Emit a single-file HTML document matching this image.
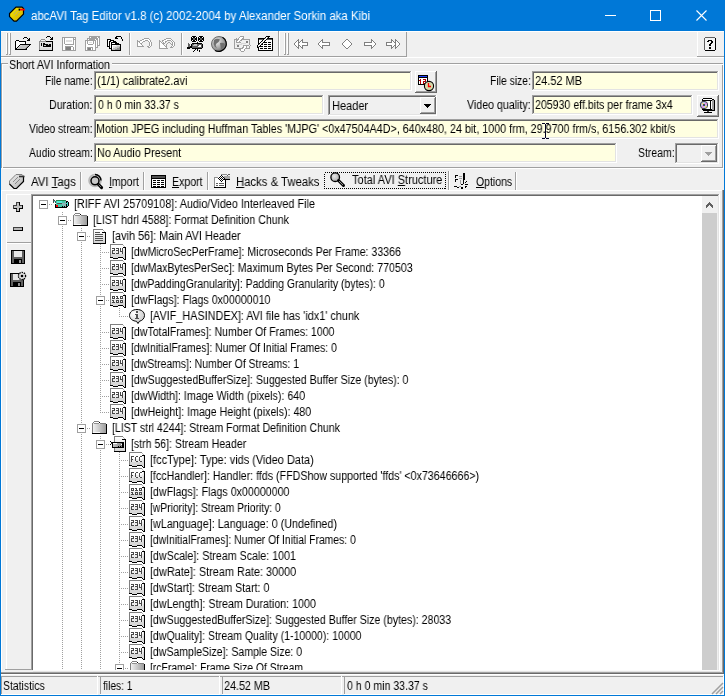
<!DOCTYPE html><html><head><meta charset="utf-8"><style>html,body{margin:0;padding:0;width:725px;height:696px;overflow:hidden;background:#f0f0f0;position:relative}svg{display:block}</style></head><body><div style="position:absolute;left:0px;top:0px;width:725px;height:31px;background:#0078d7;"></div>
<div style="position:absolute;left:0px;top:0px;width:1px;height:696px;background:#0078d7;"></div>
<div style="position:absolute;left:724px;top:0px;width:1px;height:696px;background:#0078d7;"></div>
<div style="position:absolute;left:0px;top:695px;width:725px;height:1px;background:#0078d7;"></div>
<svg style="position:absolute;left:6px;top:4px;" width="22" height="22" viewBox="0 0 22 22"><defs><linearGradient id="yg" x1="0" y1="0" x2="1" y2="1"><stop offset="0" stop-color="#fff000"/><stop offset="1" stop-color="#c8a800"/></linearGradient></defs>
<g transform="translate(0,0.6)">
<path d="M10 2.5 L16 2.5 L17.5 4 L17.5 9.5 L10.5 16.5 L8 16.5 L3.5 12 L3.5 9 Z" fill="url(#yg)" stroke="#000" stroke-width="1.2"/>
<path d="M7.5 9.5 L11.5 5.5 M9.5 11.5 L13.5 7.5" stroke="#9890c0" stroke-width="1" stroke-dasharray="1 0.5"/>
<path d="M14 5 L18.8 5" stroke="#ff0000" stroke-width="1.8"/><rect x="12.6" y="4" width="1.4" height="2" fill="#000"/></g></svg>
<div style="position:absolute;left:31.00px;top:6px;font:12px/20px 'Liberation Sans';white-space:pre;will-change:transform;transform:scaleX(0.9548);transform-origin:0 0;color:#fff;">abcAVI Tag Editor v1.8 (c) 2002-2004 by Alexander Sorkin aka Kibi</div>
<div style="position:absolute;left:605px;top:15px;width:11px;height:1px;background:#ffffff;"></div>
<svg style="position:absolute;left:650px;top:10px;" width="11" height="11" viewBox="0 0 11 11"><rect x="0.5" y="0.5" width="10" height="10" fill="none" stroke="#fff" stroke-width="1"/></svg>
<svg style="position:absolute;left:696px;top:10px;" width="11" height="11" viewBox="0 0 11 11"><path d="M0.5 0.5 L10.5 10.5 M10.5 0.5 L0.5 10.5" stroke="#fff" stroke-width="1.1"/></svg>
<div style="position:absolute;left:1px;top:31px;width:723px;height:1px;background:#ffffff;"></div>
<div style="position:absolute;left:278px;top:31px;width:1px;height:26px;background:#a0a0a0;"></div>
<div style="position:absolute;left:1px;top:56px;width:278px;height:1px;background:#a0a0a0;"></div>
<div style="position:absolute;left:6px;top:33px;width:1px;height:21px;background:#ffffff;"></div>
<div style="position:absolute;left:7px;top:33px;width:1px;height:22px;background:#a0a0a0;"></div>
<div style="position:absolute;left:6px;top:54px;width:2px;height:1px;background:#a0a0a0;"></div>
<div style="position:absolute;left:9px;top:33px;width:1px;height:21px;background:#ffffff;"></div>
<div style="position:absolute;left:10px;top:33px;width:1px;height:22px;background:#a0a0a0;"></div>
<div style="position:absolute;left:9px;top:54px;width:2px;height:1px;background:#a0a0a0;"></div>
<div style="position:absolute;left:279px;top:32px;width:1px;height:25px;background:#ffffff;"></div>
<div style="position:absolute;left:406px;top:32px;width:1px;height:25px;background:#a0a0a0;"></div>
<div style="position:absolute;left:279px;top:56px;width:128px;height:1px;background:#a0a0a0;"></div>
<div style="position:absolute;left:284px;top:33px;width:1px;height:21px;background:#ffffff;"></div>
<div style="position:absolute;left:285px;top:33px;width:1px;height:22px;background:#a0a0a0;"></div>
<div style="position:absolute;left:284px;top:54px;width:2px;height:1px;background:#a0a0a0;"></div>
<div style="position:absolute;left:287px;top:33px;width:1px;height:21px;background:#ffffff;"></div>
<div style="position:absolute;left:288px;top:33px;width:1px;height:22px;background:#a0a0a0;"></div>
<div style="position:absolute;left:287px;top:54px;width:2px;height:1px;background:#a0a0a0;"></div>
<div style="position:absolute;left:697px;top:32px;width:1px;height:25px;background:#ffffff;"></div>
<div style="position:absolute;left:697px;top:56px;width:27px;height:1px;background:#a0a0a0;"></div>
<div style="position:absolute;left:1px;top:57px;width:723px;height:1px;background:#ffffff;"></div>
<div style="position:absolute;left:129px;top:33px;width:1px;height:22px;background:#a0a0a0;"></div>
<div style="position:absolute;left:130px;top:33px;width:1px;height:22px;background:#ffffff;"></div>
<div style="position:absolute;left:181px;top:33px;width:1px;height:22px;background:#a0a0a0;"></div>
<div style="position:absolute;left:182px;top:33px;width:1px;height:22px;background:#ffffff;"></div>
<svg style="position:absolute;left:13px;top:34px;" width="20" height="20" viewBox="0 0 20 20"><g shape-rendering="crispEdges"><rect x="11" y="3" width="3" height="1" fill="#000"/><rect x="10" y="4" width="1" height="1" fill="#000"/><rect x="14" y="4" width="1" height="1" fill="#000"/><rect x="16" y="4" width="1" height="1" fill="#000"/><rect x="15" y="5" width="2" height="1" fill="#000"/><rect x="3" y="6" width="3" height="1" fill="#000"/><rect x="14" y="6" width="3" height="1" fill="#000"/><rect x="2" y="7" width="1" height="1" fill="#000"/><rect x="3" y="7" width="3" height="1" fill="#fff"/><rect x="6" y="7" width="7" height="1" fill="#000"/><rect x="2" y="8" width="1" height="1" fill="#000"/><rect x="3" y="8" width="9" height="1" fill="#fff"/><rect x="12" y="8" width="1" height="1" fill="#000"/><rect x="2" y="9" width="1" height="1" fill="#000"/><rect x="3" y="9" width="9" height="1" fill="#fff"/><rect x="12" y="9" width="1" height="1" fill="#000"/><rect x="2" y="10" width="1" height="1" fill="#000"/><rect x="3" y="10" width="4" height="1" fill="#fff"/><rect x="7" y="10" width="11" height="1" fill="#000"/><rect x="2" y="11" width="1" height="1" fill="#000"/><rect x="3" y="11" width="3" height="1" fill="#fff"/><rect x="6" y="11" width="1" height="1" fill="#000"/><rect x="7" y="11" width="2" height="1" fill="#d8d8d8"/><rect x="9" y="11" width="7" height="1" fill="#c0c0c0"/><rect x="16" y="11" width="1" height="1" fill="#000"/><rect x="2" y="12" width="1" height="1" fill="#000"/><rect x="3" y="12" width="2" height="1" fill="#fff"/><rect x="5" y="12" width="1" height="1" fill="#000"/><rect x="6" y="12" width="1" height="1" fill="#d8d8d8"/><rect x="7" y="12" width="7" height="1" fill="#c0c0c0"/><rect x="14" y="12" width="1" height="1" fill="#909090"/><rect x="15" y="12" width="1" height="1" fill="#000"/><rect x="2" y="13" width="1" height="1" fill="#000"/><rect x="3" y="13" width="1" height="1" fill="#fff"/><rect x="4" y="13" width="1" height="1" fill="#000"/><rect x="5" y="13" width="1" height="1" fill="#d8d8d8"/><rect x="6" y="13" width="7" height="1" fill="#c0c0c0"/><rect x="13" y="13" width="1" height="1" fill="#909090"/><rect x="14" y="13" width="1" height="1" fill="#000"/><rect x="2" y="14" width="2" height="1" fill="#000"/><rect x="4" y="14" width="1" height="1" fill="#d8d8d8"/><rect x="5" y="14" width="7" height="1" fill="#c0c0c0"/><rect x="12" y="14" width="1" height="1" fill="#909090"/><rect x="13" y="14" width="1" height="1" fill="#000"/><rect x="2" y="15" width="12" height="1" fill="#000"/></g></svg>
<svg style="position:absolute;left:37px;top:34px;" width="20" height="20" viewBox="0 0 20 20"><g shape-rendering="crispEdges"><rect x="10" y="2" width="3" height="1" fill="#000"/><rect x="9" y="3" width="1" height="1" fill="#000"/><rect x="13" y="3" width="1" height="1" fill="#000"/><rect x="15" y="3" width="1" height="1" fill="#000"/><rect x="14" y="4" width="2" height="1" fill="#000"/><rect x="4" y="5" width="4" height="1" fill="#909090"/><rect x="13" y="5" width="3" height="1" fill="#000"/><rect x="3" y="6" width="1" height="1" fill="#909090"/><rect x="8" y="6" width="1" height="1" fill="#909090"/><rect x="2" y="7" width="7" height="1" fill="#909090"/><rect x="9" y="7" width="7" height="1" fill="#000"/><rect x="2" y="8" width="1" height="1" fill="#909090"/><rect x="3" y="8" width="12" height="1" fill="#e0e0e0"/><rect x="15" y="8" width="1" height="1" fill="#000"/><rect x="2" y="9" width="1" height="1" fill="#909090"/><rect x="3" y="9" width="1" height="1" fill="#e0e0e0"/><rect x="4" y="9" width="1" height="1" fill="#000"/><rect x="5" y="9" width="1" height="1" fill="#e0e0e0"/><rect x="6" y="9" width="2" height="1" fill="#000"/><rect x="8" y="9" width="7" height="1" fill="#e0e0e0"/><rect x="15" y="9" width="1" height="1" fill="#000"/><rect x="2" y="10" width="1" height="1" fill="#909090"/><rect x="3" y="10" width="1" height="1" fill="#e0e0e0"/><rect x="4" y="10" width="1" height="1" fill="#000"/><rect x="5" y="10" width="1" height="1" fill="#e0e0e0"/><rect x="6" y="10" width="5" height="1" fill="#000"/><rect x="11" y="10" width="1" height="1" fill="#c0c0c0"/><rect x="12" y="10" width="2" height="1" fill="#000"/><rect x="14" y="10" width="1" height="1" fill="#e0e0e0"/><rect x="15" y="10" width="1" height="1" fill="#000"/><rect x="2" y="11" width="1" height="1" fill="#909090"/><rect x="3" y="11" width="1" height="1" fill="#e0e0e0"/><rect x="4" y="11" width="1" height="1" fill="#000"/><rect x="5" y="11" width="1" height="1" fill="#e0e0e0"/><rect x="6" y="11" width="1" height="1" fill="#000"/><rect x="7" y="11" width="2" height="1" fill="#c0c0c0"/><rect x="9" y="11" width="5" height="1" fill="#000"/><rect x="14" y="11" width="1" height="1" fill="#e0e0e0"/><rect x="15" y="11" width="1" height="1" fill="#000"/><rect x="2" y="12" width="1" height="1" fill="#909090"/><rect x="3" y="12" width="3" height="1" fill="#e0e0e0"/><rect x="6" y="12" width="8" height="1" fill="#000"/><rect x="14" y="12" width="1" height="1" fill="#e0e0e0"/><rect x="15" y="12" width="1" height="1" fill="#000"/><rect x="2" y="13" width="1" height="1" fill="#909090"/><rect x="3" y="13" width="12" height="1" fill="#e0e0e0"/><rect x="15" y="13" width="1" height="1" fill="#000"/><rect x="2" y="14" width="1" height="1" fill="#909090"/><rect x="3" y="14" width="12" height="1" fill="#d8d8d8"/><rect x="15" y="14" width="1" height="1" fill="#000"/><rect x="2" y="15" width="1" height="1" fill="#909090"/><rect x="3" y="15" width="12" height="1" fill="#d8d8d8"/><rect x="15" y="15" width="1" height="1" fill="#000"/><rect x="2" y="16" width="14" height="1" fill="#000"/></g></svg>
<svg style="position:absolute;left:60px;top:34px;" width="20" height="20" viewBox="0 0 20 20"><g shape-rendering="crispEdges"><rect x="2" y="3" width="14" height="1" fill="#a0a0a0"/><rect x="2" y="4" width="1" height="1" fill="#a0a0a0"/><rect x="3" y="4" width="1" height="1" fill="#fff"/><rect x="4" y="4" width="1" height="1" fill="#a0a0a0"/><rect x="5" y="4" width="8" height="1" fill="#fff"/><rect x="13" y="4" width="1" height="1" fill="#a0a0a0"/><rect x="14" y="4" width="1" height="1" fill="#fff"/><rect x="15" y="4" width="1" height="1" fill="#a0a0a0"/><rect x="2" y="5" width="1" height="1" fill="#a0a0a0"/><rect x="3" y="5" width="1" height="1" fill="#fff"/><rect x="4" y="5" width="1" height="1" fill="#a0a0a0"/><rect x="5" y="5" width="8" height="1" fill="#fff"/><rect x="13" y="5" width="3" height="1" fill="#a0a0a0"/><rect x="2" y="6" width="1" height="1" fill="#a0a0a0"/><rect x="3" y="6" width="1" height="1" fill="#fff"/><rect x="4" y="6" width="1" height="1" fill="#a0a0a0"/><rect x="5" y="6" width="1" height="1" fill="#fff"/><rect x="6" y="6" width="6" height="1" fill="#e0e0e0"/><rect x="12" y="6" width="1" height="1" fill="#fff"/><rect x="13" y="6" width="1" height="1" fill="#a0a0a0"/><rect x="14" y="6" width="1" height="1" fill="#fff"/><rect x="15" y="6" width="1" height="1" fill="#a0a0a0"/><rect x="2" y="7" width="1" height="1" fill="#a0a0a0"/><rect x="3" y="7" width="1" height="1" fill="#fff"/><rect x="4" y="7" width="1" height="1" fill="#a0a0a0"/><rect x="5" y="7" width="1" height="1" fill="#fff"/><rect x="6" y="7" width="6" height="1" fill="#e0e0e0"/><rect x="12" y="7" width="1" height="1" fill="#fff"/><rect x="13" y="7" width="1" height="1" fill="#a0a0a0"/><rect x="14" y="7" width="1" height="1" fill="#fff"/><rect x="15" y="7" width="1" height="1" fill="#a0a0a0"/><rect x="2" y="8" width="1" height="1" fill="#a0a0a0"/><rect x="3" y="8" width="1" height="1" fill="#fff"/><rect x="4" y="8" width="1" height="1" fill="#a0a0a0"/><rect x="5" y="8" width="8" height="1" fill="#fff"/><rect x="13" y="8" width="1" height="1" fill="#a0a0a0"/><rect x="14" y="8" width="1" height="1" fill="#fff"/><rect x="15" y="8" width="1" height="1" fill="#a0a0a0"/><rect x="2" y="9" width="1" height="1" fill="#a0a0a0"/><rect x="3" y="9" width="1" height="1" fill="#fff"/><rect x="4" y="9" width="1" height="1" fill="#a0a0a0"/><rect x="5" y="9" width="8" height="1" fill="#fff"/><rect x="13" y="9" width="1" height="1" fill="#a0a0a0"/><rect x="14" y="9" width="1" height="1" fill="#fff"/><rect x="15" y="9" width="1" height="1" fill="#a0a0a0"/><rect x="2" y="10" width="1" height="1" fill="#a0a0a0"/><rect x="3" y="10" width="2" height="1" fill="#fff"/><rect x="5" y="10" width="9" height="1" fill="#a0a0a0"/><rect x="14" y="10" width="1" height="1" fill="#fff"/><rect x="15" y="10" width="1" height="1" fill="#a0a0a0"/><rect x="2" y="11" width="1" height="1" fill="#a0a0a0"/><rect x="3" y="11" width="12" height="1" fill="#fff"/><rect x="15" y="11" width="1" height="1" fill="#a0a0a0"/><rect x="2" y="12" width="1" height="1" fill="#a0a0a0"/><rect x="3" y="12" width="2" height="1" fill="#fff"/><rect x="5" y="12" width="8" height="1" fill="#a0a0a0"/><rect x="13" y="12" width="2" height="1" fill="#fff"/><rect x="15" y="12" width="1" height="1" fill="#a0a0a0"/><rect x="2" y="13" width="1" height="1" fill="#a0a0a0"/><rect x="3" y="13" width="2" height="1" fill="#fff"/><rect x="5" y="13" width="1" height="1" fill="#a0a0a0"/><rect x="6" y="13" width="5" height="1" fill="#808080"/><rect x="11" y="13" width="2" height="1" fill="#fff"/><rect x="13" y="13" width="1" height="1" fill="#a0a0a0"/><rect x="14" y="13" width="1" height="1" fill="#fff"/><rect x="15" y="13" width="1" height="1" fill="#a0a0a0"/><rect x="2" y="14" width="1" height="1" fill="#a0a0a0"/><rect x="3" y="14" width="2" height="1" fill="#fff"/><rect x="5" y="14" width="1" height="1" fill="#a0a0a0"/><rect x="6" y="14" width="5" height="1" fill="#808080"/><rect x="11" y="14" width="2" height="1" fill="#fff"/><rect x="13" y="14" width="1" height="1" fill="#a0a0a0"/><rect x="14" y="14" width="1" height="1" fill="#fff"/><rect x="15" y="14" width="1" height="1" fill="#a0a0a0"/><rect x="2" y="15" width="1" height="1" fill="#a0a0a0"/><rect x="3" y="15" width="2" height="1" fill="#fff"/><rect x="5" y="15" width="1" height="1" fill="#a0a0a0"/><rect x="6" y="15" width="5" height="1" fill="#808080"/><rect x="11" y="15" width="2" height="1" fill="#fff"/><rect x="13" y="15" width="1" height="1" fill="#a0a0a0"/><rect x="14" y="15" width="1" height="1" fill="#fff"/><rect x="15" y="15" width="1" height="1" fill="#a0a0a0"/><rect x="2" y="16" width="14" height="1" fill="#a0a0a0"/></g></svg>
<svg style="position:absolute;left:83px;top:34px;" width="20" height="20" viewBox="0 0 20 20"><g shape-rendering="crispEdges"><rect x="6" y="2" width="11" height="1" fill="#a0a0a0"/><rect x="6" y="3" width="1" height="1" fill="#a0a0a0"/><rect x="7" y="3" width="1" height="1" fill="#fff"/><rect x="8" y="3" width="6" height="1" fill="#a0a0a0"/><rect x="14" y="3" width="1" height="1" fill="#fff"/><rect x="15" y="3" width="2" height="1" fill="#a0a0a0"/><rect x="4" y="4" width="11" height="1" fill="#a0a0a0"/><rect x="15" y="4" width="1" height="1" fill="#fff"/><rect x="16" y="4" width="1" height="1" fill="#a0a0a0"/><rect x="4" y="5" width="1" height="1" fill="#a0a0a0"/><rect x="5" y="5" width="1" height="1" fill="#fff"/><rect x="6" y="5" width="6" height="1" fill="#a0a0a0"/><rect x="12" y="5" width="1" height="1" fill="#fff"/><rect x="13" y="5" width="2" height="1" fill="#a0a0a0"/><rect x="15" y="5" width="1" height="1" fill="#fff"/><rect x="16" y="5" width="1" height="1" fill="#a0a0a0"/><rect x="2" y="6" width="11" height="1" fill="#a0a0a0"/><rect x="13" y="6" width="1" height="1" fill="#fff"/><rect x="14" y="6" width="1" height="1" fill="#a0a0a0"/><rect x="15" y="6" width="1" height="1" fill="#fff"/><rect x="16" y="6" width="1" height="1" fill="#a0a0a0"/><rect x="2" y="7" width="1" height="1" fill="#a0a0a0"/><rect x="3" y="7" width="1" height="1" fill="#fff"/><rect x="4" y="7" width="1" height="1" fill="#a0a0a0"/><rect x="5" y="7" width="5" height="1" fill="#fff"/><rect x="10" y="7" width="1" height="1" fill="#a0a0a0"/><rect x="11" y="7" width="1" height="1" fill="#fff"/><rect x="12" y="7" width="1" height="1" fill="#a0a0a0"/><rect x="13" y="7" width="1" height="1" fill="#fff"/><rect x="14" y="7" width="1" height="1" fill="#a0a0a0"/><rect x="15" y="7" width="1" height="1" fill="#fff"/><rect x="16" y="7" width="1" height="1" fill="#a0a0a0"/><rect x="2" y="8" width="1" height="1" fill="#a0a0a0"/><rect x="3" y="8" width="1" height="1" fill="#fff"/><rect x="4" y="8" width="1" height="1" fill="#a0a0a0"/><rect x="5" y="8" width="1" height="1" fill="#fff"/><rect x="6" y="8" width="3" height="1" fill="#e0e0e0"/><rect x="9" y="8" width="1" height="1" fill="#fff"/><rect x="10" y="8" width="1" height="1" fill="#a0a0a0"/><rect x="11" y="8" width="1" height="1" fill="#fff"/><rect x="12" y="8" width="1" height="1" fill="#a0a0a0"/><rect x="13" y="8" width="1" height="1" fill="#fff"/><rect x="14" y="8" width="1" height="1" fill="#a0a0a0"/><rect x="15" y="8" width="1" height="1" fill="#fff"/><rect x="16" y="8" width="1" height="1" fill="#a0a0a0"/><rect x="2" y="9" width="1" height="1" fill="#a0a0a0"/><rect x="3" y="9" width="1" height="1" fill="#fff"/><rect x="4" y="9" width="1" height="1" fill="#a0a0a0"/><rect x="5" y="9" width="5" height="1" fill="#fff"/><rect x="10" y="9" width="1" height="1" fill="#a0a0a0"/><rect x="11" y="9" width="1" height="1" fill="#fff"/><rect x="12" y="9" width="1" height="1" fill="#a0a0a0"/><rect x="13" y="9" width="1" height="1" fill="#fff"/><rect x="14" y="9" width="1" height="1" fill="#a0a0a0"/><rect x="15" y="9" width="1" height="1" fill="#fff"/><rect x="16" y="9" width="1" height="1" fill="#a0a0a0"/><rect x="2" y="10" width="1" height="1" fill="#a0a0a0"/><rect x="3" y="10" width="2" height="1" fill="#fff"/><rect x="5" y="10" width="5" height="1" fill="#a0a0a0"/><rect x="10" y="10" width="2" height="1" fill="#fff"/><rect x="12" y="10" width="1" height="1" fill="#a0a0a0"/><rect x="13" y="10" width="1" height="1" fill="#fff"/><rect x="14" y="10" width="1" height="1" fill="#a0a0a0"/><rect x="15" y="10" width="1" height="1" fill="#fff"/><rect x="16" y="10" width="1" height="1" fill="#a0a0a0"/><rect x="2" y="11" width="1" height="1" fill="#a0a0a0"/><rect x="3" y="11" width="9" height="1" fill="#fff"/><rect x="12" y="11" width="1" height="1" fill="#a0a0a0"/><rect x="13" y="11" width="1" height="1" fill="#fff"/><rect x="14" y="11" width="3" height="1" fill="#a0a0a0"/><rect x="2" y="12" width="1" height="1" fill="#a0a0a0"/><rect x="3" y="12" width="9" height="1" fill="#fff"/><rect x="12" y="12" width="1" height="1" fill="#a0a0a0"/><rect x="13" y="12" width="1" height="1" fill="#fff"/><rect x="14" y="12" width="1" height="1" fill="#a0a0a0"/><rect x="2" y="13" width="1" height="1" fill="#a0a0a0"/><rect x="3" y="13" width="1" height="1" fill="#fff"/><rect x="4" y="13" width="6" height="1" fill="#a0a0a0"/><rect x="10" y="13" width="2" height="1" fill="#fff"/><rect x="12" y="13" width="3" height="1" fill="#a0a0a0"/><rect x="2" y="14" width="1" height="1" fill="#a0a0a0"/><rect x="3" y="14" width="1" height="1" fill="#fff"/><rect x="4" y="14" width="1" height="1" fill="#a0a0a0"/><rect x="5" y="14" width="3" height="1" fill="#808080"/><rect x="8" y="14" width="1" height="1" fill="#fff"/><rect x="9" y="14" width="1" height="1" fill="#a0a0a0"/><rect x="10" y="14" width="2" height="1" fill="#fff"/><rect x="12" y="14" width="1" height="1" fill="#a0a0a0"/><rect x="2" y="15" width="1" height="1" fill="#a0a0a0"/><rect x="3" y="15" width="1" height="1" fill="#fff"/><rect x="4" y="15" width="1" height="1" fill="#a0a0a0"/><rect x="5" y="15" width="3" height="1" fill="#808080"/><rect x="8" y="15" width="1" height="1" fill="#fff"/><rect x="9" y="15" width="1" height="1" fill="#a0a0a0"/><rect x="10" y="15" width="2" height="1" fill="#fff"/><rect x="12" y="15" width="1" height="1" fill="#a0a0a0"/><rect x="2" y="16" width="11" height="1" fill="#a0a0a0"/></g></svg>
<svg style="position:absolute;left:105px;top:34px;" width="20" height="20" viewBox="0 0 20 20"><g shape-rendering="crispEdges"><rect x="11" y="2" width="5" height="1" fill="#000"/><rect x="10" y="3" width="2" height="1" fill="#000"/><rect x="16" y="3" width="1" height="1" fill="#000"/><rect x="10" y="4" width="3" height="1" fill="#000"/><rect x="16" y="4" width="1" height="1" fill="#000"/><rect x="2" y="5" width="4" height="1" fill="#000"/><rect x="17" y="5" width="1" height="1" fill="#000"/><rect x="2" y="6" width="1" height="1" fill="#000"/><rect x="3" y="6" width="2" height="1" fill="#fff"/><rect x="5" y="6" width="4" height="1" fill="#000"/><rect x="17" y="6" width="1" height="1" fill="#000"/><rect x="2" y="7" width="1" height="1" fill="#000"/><rect x="3" y="7" width="1" height="1" fill="#fff"/><rect x="4" y="7" width="2" height="1" fill="#000"/><rect x="6" y="7" width="2" height="1" fill="#fff"/><rect x="8" y="7" width="3" height="1" fill="#000"/><rect x="2" y="8" width="1" height="1" fill="#000"/><rect x="3" y="8" width="1" height="1" fill="#fff"/><rect x="4" y="8" width="1" height="1" fill="#000"/><rect x="5" y="8" width="1" height="1" fill="#fff"/><rect x="6" y="8" width="6" height="1" fill="#000"/><rect x="2" y="9" width="1" height="1" fill="#000"/><rect x="3" y="9" width="1" height="1" fill="#fff"/><rect x="4" y="9" width="1" height="1" fill="#000"/><rect x="5" y="9" width="1" height="1" fill="#fff"/><rect x="6" y="9" width="1" height="1" fill="#000"/><rect x="7" y="9" width="3" height="1" fill="#fff"/><rect x="10" y="9" width="4" height="1" fill="#000"/><rect x="2" y="10" width="1" height="1" fill="#000"/><rect x="3" y="10" width="1" height="1" fill="#fff"/><rect x="4" y="10" width="1" height="1" fill="#000"/><rect x="5" y="10" width="1" height="1" fill="#fff"/><rect x="6" y="10" width="10" height="1" fill="#000"/><rect x="2" y="11" width="1" height="1" fill="#000"/><rect x="3" y="11" width="1" height="1" fill="#fff"/><rect x="4" y="11" width="1" height="1" fill="#000"/><rect x="5" y="11" width="1" height="1" fill="#fff"/><rect x="6" y="11" width="1" height="1" fill="#000"/><rect x="7" y="11" width="4" height="1" fill="#fff"/><rect x="11" y="11" width="4" height="1" fill="#e0e0e0"/><rect x="15" y="11" width="1" height="1" fill="#000"/><rect x="2" y="12" width="3" height="1" fill="#000"/><rect x="5" y="12" width="1" height="1" fill="#fff"/><rect x="6" y="12" width="1" height="1" fill="#000"/><rect x="7" y="12" width="1" height="1" fill="#fff"/><rect x="8" y="12" width="4" height="1" fill="#e0e0e0"/><rect x="12" y="12" width="3" height="1" fill="#c0c0c0"/><rect x="15" y="12" width="1" height="1" fill="#000"/><rect x="4" y="13" width="1" height="1" fill="#000"/><rect x="5" y="13" width="1" height="1" fill="#fff"/><rect x="6" y="13" width="1" height="1" fill="#000"/><rect x="7" y="13" width="1" height="1" fill="#fff"/><rect x="8" y="13" width="2" height="1" fill="#e0e0e0"/><rect x="10" y="13" width="4" height="1" fill="#c0c0c0"/><rect x="14" y="13" width="1" height="1" fill="#909090"/><rect x="15" y="13" width="1" height="1" fill="#000"/><rect x="4" y="14" width="3" height="1" fill="#000"/><rect x="7" y="14" width="1" height="1" fill="#fff"/><rect x="8" y="14" width="4" height="1" fill="#c0c0c0"/><rect x="12" y="14" width="3" height="1" fill="#909090"/><rect x="15" y="14" width="1" height="1" fill="#000"/><rect x="6" y="15" width="1" height="1" fill="#000"/><rect x="7" y="15" width="3" height="1" fill="#c0c0c0"/><rect x="10" y="15" width="5" height="1" fill="#909090"/><rect x="15" y="15" width="1" height="1" fill="#000"/><rect x="6" y="16" width="10" height="1" fill="#000"/></g></svg>
<svg style="position:absolute;left:134px;top:34px;" width="20" height="20" viewBox="0 0 20 20"><g shape-rendering="crispEdges"><rect x="10" y="4" width="5" height="1" fill="#a0a0a0"/><rect x="8" y="5" width="2" height="1" fill="#a0a0a0"/><rect x="10" y="5" width="5" height="1" fill="#fff"/><rect x="15" y="5" width="1" height="1" fill="#a0a0a0"/><rect x="3" y="6" width="1" height="1" fill="#a0a0a0"/><rect x="6" y="6" width="2" height="1" fill="#a0a0a0"/><rect x="8" y="6" width="3" height="1" fill="#fff"/><rect x="11" y="6" width="3" height="1" fill="#a0a0a0"/><rect x="14" y="6" width="2" height="1" fill="#fff"/><rect x="16" y="6" width="1" height="1" fill="#a0a0a0"/><rect x="3" y="7" width="3" height="1" fill="#a0a0a0"/><rect x="6" y="7" width="3" height="1" fill="#fff"/><rect x="9" y="7" width="2" height="1" fill="#a0a0a0"/><rect x="14" y="7" width="1" height="1" fill="#a0a0a0"/><rect x="15" y="7" width="1" height="1" fill="#fff"/><rect x="16" y="7" width="1" height="1" fill="#a0a0a0"/><rect x="3" y="8" width="1" height="1" fill="#a0a0a0"/><rect x="4" y="8" width="1" height="1" fill="#fff"/><rect x="5" y="8" width="1" height="1" fill="#a0a0a0"/><rect x="6" y="8" width="2" height="1" fill="#fff"/><rect x="8" y="8" width="1" height="1" fill="#a0a0a0"/><rect x="15" y="8" width="1" height="1" fill="#a0a0a0"/><rect x="16" y="8" width="1" height="1" fill="#fff"/><rect x="17" y="8" width="1" height="1" fill="#a0a0a0"/><rect x="3" y="9" width="1" height="1" fill="#a0a0a0"/><rect x="4" y="9" width="2" height="1" fill="#fff"/><rect x="6" y="9" width="2" height="1" fill="#a0a0a0"/><rect x="15" y="9" width="1" height="1" fill="#a0a0a0"/><rect x="16" y="9" width="1" height="1" fill="#fff"/><rect x="17" y="9" width="1" height="1" fill="#a0a0a0"/><rect x="3" y="10" width="1" height="1" fill="#a0a0a0"/><rect x="4" y="10" width="3" height="1" fill="#fff"/><rect x="7" y="10" width="1" height="1" fill="#a0a0a0"/><rect x="15" y="10" width="1" height="1" fill="#a0a0a0"/><rect x="16" y="10" width="1" height="1" fill="#fff"/><rect x="17" y="10" width="1" height="1" fill="#a0a0a0"/><rect x="3" y="11" width="1" height="1" fill="#a0a0a0"/><rect x="4" y="11" width="4" height="1" fill="#fff"/><rect x="8" y="11" width="1" height="1" fill="#a0a0a0"/><rect x="15" y="11" width="1" height="1" fill="#a0a0a0"/><rect x="16" y="11" width="1" height="1" fill="#fff"/><rect x="17" y="11" width="1" height="1" fill="#a0a0a0"/><rect x="3" y="12" width="7" height="1" fill="#a0a0a0"/><rect x="13" y="12" width="2" height="1" fill="#a0a0a0"/><rect x="15" y="12" width="1" height="1" fill="#fff"/><rect x="16" y="12" width="1" height="1" fill="#a0a0a0"/><rect x="14" y="13" width="2" height="1" fill="#a0a0a0"/></g></svg>
<svg style="position:absolute;left:156px;top:34px;" width="20" height="20" viewBox="0 0 20 20"><g shape-rendering="crispEdges"><rect x="10" y="4" width="5" height="1" fill="#a0a0a0"/><rect x="8" y="5" width="2" height="1" fill="#a0a0a0"/><rect x="10" y="5" width="5" height="1" fill="#fff"/><rect x="15" y="5" width="1" height="1" fill="#a0a0a0"/><rect x="3" y="6" width="1" height="1" fill="#a0a0a0"/><rect x="6" y="6" width="2" height="1" fill="#a0a0a0"/><rect x="8" y="6" width="3" height="1" fill="#fff"/><rect x="11" y="6" width="4" height="1" fill="#a0a0a0"/><rect x="15" y="6" width="1" height="1" fill="#fff"/><rect x="16" y="6" width="1" height="1" fill="#a0a0a0"/><rect x="3" y="7" width="2" height="1" fill="#a0a0a0"/><rect x="6" y="7" width="1" height="1" fill="#a0a0a0"/><rect x="7" y="7" width="2" height="1" fill="#fff"/><rect x="9" y="7" width="2" height="1" fill="#a0a0a0"/><rect x="15" y="7" width="1" height="1" fill="#a0a0a0"/><rect x="16" y="7" width="1" height="1" fill="#fff"/><rect x="17" y="7" width="1" height="1" fill="#a0a0a0"/><rect x="3" y="8" width="1" height="1" fill="#a0a0a0"/><rect x="4" y="8" width="1" height="1" fill="#fff"/><rect x="5" y="8" width="1" height="1" fill="#a0a0a0"/><rect x="7" y="8" width="1" height="1" fill="#a0a0a0"/><rect x="8" y="8" width="1" height="1" fill="#fff"/><rect x="9" y="8" width="1" height="1" fill="#a0a0a0"/><rect x="12" y="8" width="2" height="1" fill="#a0a0a0"/><rect x="16" y="8" width="1" height="1" fill="#a0a0a0"/><rect x="17" y="8" width="1" height="1" fill="#fff"/><rect x="18" y="8" width="1" height="1" fill="#a0a0a0"/><rect x="3" y="9" width="1" height="1" fill="#a0a0a0"/><rect x="4" y="9" width="2" height="1" fill="#fff"/><rect x="6" y="9" width="3" height="1" fill="#a0a0a0"/><rect x="11" y="9" width="1" height="1" fill="#a0a0a0"/><rect x="14" y="9" width="1" height="1" fill="#a0a0a0"/><rect x="16" y="9" width="1" height="1" fill="#a0a0a0"/><rect x="17" y="9" width="1" height="1" fill="#fff"/><rect x="18" y="9" width="1" height="1" fill="#a0a0a0"/><rect x="3" y="10" width="1" height="1" fill="#a0a0a0"/><rect x="4" y="10" width="3" height="1" fill="#fff"/><rect x="7" y="10" width="1" height="1" fill="#a0a0a0"/><rect x="10" y="10" width="1" height="1" fill="#a0a0a0"/><rect x="15" y="10" width="2" height="1" fill="#a0a0a0"/><rect x="17" y="10" width="1" height="1" fill="#fff"/><rect x="18" y="10" width="1" height="1" fill="#a0a0a0"/><rect x="3" y="11" width="1" height="1" fill="#a0a0a0"/><rect x="4" y="11" width="4" height="1" fill="#fff"/><rect x="8" y="11" width="1" height="1" fill="#a0a0a0"/><rect x="10" y="11" width="1" height="1" fill="#a0a0a0"/><rect x="16" y="11" width="1" height="1" fill="#a0a0a0"/><rect x="17" y="11" width="1" height="1" fill="#fff"/><rect x="18" y="11" width="1" height="1" fill="#a0a0a0"/><rect x="3" y="12" width="1" height="1" fill="#a0a0a0"/><rect x="4" y="12" width="5" height="1" fill="#fff"/><rect x="9" y="12" width="2" height="1" fill="#a0a0a0"/><rect x="15" y="12" width="1" height="1" fill="#a0a0a0"/><rect x="16" y="12" width="1" height="1" fill="#fff"/><rect x="17" y="12" width="1" height="1" fill="#a0a0a0"/><rect x="3" y="13" width="1" height="1" fill="#a0a0a0"/><rect x="4" y="13" width="6" height="1" fill="#fff"/><rect x="10" y="13" width="1" height="1" fill="#a0a0a0"/><rect x="14" y="13" width="3" height="1" fill="#a0a0a0"/><rect x="3" y="14" width="9" height="1" fill="#a0a0a0"/></g></svg>
<svg style="position:absolute;left:187px;top:34px;" width="20" height="20" viewBox="0 0 20 20"><g shape-rendering="crispEdges"><rect x="5" y="2" width="4" height="1" fill="#000"/><rect x="12" y="2" width="4" height="1" fill="#000"/><rect x="4" y="3" width="1" height="1" fill="#000"/><rect x="5" y="3" width="1" height="1" fill="#fff"/><rect x="6" y="3" width="2" height="1" fill="#000"/><rect x="8" y="3" width="1" height="1" fill="#fff"/><rect x="9" y="3" width="1" height="1" fill="#000"/><rect x="11" y="3" width="1" height="1" fill="#000"/><rect x="12" y="3" width="1" height="1" fill="#fff"/><rect x="13" y="3" width="2" height="1" fill="#000"/><rect x="15" y="3" width="1" height="1" fill="#fff"/><rect x="16" y="3" width="1" height="1" fill="#000"/><rect x="4" y="4" width="2" height="1" fill="#000"/><rect x="6" y="4" width="2" height="1" fill="#606060"/><rect x="8" y="4" width="2" height="1" fill="#000"/><rect x="11" y="4" width="2" height="1" fill="#000"/><rect x="13" y="4" width="2" height="1" fill="#606060"/><rect x="15" y="4" width="2" height="1" fill="#000"/><rect x="4" y="5" width="2" height="1" fill="#000"/><rect x="6" y="5" width="2" height="1" fill="#606060"/><rect x="8" y="5" width="2" height="1" fill="#000"/><rect x="11" y="5" width="2" height="1" fill="#000"/><rect x="13" y="5" width="2" height="1" fill="#606060"/><rect x="15" y="5" width="2" height="1" fill="#000"/><rect x="4" y="6" width="1" height="1" fill="#000"/><rect x="5" y="6" width="1" height="1" fill="#fff"/><rect x="6" y="6" width="2" height="1" fill="#000"/><rect x="8" y="6" width="1" height="1" fill="#fff"/><rect x="9" y="6" width="1" height="1" fill="#000"/><rect x="11" y="6" width="1" height="1" fill="#000"/><rect x="12" y="6" width="1" height="1" fill="#fff"/><rect x="13" y="6" width="2" height="1" fill="#000"/><rect x="15" y="6" width="1" height="1" fill="#fff"/><rect x="16" y="6" width="1" height="1" fill="#000"/><rect x="5" y="7" width="4" height="1" fill="#000"/><rect x="12" y="7" width="4" height="1" fill="#000"/><rect x="10" y="8" width="1" height="1" fill="#000"/><rect x="1" y="9" width="1" height="1" fill="#606060"/><rect x="5" y="9" width="10" height="1" fill="#000"/><rect x="1" y="10" width="2" height="1" fill="#606060"/><rect x="4" y="10" width="1" height="1" fill="#000"/><rect x="5" y="10" width="2" height="1" fill="#606060"/><rect x="7" y="10" width="3" height="1" fill="#c0c0c0"/><rect x="10" y="10" width="5" height="1" fill="#606060"/><rect x="15" y="10" width="1" height="1" fill="#000"/><rect x="1" y="11" width="2" height="1" fill="#606060"/><rect x="4" y="11" width="1" height="1" fill="#000"/><rect x="5" y="11" width="1" height="1" fill="#606060"/><rect x="6" y="11" width="4" height="1" fill="#c0c0c0"/><rect x="10" y="11" width="2" height="1" fill="#606060"/><rect x="12" y="11" width="2" height="1" fill="#fff"/><rect x="14" y="11" width="1" height="1" fill="#606060"/><rect x="15" y="11" width="1" height="1" fill="#000"/><rect x="1" y="12" width="2" height="1" fill="#606060"/><rect x="3" y="12" width="2" height="1" fill="#000"/><rect x="5" y="12" width="6" height="1" fill="#606060"/><rect x="11" y="12" width="3" height="1" fill="#fff"/><rect x="14" y="12" width="1" height="1" fill="#606060"/><rect x="15" y="12" width="1" height="1" fill="#000"/><rect x="0" y="13" width="5" height="1" fill="#000"/><rect x="5" y="13" width="10" height="1" fill="#606060"/><rect x="15" y="13" width="1" height="1" fill="#000"/><rect x="0" y="14" width="3" height="1" fill="#000"/><rect x="5" y="14" width="10" height="1" fill="#000"/><rect x="8" y="15" width="1" height="1" fill="#000"/><rect x="10" y="15" width="1" height="1" fill="#000"/><rect x="7" y="16" width="1" height="1" fill="#000"/><rect x="10" y="16" width="1" height="1" fill="#000"/><rect x="12" y="16" width="1" height="1" fill="#000"/><rect x="6" y="17" width="1" height="1" fill="#000"/><rect x="12" y="17" width="1" height="1" fill="#000"/></g></svg>
<svg style="position:absolute;left:209px;top:34px;" width="20" height="20" viewBox="0 0 20 20"><defs><radialGradient id="gl" cx="0.35" cy="0.35" r="0.75"><stop offset="0" stop-color="#f0f0f0"/><stop offset="0.55" stop-color="#a8a8a8"/><stop offset="1" stop-color="#606060"/></radialGradient></defs>
<circle cx="10" cy="10" r="7.5" fill="url(#gl)" stroke="#505050" stroke-width="0.8"/>
<path d="M13.5 3.3 A7.5 7.5 0 0 1 6 16.4" fill="none" stroke="#000" stroke-width="1.1"/>
<path d="M5 6 Q8 4 11 5.5 Q10 8.5 7 10 Q6 12 8 14 Q5 13 4.5 10 Z M11 9 Q14 8 16 10 Q15.5 13.5 12 15.5 Q11.5 12.5 11 9 Z" fill="#707070"/></svg>
<svg style="position:absolute;left:232px;top:34px;" width="20" height="20" viewBox="0 0 20 20"><g shape-rendering="crispEdges"><rect x="8" y="2" width="4" height="1" fill="#a0a0a0"/><rect x="7" y="3" width="1" height="1" fill="#a0a0a0"/><rect x="8" y="3" width="3" height="1" fill="#fff"/><rect x="11" y="3" width="1" height="1" fill="#a0a0a0"/><rect x="4" y="4" width="1" height="1" fill="#a0a0a0"/><rect x="6" y="4" width="1" height="1" fill="#a0a0a0"/><rect x="7" y="4" width="3" height="1" fill="#fff"/><rect x="10" y="4" width="2" height="1" fill="#a0a0a0"/><rect x="2" y="5" width="5" height="1" fill="#a0a0a0"/><rect x="7" y="5" width="2" height="1" fill="#fff"/><rect x="9" y="5" width="9" height="1" fill="#a0a0a0"/><rect x="2" y="6" width="1" height="1" fill="#a0a0a0"/><rect x="4" y="6" width="2" height="1" fill="#a0a0a0"/><rect x="6" y="6" width="2" height="1" fill="#fff"/><rect x="8" y="6" width="2" height="1" fill="#a0a0a0"/><rect x="17" y="6" width="1" height="1" fill="#a0a0a0"/><rect x="2" y="7" width="1" height="1" fill="#a0a0a0"/><rect x="4" y="7" width="1" height="1" fill="#a0a0a0"/><rect x="5" y="7" width="2" height="1" fill="#fff"/><rect x="7" y="7" width="1" height="1" fill="#a0a0a0"/><rect x="14" y="7" width="2" height="1" fill="#808080"/><rect x="17" y="7" width="1" height="1" fill="#a0a0a0"/><rect x="2" y="8" width="1" height="1" fill="#a0a0a0"/><rect x="4" y="8" width="5" height="1" fill="#a0a0a0"/><rect x="14" y="8" width="2" height="1" fill="#808080"/><rect x="17" y="8" width="1" height="1" fill="#a0a0a0"/><rect x="2" y="9" width="1" height="1" fill="#a0a0a0"/><rect x="9" y="9" width="5" height="1" fill="#d8d8d8"/><rect x="17" y="9" width="1" height="1" fill="#a0a0a0"/><rect x="2" y="10" width="1" height="1" fill="#a0a0a0"/><rect x="4" y="10" width="6" height="1" fill="#d8d8d8"/><rect x="17" y="10" width="1" height="1" fill="#a0a0a0"/><rect x="2" y="11" width="1" height="1" fill="#a0a0a0"/><rect x="5" y="11" width="2" height="1" fill="#808080"/><rect x="11" y="11" width="6" height="1" fill="#a0a0a0"/><rect x="18" y="11" width="1" height="1" fill="#a0a0a0"/><rect x="2" y="12" width="1" height="1" fill="#a0a0a0"/><rect x="5" y="12" width="2" height="1" fill="#808080"/><rect x="11" y="12" width="1" height="1" fill="#a0a0a0"/><rect x="12" y="12" width="2" height="1" fill="#fff"/><rect x="14" y="12" width="1" height="1" fill="#a0a0a0"/><rect x="17" y="12" width="1" height="1" fill="#a0a0a0"/><rect x="2" y="13" width="1" height="1" fill="#a0a0a0"/><rect x="10" y="13" width="2" height="1" fill="#a0a0a0"/><rect x="12" y="13" width="2" height="1" fill="#fff"/><rect x="14" y="13" width="1" height="1" fill="#a0a0a0"/><rect x="17" y="13" width="1" height="1" fill="#a0a0a0"/><rect x="2" y="14" width="9" height="1" fill="#a0a0a0"/><rect x="11" y="14" width="2" height="1" fill="#fff"/><rect x="13" y="14" width="5" height="1" fill="#a0a0a0"/><rect x="7" y="15" width="2" height="1" fill="#a0a0a0"/><rect x="9" y="15" width="3" height="1" fill="#fff"/><rect x="12" y="15" width="1" height="1" fill="#a0a0a0"/><rect x="8" y="16" width="1" height="1" fill="#a0a0a0"/><rect x="9" y="16" width="3" height="1" fill="#fff"/><rect x="12" y="16" width="1" height="1" fill="#a0a0a0"/><rect x="9" y="17" width="3" height="1" fill="#a0a0a0"/></g></svg>
<svg style="position:absolute;left:255px;top:34px;" width="20" height="20" viewBox="0 0 20 20"><g shape-rendering="crispEdges"><rect x="11" y="2" width="4" height="1" fill="#000"/><rect x="10" y="3" width="1" height="1" fill="#000"/><rect x="11" y="3" width="1" height="1" fill="#fff"/><rect x="12" y="3" width="1" height="1" fill="#c0c0c0"/><rect x="13" y="3" width="1" height="1" fill="#000"/><rect x="3" y="4" width="7" height="1" fill="#000"/><rect x="10" y="4" width="1" height="1" fill="#c0c0c0"/><rect x="11" y="4" width="1" height="1" fill="#fff"/><rect x="12" y="4" width="6" height="1" fill="#000"/><rect x="3" y="5" width="1" height="1" fill="#000"/><rect x="4" y="5" width="4" height="1" fill="#606060"/><rect x="8" y="5" width="1" height="1" fill="#000"/><rect x="9" y="5" width="2" height="1" fill="#fff"/><rect x="11" y="5" width="1" height="1" fill="#000"/><rect x="12" y="5" width="5" height="1" fill="#606060"/><rect x="17" y="5" width="1" height="1" fill="#000"/><rect x="3" y="6" width="1" height="1" fill="#000"/><rect x="4" y="6" width="3" height="1" fill="#fff"/><rect x="7" y="6" width="1" height="1" fill="#000"/><rect x="8" y="6" width="1" height="1" fill="#fff"/><rect x="9" y="6" width="1" height="1" fill="#c0c0c0"/><rect x="10" y="6" width="1" height="1" fill="#000"/><rect x="11" y="6" width="6" height="1" fill="#fff"/><rect x="17" y="6" width="1" height="1" fill="#000"/><rect x="3" y="7" width="1" height="1" fill="#000"/><rect x="4" y="7" width="2" height="1" fill="#fff"/><rect x="6" y="7" width="1" height="1" fill="#000"/><rect x="7" y="7" width="1" height="1" fill="#c0c0c0"/><rect x="8" y="7" width="1" height="1" fill="#fff"/><rect x="9" y="7" width="1" height="1" fill="#000"/><rect x="10" y="7" width="7" height="1" fill="#fff"/><rect x="17" y="7" width="1" height="1" fill="#000"/><rect x="3" y="8" width="1" height="1" fill="#000"/><rect x="4" y="8" width="1" height="1" fill="#fff"/><rect x="5" y="8" width="1" height="1" fill="#000"/><rect x="6" y="8" width="2" height="1" fill="#fff"/><rect x="8" y="8" width="4" height="1" fill="#000"/><rect x="12" y="8" width="1" height="1" fill="#fff"/><rect x="13" y="8" width="3" height="1" fill="#000"/><rect x="16" y="8" width="1" height="1" fill="#fff"/><rect x="17" y="8" width="1" height="1" fill="#000"/><rect x="3" y="9" width="2" height="1" fill="#000"/><rect x="5" y="9" width="1" height="1" fill="#fff"/><rect x="6" y="9" width="1" height="1" fill="#c0c0c0"/><rect x="7" y="9" width="1" height="1" fill="#000"/><rect x="8" y="9" width="9" height="1" fill="#fff"/><rect x="17" y="9" width="1" height="1" fill="#000"/><rect x="3" y="10" width="1" height="1" fill="#000"/><rect x="4" y="10" width="1" height="1" fill="#c0c0c0"/><rect x="5" y="10" width="1" height="1" fill="#fff"/><rect x="6" y="10" width="2" height="1" fill="#000"/><rect x="8" y="10" width="1" height="1" fill="#fff"/><rect x="9" y="10" width="3" height="1" fill="#000"/><rect x="12" y="10" width="1" height="1" fill="#fff"/><rect x="13" y="10" width="3" height="1" fill="#000"/><rect x="16" y="10" width="1" height="1" fill="#fff"/><rect x="17" y="10" width="1" height="1" fill="#000"/><rect x="2" y="11" width="1" height="1" fill="#000"/><rect x="3" y="11" width="2" height="1" fill="#fff"/><rect x="5" y="11" width="1" height="1" fill="#000"/><rect x="6" y="11" width="11" height="1" fill="#fff"/><rect x="17" y="11" width="1" height="1" fill="#000"/><rect x="2" y="12" width="1" height="1" fill="#000"/><rect x="3" y="12" width="1" height="1" fill="#c0c0c0"/><rect x="4" y="12" width="4" height="1" fill="#000"/><rect x="8" y="12" width="1" height="1" fill="#fff"/><rect x="9" y="12" width="3" height="1" fill="#000"/><rect x="12" y="12" width="1" height="1" fill="#fff"/><rect x="13" y="12" width="3" height="1" fill="#000"/><rect x="16" y="12" width="1" height="1" fill="#fff"/><rect x="17" y="12" width="1" height="1" fill="#000"/><rect x="2" y="13" width="2" height="1" fill="#000"/><rect x="4" y="13" width="13" height="1" fill="#fff"/><rect x="17" y="13" width="1" height="1" fill="#000"/><rect x="3" y="14" width="1" height="1" fill="#000"/><rect x="4" y="14" width="1" height="1" fill="#fff"/><rect x="5" y="14" width="3" height="1" fill="#000"/><rect x="8" y="14" width="1" height="1" fill="#fff"/><rect x="9" y="14" width="3" height="1" fill="#000"/><rect x="12" y="14" width="1" height="1" fill="#fff"/><rect x="13" y="14" width="3" height="1" fill="#000"/><rect x="16" y="14" width="1" height="1" fill="#fff"/><rect x="17" y="14" width="1" height="1" fill="#000"/><rect x="3" y="15" width="1" height="1" fill="#000"/><rect x="4" y="15" width="13" height="1" fill="#fff"/><rect x="17" y="15" width="1" height="1" fill="#000"/><rect x="3" y="16" width="15" height="1" fill="#000"/></g></svg>
<svg style="position:absolute;left:291px;top:34px;" width="20" height="20" viewBox="0 0 20 20"><g shape-rendering="crispEdges"><rect x="7" y="5" width="1" height="1" fill="#808080"/><rect x="11" y="5" width="1" height="1" fill="#808080"/><rect x="6" y="6" width="2" height="1" fill="#808080"/><rect x="10" y="6" width="2" height="1" fill="#808080"/><rect x="5" y="7" width="1" height="1" fill="#808080"/><rect x="6" y="7" width="1" height="1" fill="#fff"/><rect x="7" y="7" width="1" height="1" fill="#808080"/><rect x="9" y="7" width="1" height="1" fill="#808080"/><rect x="10" y="7" width="1" height="1" fill="#fff"/><rect x="11" y="7" width="1" height="1" fill="#808080"/><rect x="4" y="8" width="1" height="1" fill="#808080"/><rect x="5" y="8" width="2" height="1" fill="#fff"/><rect x="7" y="8" width="2" height="1" fill="#808080"/><rect x="9" y="8" width="2" height="1" fill="#fff"/><rect x="11" y="8" width="6" height="1" fill="#808080"/><rect x="3" y="9" width="1" height="1" fill="#808080"/><rect x="4" y="9" width="3" height="1" fill="#fff"/><rect x="7" y="9" width="1" height="1" fill="#808080"/><rect x="8" y="9" width="8" height="1" fill="#fff"/><rect x="16" y="9" width="1" height="1" fill="#808080"/><rect x="3" y="10" width="1" height="1" fill="#808080"/><rect x="4" y="10" width="3" height="1" fill="#fff"/><rect x="7" y="10" width="1" height="1" fill="#808080"/><rect x="8" y="10" width="8" height="1" fill="#fff"/><rect x="16" y="10" width="1" height="1" fill="#808080"/><rect x="4" y="11" width="1" height="1" fill="#808080"/><rect x="5" y="11" width="2" height="1" fill="#fff"/><rect x="7" y="11" width="2" height="1" fill="#808080"/><rect x="9" y="11" width="2" height="1" fill="#fff"/><rect x="11" y="11" width="6" height="1" fill="#808080"/><rect x="5" y="12" width="1" height="1" fill="#808080"/><rect x="6" y="12" width="1" height="1" fill="#fff"/><rect x="7" y="12" width="1" height="1" fill="#808080"/><rect x="9" y="12" width="1" height="1" fill="#808080"/><rect x="10" y="12" width="1" height="1" fill="#fff"/><rect x="11" y="12" width="1" height="1" fill="#808080"/><rect x="6" y="13" width="2" height="1" fill="#808080"/><rect x="10" y="13" width="2" height="1" fill="#808080"/><rect x="7" y="14" width="1" height="1" fill="#808080"/><rect x="11" y="14" width="1" height="1" fill="#808080"/></g></svg>
<svg style="position:absolute;left:314px;top:34px;" width="20" height="20" viewBox="0 0 20 20"><g shape-rendering="crispEdges"><rect x="8" y="5" width="1" height="1" fill="#808080"/><rect x="7" y="6" width="2" height="1" fill="#808080"/><rect x="6" y="7" width="1" height="1" fill="#808080"/><rect x="7" y="7" width="1" height="1" fill="#fff"/><rect x="8" y="7" width="1" height="1" fill="#808080"/><rect x="5" y="8" width="1" height="1" fill="#808080"/><rect x="6" y="8" width="2" height="1" fill="#fff"/><rect x="8" y="8" width="8" height="1" fill="#808080"/><rect x="4" y="9" width="1" height="1" fill="#808080"/><rect x="5" y="9" width="10" height="1" fill="#fff"/><rect x="15" y="9" width="1" height="1" fill="#808080"/><rect x="4" y="10" width="1" height="1" fill="#808080"/><rect x="5" y="10" width="10" height="1" fill="#fff"/><rect x="15" y="10" width="1" height="1" fill="#808080"/><rect x="5" y="11" width="1" height="1" fill="#808080"/><rect x="6" y="11" width="2" height="1" fill="#fff"/><rect x="8" y="11" width="8" height="1" fill="#808080"/><rect x="6" y="12" width="1" height="1" fill="#808080"/><rect x="7" y="12" width="1" height="1" fill="#fff"/><rect x="8" y="12" width="1" height="1" fill="#808080"/><rect x="7" y="13" width="2" height="1" fill="#808080"/><rect x="8" y="14" width="1" height="1" fill="#808080"/></g></svg>
<svg style="position:absolute;left:337px;top:34px;" width="20" height="20" viewBox="0 0 20 20"><g shape-rendering="crispEdges"><rect x="9" y="5" width="2" height="1" fill="#808080"/><rect x="8" y="6" width="1" height="1" fill="#808080"/><rect x="9" y="6" width="2" height="1" fill="#fff"/><rect x="11" y="6" width="1" height="1" fill="#808080"/><rect x="7" y="7" width="1" height="1" fill="#808080"/><rect x="8" y="7" width="4" height="1" fill="#fff"/><rect x="12" y="7" width="1" height="1" fill="#808080"/><rect x="6" y="8" width="1" height="1" fill="#808080"/><rect x="7" y="8" width="6" height="1" fill="#fff"/><rect x="13" y="8" width="1" height="1" fill="#808080"/><rect x="5" y="9" width="1" height="1" fill="#808080"/><rect x="6" y="9" width="8" height="1" fill="#fff"/><rect x="14" y="9" width="1" height="1" fill="#808080"/><rect x="5" y="10" width="1" height="1" fill="#808080"/><rect x="6" y="10" width="8" height="1" fill="#fff"/><rect x="14" y="10" width="1" height="1" fill="#808080"/><rect x="6" y="11" width="1" height="1" fill="#808080"/><rect x="7" y="11" width="6" height="1" fill="#fff"/><rect x="13" y="11" width="1" height="1" fill="#808080"/><rect x="7" y="12" width="1" height="1" fill="#808080"/><rect x="8" y="12" width="4" height="1" fill="#fff"/><rect x="12" y="12" width="1" height="1" fill="#808080"/><rect x="8" y="13" width="1" height="1" fill="#808080"/><rect x="9" y="13" width="2" height="1" fill="#fff"/><rect x="11" y="13" width="1" height="1" fill="#808080"/><rect x="9" y="14" width="2" height="1" fill="#808080"/></g></svg>
<svg style="position:absolute;left:360px;top:34px;" width="20" height="20" viewBox="0 0 20 20"><g shape-rendering="crispEdges"><rect x="11" y="5" width="1" height="1" fill="#808080"/><rect x="11" y="6" width="2" height="1" fill="#808080"/><rect x="11" y="7" width="1" height="1" fill="#808080"/><rect x="12" y="7" width="1" height="1" fill="#fff"/><rect x="13" y="7" width="1" height="1" fill="#808080"/><rect x="4" y="8" width="8" height="1" fill="#808080"/><rect x="12" y="8" width="2" height="1" fill="#fff"/><rect x="14" y="8" width="1" height="1" fill="#808080"/><rect x="4" y="9" width="1" height="1" fill="#808080"/><rect x="5" y="9" width="10" height="1" fill="#fff"/><rect x="15" y="9" width="1" height="1" fill="#808080"/><rect x="4" y="10" width="1" height="1" fill="#808080"/><rect x="5" y="10" width="10" height="1" fill="#fff"/><rect x="15" y="10" width="1" height="1" fill="#808080"/><rect x="4" y="11" width="8" height="1" fill="#808080"/><rect x="12" y="11" width="2" height="1" fill="#fff"/><rect x="14" y="11" width="1" height="1" fill="#808080"/><rect x="11" y="12" width="1" height="1" fill="#808080"/><rect x="12" y="12" width="1" height="1" fill="#fff"/><rect x="13" y="12" width="1" height="1" fill="#808080"/><rect x="11" y="13" width="2" height="1" fill="#808080"/><rect x="11" y="14" width="1" height="1" fill="#808080"/></g></svg>
<svg style="position:absolute;left:383px;top:34px;" width="20" height="20" viewBox="0 0 20 20"><g shape-rendering="crispEdges"><rect x="8" y="5" width="1" height="1" fill="#808080"/><rect x="12" y="5" width="1" height="1" fill="#808080"/><rect x="8" y="6" width="2" height="1" fill="#808080"/><rect x="12" y="6" width="2" height="1" fill="#808080"/><rect x="8" y="7" width="1" height="1" fill="#808080"/><rect x="9" y="7" width="1" height="1" fill="#fff"/><rect x="10" y="7" width="1" height="1" fill="#808080"/><rect x="12" y="7" width="1" height="1" fill="#808080"/><rect x="13" y="7" width="1" height="1" fill="#fff"/><rect x="14" y="7" width="1" height="1" fill="#808080"/><rect x="3" y="8" width="6" height="1" fill="#808080"/><rect x="9" y="8" width="2" height="1" fill="#fff"/><rect x="11" y="8" width="2" height="1" fill="#808080"/><rect x="13" y="8" width="2" height="1" fill="#fff"/><rect x="15" y="8" width="1" height="1" fill="#808080"/><rect x="3" y="9" width="1" height="1" fill="#808080"/><rect x="4" y="9" width="8" height="1" fill="#fff"/><rect x="12" y="9" width="1" height="1" fill="#808080"/><rect x="13" y="9" width="3" height="1" fill="#fff"/><rect x="16" y="9" width="1" height="1" fill="#808080"/><rect x="3" y="10" width="1" height="1" fill="#808080"/><rect x="4" y="10" width="8" height="1" fill="#fff"/><rect x="12" y="10" width="1" height="1" fill="#808080"/><rect x="13" y="10" width="3" height="1" fill="#fff"/><rect x="16" y="10" width="1" height="1" fill="#808080"/><rect x="3" y="11" width="6" height="1" fill="#808080"/><rect x="9" y="11" width="2" height="1" fill="#fff"/><rect x="11" y="11" width="2" height="1" fill="#808080"/><rect x="13" y="11" width="2" height="1" fill="#fff"/><rect x="15" y="11" width="1" height="1" fill="#808080"/><rect x="8" y="12" width="1" height="1" fill="#808080"/><rect x="9" y="12" width="1" height="1" fill="#fff"/><rect x="10" y="12" width="1" height="1" fill="#808080"/><rect x="12" y="12" width="1" height="1" fill="#808080"/><rect x="13" y="12" width="1" height="1" fill="#fff"/><rect x="14" y="12" width="1" height="1" fill="#808080"/><rect x="8" y="13" width="2" height="1" fill="#808080"/><rect x="12" y="13" width="2" height="1" fill="#808080"/><rect x="8" y="14" width="1" height="1" fill="#808080"/><rect x="12" y="14" width="1" height="1" fill="#808080"/></g></svg>
<svg style="position:absolute;left:704px;top:37px;" width="13" height="14" viewBox="0 0 13 14"><g shape-rendering="crispEdges"><rect x="1" y="0" width="10" height="1" fill="#606060"/><rect x="0" y="1" width="1" height="1" fill="#606060"/><rect x="1" y="1" width="10" height="1" fill="#f4f4f4"/><rect x="11" y="1" width="1" height="1" fill="#000"/><rect x="0" y="2" width="1" height="1" fill="#606060"/><rect x="1" y="2" width="10" height="1" fill="#f4f4f4"/><rect x="11" y="2" width="1" height="1" fill="#000"/><rect x="0" y="3" width="1" height="1" fill="#606060"/><rect x="1" y="3" width="3" height="1" fill="#f4f4f4"/><rect x="4" y="3" width="4" height="1" fill="#000"/><rect x="8" y="3" width="3" height="1" fill="#f4f4f4"/><rect x="11" y="3" width="1" height="1" fill="#000"/><rect x="0" y="4" width="1" height="1" fill="#606060"/><rect x="1" y="4" width="2" height="1" fill="#f4f4f4"/><rect x="3" y="4" width="2" height="1" fill="#000"/><rect x="5" y="4" width="2" height="1" fill="#f4f4f4"/><rect x="7" y="4" width="2" height="1" fill="#000"/><rect x="9" y="4" width="2" height="1" fill="#f4f4f4"/><rect x="11" y="4" width="1" height="1" fill="#000"/><rect x="0" y="5" width="1" height="1" fill="#606060"/><rect x="1" y="5" width="6" height="1" fill="#f4f4f4"/><rect x="7" y="5" width="2" height="1" fill="#000"/><rect x="9" y="5" width="2" height="1" fill="#f4f4f4"/><rect x="11" y="5" width="1" height="1" fill="#000"/><rect x="0" y="6" width="1" height="1" fill="#606060"/><rect x="1" y="6" width="5" height="1" fill="#f4f4f4"/><rect x="6" y="6" width="2" height="1" fill="#000"/><rect x="8" y="6" width="3" height="1" fill="#f4f4f4"/><rect x="11" y="6" width="1" height="1" fill="#000"/><rect x="0" y="7" width="1" height="1" fill="#606060"/><rect x="1" y="7" width="4" height="1" fill="#f4f4f4"/><rect x="5" y="7" width="2" height="1" fill="#000"/><rect x="7" y="7" width="4" height="1" fill="#f4f4f4"/><rect x="11" y="7" width="1" height="1" fill="#000"/><rect x="0" y="8" width="1" height="1" fill="#606060"/><rect x="1" y="8" width="4" height="1" fill="#f4f4f4"/><rect x="5" y="8" width="2" height="1" fill="#000"/><rect x="7" y="8" width="4" height="1" fill="#f4f4f4"/><rect x="11" y="8" width="1" height="1" fill="#000"/><rect x="0" y="9" width="1" height="1" fill="#606060"/><rect x="1" y="9" width="10" height="1" fill="#f4f4f4"/><rect x="11" y="9" width="1" height="1" fill="#000"/><rect x="0" y="10" width="1" height="1" fill="#606060"/><rect x="1" y="10" width="4" height="1" fill="#f4f4f4"/><rect x="5" y="10" width="2" height="1" fill="#000"/><rect x="7" y="10" width="4" height="1" fill="#f4f4f4"/><rect x="11" y="10" width="1" height="1" fill="#000"/><rect x="0" y="11" width="1" height="1" fill="#606060"/><rect x="1" y="11" width="4" height="1" fill="#f4f4f4"/><rect x="5" y="11" width="2" height="1" fill="#000"/><rect x="7" y="11" width="4" height="1" fill="#f4f4f4"/><rect x="11" y="11" width="1" height="1" fill="#000"/><rect x="0" y="12" width="1" height="1" fill="#606060"/><rect x="1" y="12" width="10" height="1" fill="#f4f4f4"/><rect x="11" y="12" width="1" height="1" fill="#000"/><rect x="1" y="13" width="10" height="1" fill="#000"/></g></svg>
<div style="position:absolute;left:1px;top:63px;width:722px;height:1px;background:#a0a0a0;"></div>
<div style="position:absolute;left:1px;top:63px;width:1px;height:105px;background:#a0a0a0;"></div>
<div style="position:absolute;left:1px;top:167px;width:722px;height:1px;background:#a0a0a0;"></div>
<div style="position:absolute;left:722px;top:63px;width:1px;height:105px;background:#a0a0a0;"></div>
<div style="position:absolute;left:2px;top:64px;width:722px;height:1px;background:#ffffff;"></div>
<div style="position:absolute;left:2px;top:64px;width:1px;height:105px;background:#ffffff;"></div>
<div style="position:absolute;left:2px;top:168px;width:722px;height:1px;background:#ffffff;"></div>
<div style="position:absolute;left:723px;top:64px;width:1px;height:105px;background:#ffffff;"></div>
<div style="position:absolute;left:8px;top:58px;width:104px;height:9px;background:#f0f0f0;"></div>
<div style="position:absolute;left:9.11px;top:55px;font:12px/20px 'Liberation Sans';white-space:pre;will-change:transform;transform:scaleX(0.8919);transform-origin:0 0;color:#000;">Short AVI Information</div>
<div style="position:absolute;left:45.15px;top:71px;font:12px/20px 'Liberation Sans';white-space:pre;will-change:transform;transform:scaleX(0.8491);transform-origin:0 0;color:#000;">File name:</div>
<div style="position:absolute;left:49.11px;top:95px;font:12px/20px 'Liberation Sans';white-space:pre;will-change:transform;transform:scaleX(0.8913);transform-origin:0 0;color:#000;">Duration:</div>
<div style="position:absolute;left:29.00px;top:119px;font:12px/20px 'Liberation Sans';white-space:pre;will-change:transform;transform:scaleX(0.8611);transform-origin:0 0;color:#000;">Video stream:</div>
<div style="position:absolute;left:29.00px;top:143px;font:12px/20px 'Liberation Sans';white-space:pre;will-change:transform;transform:scaleX(0.8611);transform-origin:0 0;color:#000;">Audio stream:</div>
<div style="position:absolute;left:490.14px;top:71px;font:12px/20px 'Liberation Sans';white-space:pre;will-change:transform;transform:scaleX(0.8636);transform-origin:0 0;color:#000;">File size:</div>
<div style="position:absolute;left:467.00px;top:95px;font:12px/20px 'Liberation Sans';white-space:pre;will-change:transform;transform:scaleX(0.8857);transform-origin:0 0;color:#000;">Video quality:</div>
<div style="position:absolute;left:638.13px;top:143px;font:12px/20px 'Liberation Sans';white-space:pre;will-change:transform;transform:scaleX(0.8718);transform-origin:0 0;color:#000;">Stream:</div>
<div style="position:absolute;left:94px;top:71px;width:318px;height:20px;background:#ffffe1;"></div>
<div style="position:absolute;left:94px;top:71px;width:318px;height:1px;background:#a0a0a0;"></div>
<div style="position:absolute;left:94px;top:71px;width:1px;height:20px;background:#a0a0a0;"></div>
<div style="position:absolute;left:94px;top:90px;width:318px;height:1px;background:#ffffff;"></div>
<div style="position:absolute;left:411px;top:71px;width:1px;height:20px;background:#ffffff;"></div>
<div style="position:absolute;left:95px;top:72px;width:316px;height:1px;background:#696969;"></div>
<div style="position:absolute;left:95px;top:72px;width:1px;height:18px;background:#696969;"></div>
<div style="position:absolute;left:95px;top:89px;width:316px;height:1px;background:#e3e3e3;"></div>
<div style="position:absolute;left:410px;top:72px;width:1px;height:18px;background:#e3e3e3;"></div>
<div style="position:absolute;left:95px;top:72px;width:1px;height:1px;background:#696969;"></div>
<div style="position:absolute;left:94px;top:95px;width:230px;height:20px;background:#ffffe1;"></div>
<div style="position:absolute;left:94px;top:95px;width:230px;height:1px;background:#a0a0a0;"></div>
<div style="position:absolute;left:94px;top:95px;width:1px;height:20px;background:#a0a0a0;"></div>
<div style="position:absolute;left:94px;top:114px;width:230px;height:1px;background:#ffffff;"></div>
<div style="position:absolute;left:323px;top:95px;width:1px;height:20px;background:#ffffff;"></div>
<div style="position:absolute;left:95px;top:96px;width:228px;height:1px;background:#696969;"></div>
<div style="position:absolute;left:95px;top:96px;width:1px;height:18px;background:#696969;"></div>
<div style="position:absolute;left:95px;top:113px;width:228px;height:1px;background:#e3e3e3;"></div>
<div style="position:absolute;left:322px;top:96px;width:1px;height:18px;background:#e3e3e3;"></div>
<div style="position:absolute;left:95px;top:96px;width:1px;height:1px;background:#696969;"></div>
<div style="position:absolute;left:94px;top:119px;width:625px;height:20px;background:#ffffe1;"></div>
<div style="position:absolute;left:94px;top:119px;width:625px;height:1px;background:#a0a0a0;"></div>
<div style="position:absolute;left:94px;top:119px;width:1px;height:20px;background:#a0a0a0;"></div>
<div style="position:absolute;left:94px;top:138px;width:625px;height:1px;background:#ffffff;"></div>
<div style="position:absolute;left:718px;top:119px;width:1px;height:20px;background:#ffffff;"></div>
<div style="position:absolute;left:95px;top:120px;width:623px;height:1px;background:#696969;"></div>
<div style="position:absolute;left:95px;top:120px;width:1px;height:18px;background:#696969;"></div>
<div style="position:absolute;left:95px;top:137px;width:623px;height:1px;background:#e3e3e3;"></div>
<div style="position:absolute;left:717px;top:120px;width:1px;height:18px;background:#e3e3e3;"></div>
<div style="position:absolute;left:95px;top:120px;width:1px;height:1px;background:#696969;"></div>
<div style="position:absolute;left:94px;top:143px;width:523px;height:20px;background:#ffffe1;"></div>
<div style="position:absolute;left:94px;top:143px;width:523px;height:1px;background:#a0a0a0;"></div>
<div style="position:absolute;left:94px;top:143px;width:1px;height:20px;background:#a0a0a0;"></div>
<div style="position:absolute;left:94px;top:162px;width:523px;height:1px;background:#ffffff;"></div>
<div style="position:absolute;left:616px;top:143px;width:1px;height:20px;background:#ffffff;"></div>
<div style="position:absolute;left:95px;top:144px;width:521px;height:1px;background:#696969;"></div>
<div style="position:absolute;left:95px;top:144px;width:1px;height:18px;background:#696969;"></div>
<div style="position:absolute;left:95px;top:161px;width:521px;height:1px;background:#e3e3e3;"></div>
<div style="position:absolute;left:615px;top:144px;width:1px;height:18px;background:#e3e3e3;"></div>
<div style="position:absolute;left:95px;top:144px;width:1px;height:1px;background:#696969;"></div>
<div style="position:absolute;left:532px;top:71px;width:187px;height:20px;background:#ffffe1;"></div>
<div style="position:absolute;left:532px;top:71px;width:187px;height:1px;background:#a0a0a0;"></div>
<div style="position:absolute;left:532px;top:71px;width:1px;height:20px;background:#a0a0a0;"></div>
<div style="position:absolute;left:532px;top:90px;width:187px;height:1px;background:#ffffff;"></div>
<div style="position:absolute;left:718px;top:71px;width:1px;height:20px;background:#ffffff;"></div>
<div style="position:absolute;left:533px;top:72px;width:185px;height:1px;background:#696969;"></div>
<div style="position:absolute;left:533px;top:72px;width:1px;height:18px;background:#696969;"></div>
<div style="position:absolute;left:533px;top:89px;width:185px;height:1px;background:#e3e3e3;"></div>
<div style="position:absolute;left:717px;top:72px;width:1px;height:18px;background:#e3e3e3;"></div>
<div style="position:absolute;left:533px;top:72px;width:1px;height:1px;background:#696969;"></div>
<div style="position:absolute;left:532px;top:95px;width:161px;height:20px;background:#ffffe1;"></div>
<div style="position:absolute;left:532px;top:95px;width:161px;height:1px;background:#a0a0a0;"></div>
<div style="position:absolute;left:532px;top:95px;width:1px;height:20px;background:#a0a0a0;"></div>
<div style="position:absolute;left:532px;top:114px;width:161px;height:1px;background:#ffffff;"></div>
<div style="position:absolute;left:692px;top:95px;width:1px;height:20px;background:#ffffff;"></div>
<div style="position:absolute;left:533px;top:96px;width:159px;height:1px;background:#696969;"></div>
<div style="position:absolute;left:533px;top:96px;width:1px;height:18px;background:#696969;"></div>
<div style="position:absolute;left:533px;top:113px;width:159px;height:1px;background:#e3e3e3;"></div>
<div style="position:absolute;left:691px;top:96px;width:1px;height:18px;background:#e3e3e3;"></div>
<div style="position:absolute;left:533px;top:96px;width:1px;height:1px;background:#696969;"></div>
<div style="position:absolute;left:97.08px;top:71px;font:12px/20px 'Liberation Sans';white-space:pre;will-change:transform;transform:scaleX(0.9167);transform-origin:0 0;color:#000;">(1/1) calibrate2.avi</div>
<div style="position:absolute;left:98.00px;top:95px;font:12px/20px 'Liberation Sans';white-space:pre;will-change:transform;transform:scaleX(0.8791);transform-origin:0 0;color:#000;">0 h 0 min 33.37 s</div>
<div style="position:absolute;left:96.10px;top:119px;font:12px/20px 'Liberation Sans';white-space:pre;will-change:transform;transform:scaleX(0.8960);transform-origin:0 0;color:#000;">Motion JPEG including Huffman Tables 'MJPG' &lt;0x47504A4D&gt;, 640x480, 24 bit, 1000 frm, 29.9700 frm/s, 6156.302 kbit/s</div>
<div style="position:absolute;left:97.10px;top:143px;font:12px/20px 'Liberation Sans';white-space:pre;will-change:transform;transform:scaleX(0.9011);transform-origin:0 0;color:#000;">No Audio Present</div>
<div style="position:absolute;left:535.08px;top:71px;font:12px/20px 'Liberation Sans';white-space:pre;will-change:transform;transform:scaleX(0.9184);transform-origin:0 0;color:#000;">24.52 MB</div>
<div style="position:absolute;left:535.12px;top:95px;font:12px/20px 'Liberation Sans';white-space:pre;will-change:transform;transform:scaleX(0.8831);transform-origin:0 0;color:#000;">205930 eff.bits per frame 3x4</div>
<div style="position:absolute;left:328px;top:95px;width:109px;height:21px;background:#f0f0f0;"></div>
<div style="position:absolute;left:328px;top:95px;width:109px;height:1px;background:#a0a0a0;"></div>
<div style="position:absolute;left:328px;top:95px;width:1px;height:21px;background:#a0a0a0;"></div>
<div style="position:absolute;left:328px;top:115px;width:109px;height:1px;background:#ffffff;"></div>
<div style="position:absolute;left:436px;top:95px;width:1px;height:21px;background:#ffffff;"></div>
<div style="position:absolute;left:329px;top:96px;width:107px;height:1px;background:#696969;"></div>
<div style="position:absolute;left:329px;top:96px;width:1px;height:19px;background:#696969;"></div>
<div style="position:absolute;left:329px;top:114px;width:107px;height:1px;background:#e3e3e3;"></div>
<div style="position:absolute;left:435px;top:96px;width:1px;height:19px;background:#e3e3e3;"></div>
<div style="position:absolute;left:329px;top:96px;width:1px;height:1px;background:#696969;"></div>
<div style="position:absolute;left:420px;top:97px;width:16px;height:17px;background:#f0f0f0;"></div>
<div style="position:absolute;left:420px;top:97px;width:16px;height:1px;background:#ffffff;"></div>
<div style="position:absolute;left:420px;top:97px;width:1px;height:17px;background:#ffffff;"></div>
<div style="position:absolute;left:420px;top:113px;width:16px;height:1px;background:#696969;"></div>
<div style="position:absolute;left:435px;top:97px;width:1px;height:17px;background:#696969;"></div>
<div style="position:absolute;left:421px;top:112px;width:14px;height:1px;background:#a0a0a0;"></div>
<div style="position:absolute;left:434px;top:98px;width:1px;height:15px;background:#a0a0a0;"></div>
<svg style="position:absolute;left:424px;top:104px;" width="7" height="4" viewBox="0 0 7 4"><g shape-rendering="crispEdges"><rect x="0" y="0" width="7" height="1" fill="#000"/><rect x="1" y="1" width="5" height="1" fill="#000"/><rect x="2" y="2" width="3" height="1" fill="#000"/><rect x="3" y="3" width="1" height="1" fill="#000"/></g></svg>
<div style="position:absolute;left:332.08px;top:96px;font:12px/20px 'Liberation Sans';white-space:pre;will-change:transform;transform:scaleX(0.9189);transform-origin:0 0;color:#000;">Header</div>
<div style="position:absolute;left:675px;top:143px;width:44px;height:21px;background:#f0f0f0;"></div>
<div style="position:absolute;left:675px;top:143px;width:44px;height:1px;background:#a0a0a0;"></div>
<div style="position:absolute;left:675px;top:143px;width:1px;height:21px;background:#a0a0a0;"></div>
<div style="position:absolute;left:675px;top:163px;width:44px;height:1px;background:#ffffff;"></div>
<div style="position:absolute;left:718px;top:143px;width:1px;height:21px;background:#ffffff;"></div>
<div style="position:absolute;left:676px;top:144px;width:42px;height:1px;background:#696969;"></div>
<div style="position:absolute;left:676px;top:144px;width:1px;height:19px;background:#696969;"></div>
<div style="position:absolute;left:676px;top:162px;width:42px;height:1px;background:#e3e3e3;"></div>
<div style="position:absolute;left:717px;top:144px;width:1px;height:19px;background:#e3e3e3;"></div>
<div style="position:absolute;left:676px;top:144px;width:1px;height:1px;background:#696969;"></div>
<div style="position:absolute;left:701px;top:145px;width:16px;height:17px;background:#f0f0f0;"></div>
<div style="position:absolute;left:701px;top:145px;width:16px;height:1px;background:#ffffff;"></div>
<div style="position:absolute;left:701px;top:145px;width:1px;height:17px;background:#ffffff;"></div>
<div style="position:absolute;left:701px;top:161px;width:16px;height:1px;background:#696969;"></div>
<div style="position:absolute;left:716px;top:145px;width:1px;height:17px;background:#696969;"></div>
<div style="position:absolute;left:702px;top:160px;width:14px;height:1px;background:#a0a0a0;"></div>
<div style="position:absolute;left:715px;top:146px;width:1px;height:15px;background:#a0a0a0;"></div>
<svg style="position:absolute;left:705px;top:152px;" width="7" height="4" viewBox="0 0 7 4"><g shape-rendering="crispEdges"><rect x="0" y="0" width="7" height="1" fill="#a0a0a0"/><rect x="1" y="1" width="5" height="1" fill="#a0a0a0"/><rect x="2" y="2" width="3" height="1" fill="#a0a0a0"/><rect x="3" y="3" width="1" height="1" fill="#a0a0a0"/></g></svg>
<div style="position:absolute;left:415px;top:71px;width:22px;height:22px;background:#f0f0f0;"></div>
<div style="position:absolute;left:415px;top:71px;width:22px;height:1px;background:#ffffff;"></div>
<div style="position:absolute;left:415px;top:71px;width:1px;height:22px;background:#ffffff;"></div>
<div style="position:absolute;left:415px;top:92px;width:22px;height:1px;background:#696969;"></div>
<div style="position:absolute;left:436px;top:71px;width:1px;height:22px;background:#696969;"></div>
<div style="position:absolute;left:416px;top:91px;width:20px;height:1px;background:#a0a0a0;"></div>
<div style="position:absolute;left:435px;top:72px;width:1px;height:20px;background:#a0a0a0;"></div>
<svg style="position:absolute;left:418px;top:75px;" width="17" height="17" viewBox="0 0 17 17"><g shape-rendering="crispEdges"><rect x="0" y="0" width="10" height="1" fill="#000"/><rect x="0" y="1" width="1" height="1" fill="#000"/><rect x="1" y="1" width="8" height="1" fill="#2040ff"/><rect x="9" y="1" width="1" height="1" fill="#000"/><rect x="0" y="2" width="10" height="1" fill="#000"/><rect x="0" y="3" width="1" height="1" fill="#000"/><rect x="1" y="3" width="8" height="1" fill="#fff"/><rect x="9" y="3" width="1" height="1" fill="#000"/><rect x="0" y="4" width="1" height="1" fill="#000"/><rect x="1" y="4" width="1" height="1" fill="#fff"/><rect x="2" y="4" width="1" height="1" fill="#b00000"/><rect x="3" y="4" width="2" height="1" fill="#fff"/><rect x="5" y="4" width="3" height="1" fill="#b00000"/><rect x="8" y="4" width="1" height="1" fill="#fff"/><rect x="9" y="4" width="1" height="1" fill="#000"/><rect x="0" y="5" width="1" height="1" fill="#000"/><rect x="1" y="5" width="2" height="1" fill="#b00000"/><rect x="3" y="5" width="4" height="1" fill="#fff"/><rect x="7" y="5" width="1" height="1" fill="#b00000"/><rect x="8" y="5" width="1" height="1" fill="#fff"/><rect x="9" y="5" width="1" height="1" fill="#000"/><rect x="0" y="6" width="1" height="1" fill="#000"/><rect x="1" y="6" width="1" height="1" fill="#fff"/><rect x="2" y="6" width="1" height="1" fill="#b00000"/><rect x="3" y="6" width="2" height="1" fill="#fff"/><rect x="5" y="6" width="3" height="1" fill="#b00000"/><rect x="8" y="6" width="1" height="1" fill="#fff"/><rect x="9" y="6" width="1" height="1" fill="#000"/><rect x="0" y="7" width="1" height="1" fill="#000"/><rect x="1" y="7" width="1" height="1" fill="#fff"/><rect x="2" y="7" width="1" height="1" fill="#b00000"/><rect x="3" y="7" width="2" height="1" fill="#fff"/><rect x="5" y="7" width="1" height="1" fill="#b00000"/><rect x="6" y="7" width="3" height="1" fill="#fff"/><rect x="9" y="7" width="1" height="1" fill="#000"/><rect x="0" y="8" width="1" height="1" fill="#000"/><rect x="1" y="8" width="1" height="1" fill="#fff"/><rect x="2" y="8" width="1" height="1" fill="#b00000"/><rect x="3" y="8" width="2" height="1" fill="#fff"/><rect x="5" y="8" width="3" height="1" fill="#b00000"/><rect x="8" y="8" width="1" height="1" fill="#fff"/><rect x="9" y="8" width="1" height="1" fill="#000"/><rect x="0" y="9" width="10" height="1" fill="#000"/></g><circle cx="11" cy="11" r="4.6" fill="#d8d8a8" stroke="#000" stroke-width="1.1"/>
<path d="M10.5 8 V11.5 H13" stroke="#ff0000" fill="none" stroke-width="1.3"/></svg>
<div style="position:absolute;left:697px;top:95px;width:22px;height:22px;background:#f0f0f0;"></div>
<div style="position:absolute;left:697px;top:95px;width:22px;height:1px;background:#ffffff;"></div>
<div style="position:absolute;left:697px;top:95px;width:1px;height:22px;background:#ffffff;"></div>
<div style="position:absolute;left:697px;top:116px;width:22px;height:1px;background:#696969;"></div>
<div style="position:absolute;left:718px;top:95px;width:1px;height:22px;background:#696969;"></div>
<div style="position:absolute;left:698px;top:115px;width:20px;height:1px;background:#a0a0a0;"></div>
<div style="position:absolute;left:717px;top:96px;width:1px;height:20px;background:#a0a0a0;"></div>
<svg style="position:absolute;left:697px;top:95px;" width="22" height="22" viewBox="0 0 22 22"><g shape-rendering="crispEdges"><rect x="6" y="3" width="9" height="1" fill="#000"/><rect x="5" y="4" width="1" height="1" fill="#000"/><rect x="6" y="4" width="9" height="1" fill="#fff"/><rect x="15" y="4" width="2" height="1" fill="#000"/><rect x="5" y="5" width="10" height="1" fill="#000"/><rect x="15" y="5" width="2" height="1" fill="#a0a0a0"/><rect x="17" y="5" width="1" height="1" fill="#000"/><rect x="5" y="6" width="1" height="1" fill="#000"/><rect x="13" y="6" width="1" height="1" fill="#000"/><rect x="14" y="6" width="1" height="1" fill="#fff"/><rect x="15" y="6" width="2" height="1" fill="#a0a0a0"/><rect x="17" y="6" width="1" height="1" fill="#000"/><rect x="5" y="7" width="1" height="1" fill="#000"/><rect x="13" y="7" width="1" height="1" fill="#000"/><rect x="14" y="7" width="1" height="1" fill="#fff"/><rect x="15" y="7" width="2" height="1" fill="#a0a0a0"/><rect x="17" y="7" width="1" height="1" fill="#000"/><rect x="5" y="8" width="1" height="1" fill="#000"/><rect x="13" y="8" width="1" height="1" fill="#000"/><rect x="14" y="8" width="1" height="1" fill="#fff"/><rect x="15" y="8" width="2" height="1" fill="#a0a0a0"/><rect x="17" y="8" width="1" height="1" fill="#000"/><rect x="5" y="9" width="1" height="1" fill="#000"/><rect x="13" y="9" width="1" height="1" fill="#000"/><rect x="14" y="9" width="1" height="1" fill="#fff"/><rect x="15" y="9" width="2" height="1" fill="#a0a0a0"/><rect x="17" y="9" width="1" height="1" fill="#000"/><rect x="5" y="10" width="1" height="1" fill="#000"/><rect x="13" y="10" width="1" height="1" fill="#000"/><rect x="14" y="10" width="1" height="1" fill="#fff"/><rect x="15" y="10" width="2" height="1" fill="#a0a0a0"/><rect x="17" y="10" width="1" height="1" fill="#000"/><rect x="5" y="11" width="1" height="1" fill="#000"/><rect x="13" y="11" width="1" height="1" fill="#000"/><rect x="14" y="11" width="1" height="1" fill="#fff"/><rect x="15" y="11" width="2" height="1" fill="#a0a0a0"/><rect x="17" y="11" width="1" height="1" fill="#000"/><rect x="5" y="12" width="1" height="1" fill="#000"/><rect x="13" y="12" width="1" height="1" fill="#000"/><rect x="14" y="12" width="1" height="1" fill="#fff"/><rect x="15" y="12" width="2" height="1" fill="#a0a0a0"/><rect x="17" y="12" width="1" height="1" fill="#000"/><rect x="5" y="13" width="1" height="1" fill="#000"/><rect x="13" y="13" width="1" height="1" fill="#000"/><rect x="14" y="13" width="1" height="1" fill="#fff"/><rect x="15" y="13" width="2" height="1" fill="#a0a0a0"/><rect x="17" y="13" width="1" height="1" fill="#000"/><rect x="5" y="14" width="10" height="1" fill="#000"/><rect x="15" y="14" width="2" height="1" fill="#a0a0a0"/><rect x="17" y="14" width="1" height="1" fill="#000"/><rect x="6" y="15" width="12" height="1" fill="#000"/><rect x="10" y="16" width="2" height="1" fill="#404040"/><rect x="7" y="17" width="8" height="1" fill="#000"/></g><rect x="6" y="6" width="7" height="8" fill="#fff" shape-rendering="crispEdges"/>
<circle cx="7" cy="10" r="3.7" fill="#b8c0f0" stroke="#404040" stroke-width="1"/>
<rect x="5" y="8" width="1.5" height="1.5" fill="#ffe860"/><rect x="8" y="8" width="1.5" height="1.5" fill="#ff80e0"/>
<rect x="5" y="11" width="1.5" height="1.5" fill="#ff80e0"/><rect x="8" y="11" width="1.5" height="1.5" fill="#ffe860"/>
<circle cx="7" cy="10" r="1" fill="#202020"/></svg>
<div style="position:absolute;left:80px;top:172px;width:1px;height:18px;background:#a0a0a0;"></div>
<div style="position:absolute;left:81px;top:172px;width:1px;height:18px;background:#ffffff;"></div>
<div style="position:absolute;left:143px;top:172px;width:1px;height:18px;background:#a0a0a0;"></div>
<div style="position:absolute;left:144px;top:172px;width:1px;height:18px;background:#ffffff;"></div>
<div style="position:absolute;left:207px;top:172px;width:1px;height:18px;background:#a0a0a0;"></div>
<div style="position:absolute;left:208px;top:172px;width:1px;height:18px;background:#ffffff;"></div>
<div style="position:absolute;left:515px;top:172px;width:1px;height:18px;background:#a0a0a0;"></div>
<div style="position:absolute;left:516px;top:172px;width:1px;height:18px;background:#ffffff;"></div>
<div style="position:absolute;left:448px;top:171px;width:1px;height:20px;background:#a0a0a0;"></div>
<div style="position:absolute;left:449px;top:171px;width:1px;height:20px;background:#ffffff;"></div>
<div style="position:absolute;left:1px;top:190px;width:723px;height:1px;background:#ffffff;"></div>
<div style="position:absolute;left:1px;top:672px;width:723px;height:1px;background:#a0a0a0;"></div>
<div style="position:absolute;left:1px;top:673px;width:723px;height:1px;background:#696969;"></div>
<div style="position:absolute;left:722px;top:190px;width:1px;height:484px;background:#a0a0a0;"></div>
<div style="position:absolute;left:723px;top:190px;width:1px;height:484px;background:#696969;"></div>
<div style="position:absolute;left:1px;top:674px;width:723px;height:1px;background:#ffffff;"></div>
<div style="position:absolute;left:6px;top:194px;width:25px;height:1px;background:#ffffff;"></div>
<div style="position:absolute;left:6px;top:194px;width:1px;height:476px;background:#ffffff;"></div>
<div style="position:absolute;left:5px;top:669px;width:27px;height:1px;background:#a0a0a0;"></div>
<div style="position:absolute;left:1px;top:190px;width:1px;height:484px;background:#ffffff;"></div>
<div style="position:absolute;left:7px;top:242px;width:24px;height:1px;background:#a0a0a0;"></div>
<div style="position:absolute;left:7px;top:243px;width:24px;height:1px;background:#ffffff;"></div>
<svg style="position:absolute;left:13px;top:202px;" width="10" height="10" viewBox="0 0 10 10"><g shape-rendering="crispEdges"><rect x="3" y="0" width="3" height="1" fill="#404040"/><rect x="6" y="0" width="1" height="1" fill="#000"/><rect x="3" y="1" width="1" height="1" fill="#404040"/><rect x="4" y="1" width="2" height="1" fill="#c0c0c0"/><rect x="6" y="1" width="1" height="1" fill="#000"/><rect x="3" y="2" width="1" height="1" fill="#404040"/><rect x="4" y="2" width="2" height="1" fill="#c0c0c0"/><rect x="6" y="2" width="1" height="1" fill="#000"/><rect x="0" y="3" width="4" height="1" fill="#404040"/><rect x="4" y="3" width="2" height="1" fill="#c0c0c0"/><rect x="6" y="3" width="3" height="1" fill="#404040"/><rect x="9" y="3" width="1" height="1" fill="#000"/><rect x="0" y="4" width="1" height="1" fill="#404040"/><rect x="1" y="4" width="8" height="1" fill="#c0c0c0"/><rect x="9" y="4" width="1" height="1" fill="#000"/><rect x="0" y="5" width="1" height="1" fill="#404040"/><rect x="1" y="5" width="8" height="1" fill="#c0c0c0"/><rect x="9" y="5" width="1" height="1" fill="#000"/><rect x="0" y="6" width="1" height="1" fill="#404040"/><rect x="1" y="6" width="3" height="1" fill="#000"/><rect x="4" y="6" width="2" height="1" fill="#c0c0c0"/><rect x="6" y="6" width="4" height="1" fill="#000"/><rect x="3" y="7" width="1" height="1" fill="#404040"/><rect x="4" y="7" width="2" height="1" fill="#c0c0c0"/><rect x="6" y="7" width="1" height="1" fill="#000"/><rect x="3" y="8" width="1" height="1" fill="#404040"/><rect x="4" y="8" width="2" height="1" fill="#c0c0c0"/><rect x="6" y="8" width="1" height="1" fill="#000"/><rect x="3" y="9" width="4" height="1" fill="#000"/></g></svg>
<svg style="position:absolute;left:13px;top:227px;" width="10" height="4" viewBox="0 0 10 4"><g shape-rendering="crispEdges"><rect x="0" y="0" width="9" height="1" fill="#404040"/><rect x="9" y="0" width="1" height="1" fill="#000"/><rect x="0" y="1" width="1" height="1" fill="#404040"/><rect x="1" y="1" width="8" height="1" fill="#b8b8b8"/><rect x="9" y="1" width="1" height="1" fill="#000"/><rect x="0" y="2" width="1" height="1" fill="#404040"/><rect x="1" y="2" width="8" height="1" fill="#b8b8b8"/><rect x="9" y="2" width="1" height="1" fill="#000"/><rect x="0" y="3" width="10" height="1" fill="#000"/></g></svg>
<svg style="position:absolute;left:11px;top:250px;" width="15" height="15" viewBox="0 0 15 15"><g shape-rendering="crispEdges"><rect x="0" y="0" width="14" height="14" fill="#000"/>
<rect x="1" y="1" width="12" height="12" fill="#606060"/>
<rect x="3" y="1" width="8" height="6" fill="#e8e8e8"/>
<rect x="3" y="9" width="8" height="5" fill="#000"/><rect x="8" y="10" width="2" height="3" fill="#909090"/></g></svg>
<svg style="position:absolute;left:10px;top:271px;" width="17" height="17" viewBox="0 0 17 17"><g transform="translate(0,2)"><g shape-rendering="crispEdges"><rect x="0" y="0" width="14" height="14" fill="#000"/>
<rect x="1" y="1" width="12" height="12" fill="#606060"/>
<rect x="3" y="1" width="8" height="6" fill="#e8e8e8"/>
<rect x="3" y="9" width="8" height="5" fill="#000"/><rect x="8" y="10" width="2" height="3" fill="#909090"/></g></g>
<circle cx="12" cy="5" r="3.6" fill="#e0e0e0" stroke="#000" stroke-width="1.3" stroke-dasharray="1.4 0.9"/><circle cx="12" cy="5" r="1.3" fill="#000"/></svg>
<div style="position:absolute;left:33px;top:196px;width:685px;height:476px;background:#fff;"></div>
<div style="position:absolute;left:31px;top:194px;width:689px;height:1px;background:#a0a0a0;"></div>
<div style="position:absolute;left:31px;top:194px;width:1px;height:476px;background:#a0a0a0;"></div>
<div style="position:absolute;left:32px;top:195px;width:687px;height:1px;background:#696969;"></div>
<div style="position:absolute;left:32px;top:195px;width:1px;height:475px;background:#696969;"></div>
<div style="position:absolute;left:719px;top:194px;width:1px;height:478px;background:#ffffff;"></div>
<div style="position:absolute;left:718px;top:195px;width:1px;height:477px;background:#e3e3e3;"></div>
<div style="position:absolute;left:702px;top:196px;width:16px;height:476px;background:#f0f0f0;"></div>
<div style="position:absolute;left:702px;top:213px;width:15px;height:457px;background:#cdcdcd;"></div>
<svg style="position:absolute;left:706px;top:202px;" width="7" height="6" viewBox="0 0 7 6"><g shape-rendering="crispEdges"><rect x="3" y="0" width="1" height="1" fill="#606060"/><rect x="2" y="1" width="3" height="1" fill="#606060"/><rect x="1" y="2" width="5" height="1" fill="#606060"/><rect x="0" y="3" width="3" height="1" fill="#606060"/><rect x="4" y="3" width="3" height="1" fill="#606060"/><rect x="0" y="4" width="2" height="1" fill="#606060"/><rect x="5" y="4" width="2" height="1" fill="#606060"/><rect x="0" y="5" width="1" height="1" fill="#606060"/><rect x="6" y="5" width="1" height="1" fill="#606060"/></g></svg>
<svg style="position:absolute;left:0;top:0;width:0;height:0;overflow:hidden" width="0" height="0"><defs><symbol id="ic_bin" viewBox="0 0 17 17" overflow="visible"><g shape-rendering="crispEdges"><rect x="0" y="0" width="13" height="1" fill="#808080"/><rect x="0" y="1" width="1" height="1" fill="#808080"/><rect x="1" y="1" width="12" height="1" fill="#fff"/><rect x="13" y="1" width="1" height="1" fill="#b8b8b8"/><rect x="0" y="2" width="1" height="1" fill="#808080"/><rect x="1" y="2" width="13" height="1" fill="#fff"/><rect x="14" y="2" width="1" height="1" fill="#b8b8b8"/><rect x="0" y="3" width="1" height="1" fill="#808080"/><rect x="1" y="3" width="12" height="1" fill="#fff"/><rect x="13" y="3" width="3" height="1" fill="#000"/><rect x="0" y="4" width="1" height="1" fill="#808080"/><rect x="1" y="4" width="1" height="1" fill="#fff"/><rect x="2" y="4" width="3" height="1" fill="#484848"/><rect x="5" y="4" width="1" height="1" fill="#fff"/><rect x="6" y="4" width="2" height="1" fill="#484848"/><rect x="8" y="4" width="2" height="1" fill="#fff"/><rect x="10" y="4" width="3" height="1" fill="#484848"/><rect x="13" y="4" width="1" height="1" fill="#fff"/><rect x="14" y="4" width="1" height="1" fill="#ececec"/><rect x="15" y="4" width="1" height="1" fill="#000"/><rect x="0" y="5" width="1" height="1" fill="#808080"/><rect x="1" y="5" width="1" height="1" fill="#fff"/><rect x="2" y="5" width="1" height="1" fill="#484848"/><rect x="3" y="5" width="1" height="1" fill="#fff"/><rect x="4" y="5" width="1" height="1" fill="#484848"/><rect x="5" y="5" width="2" height="1" fill="#fff"/><rect x="7" y="5" width="1" height="1" fill="#484848"/><rect x="8" y="5" width="2" height="1" fill="#fff"/><rect x="10" y="5" width="1" height="1" fill="#484848"/><rect x="11" y="5" width="1" height="1" fill="#fff"/><rect x="12" y="5" width="1" height="1" fill="#484848"/><rect x="13" y="5" width="1" height="1" fill="#fff"/><rect x="14" y="5" width="1" height="1" fill="#ececec"/><rect x="15" y="5" width="1" height="1" fill="#000"/><rect x="0" y="6" width="1" height="1" fill="#808080"/><rect x="1" y="6" width="1" height="1" fill="#fff"/><rect x="2" y="6" width="3" height="1" fill="#484848"/><rect x="5" y="6" width="1" height="1" fill="#fff"/><rect x="6" y="6" width="3" height="1" fill="#484848"/><rect x="9" y="6" width="1" height="1" fill="#fff"/><rect x="10" y="6" width="3" height="1" fill="#484848"/><rect x="13" y="6" width="2" height="1" fill="#ececec"/><rect x="15" y="6" width="1" height="1" fill="#000"/><rect x="0" y="7" width="1" height="1" fill="#808080"/><rect x="1" y="7" width="14" height="1" fill="#ececec"/><rect x="15" y="7" width="1" height="1" fill="#000"/><rect x="0" y="8" width="1" height="1" fill="#808080"/><rect x="1" y="8" width="1" height="1" fill="#ececec"/><rect x="2" y="8" width="2" height="1" fill="#484848"/><rect x="4" y="8" width="2" height="1" fill="#ececec"/><rect x="6" y="8" width="3" height="1" fill="#484848"/><rect x="9" y="8" width="1" height="1" fill="#ececec"/><rect x="10" y="8" width="3" height="1" fill="#484848"/><rect x="13" y="8" width="1" height="1" fill="#ececec"/><rect x="14" y="8" width="1" height="1" fill="#d8d8d8"/><rect x="15" y="8" width="1" height="1" fill="#000"/><rect x="0" y="9" width="1" height="1" fill="#808080"/><rect x="1" y="9" width="2" height="1" fill="#ececec"/><rect x="3" y="9" width="1" height="1" fill="#484848"/><rect x="4" y="9" width="2" height="1" fill="#ececec"/><rect x="6" y="9" width="1" height="1" fill="#484848"/><rect x="7" y="9" width="1" height="1" fill="#ececec"/><rect x="8" y="9" width="1" height="1" fill="#484848"/><rect x="9" y="9" width="1" height="1" fill="#ececec"/><rect x="10" y="9" width="1" height="1" fill="#484848"/><rect x="11" y="9" width="1" height="1" fill="#ececec"/><rect x="12" y="9" width="1" height="1" fill="#484848"/><rect x="13" y="9" width="1" height="1" fill="#ececec"/><rect x="14" y="9" width="1" height="1" fill="#d8d8d8"/><rect x="15" y="9" width="1" height="1" fill="#000"/><rect x="0" y="10" width="1" height="1" fill="#808080"/><rect x="1" y="10" width="1" height="1" fill="#d8d8d8"/><rect x="2" y="10" width="3" height="1" fill="#484848"/><rect x="5" y="10" width="1" height="1" fill="#d8d8d8"/><rect x="6" y="10" width="3" height="1" fill="#484848"/><rect x="9" y="10" width="1" height="1" fill="#d8d8d8"/><rect x="10" y="10" width="3" height="1" fill="#484848"/><rect x="13" y="10" width="2" height="1" fill="#d8d8d8"/><rect x="15" y="10" width="1" height="1" fill="#000"/><rect x="0" y="11" width="1" height="1" fill="#808080"/><rect x="1" y="11" width="14" height="1" fill="#d8d8d8"/><rect x="15" y="11" width="1" height="1" fill="#000"/><rect x="0" y="12" width="1" height="1" fill="#808080"/><rect x="1" y="12" width="14" height="1" fill="#d8d8d8"/><rect x="15" y="12" width="1" height="1" fill="#000"/><rect x="0" y="13" width="3" height="1" fill="#000"/><rect x="3" y="13" width="5" height="1" fill="#d8d8d8"/><rect x="8" y="13" width="5" height="1" fill="#000"/><rect x="13" y="13" width="2" height="1" fill="#d8d8d8"/><rect x="15" y="13" width="1" height="1" fill="#000"/><rect x="3" y="14" width="5" height="1" fill="#000"/><rect x="13" y="14" width="1" height="1" fill="#000"/><rect x="14" y="14" width="1" height="1" fill="#d8d8d8"/><rect x="15" y="14" width="1" height="1" fill="#000"/><rect x="14" y="15" width="2" height="1" fill="#000"/></g></symbol><symbol id="ic_cam" viewBox="0 0 17 17" overflow="visible"><g shape-rendering="crispEdges"><rect x="0" y="3" width="1" height="1" fill="#505050"/><rect x="0" y="4" width="2" height="1" fill="#505050"/><rect x="3" y="4" width="10" height="1" fill="#208850"/><rect x="0" y="5" width="1" height="1" fill="#505050"/><rect x="1" y="5" width="1" height="1" fill="#50f0d8"/><rect x="2" y="5" width="1" height="1" fill="#505050"/><rect x="3" y="5" width="1" height="1" fill="#48c8a8"/><rect x="4" y="5" width="5" height="1" fill="#50f0d8"/><rect x="9" y="5" width="3" height="1" fill="#48c8a8"/><rect x="12" y="5" width="1" height="1" fill="#88b8b8"/><rect x="13" y="5" width="2" height="1" fill="#000"/><rect x="0" y="6" width="1" height="1" fill="#505050"/><rect x="2" y="6" width="1" height="1" fill="#505050"/><rect x="3" y="6" width="1" height="1" fill="#48c8a8"/><rect x="4" y="6" width="5" height="1" fill="#50f0d8"/><rect x="9" y="6" width="3" height="1" fill="#48c8a8"/><rect x="12" y="6" width="1" height="1" fill="#88b8b8"/><rect x="13" y="6" width="1" height="1" fill="#000"/><rect x="14" y="6" width="1" height="1" fill="#40d8c8"/><rect x="15" y="6" width="1" height="1" fill="#000"/><rect x="3" y="7" width="1" height="1" fill="#48c8a8"/><rect x="4" y="7" width="5" height="1" fill="#505050"/><rect x="9" y="7" width="4" height="1" fill="#88b8b8"/><rect x="13" y="7" width="2" height="1" fill="#40d8c8"/><rect x="15" y="7" width="1" height="1" fill="#000"/><rect x="2" y="8" width="1" height="1" fill="#000"/><rect x="3" y="8" width="6" height="1" fill="#48c8a8"/><rect x="9" y="8" width="4" height="1" fill="#88b8b8"/><rect x="13" y="8" width="1" height="1" fill="#000"/><rect x="14" y="8" width="1" height="1" fill="#40d8c8"/><rect x="15" y="8" width="1" height="1" fill="#000"/><rect x="2" y="9" width="1" height="1" fill="#000"/><rect x="3" y="9" width="2" height="1" fill="#ff0000"/><rect x="5" y="9" width="5" height="1" fill="#48c8a8"/><rect x="10" y="9" width="3" height="1" fill="#88b8b8"/><rect x="13" y="9" width="1" height="1" fill="#000"/><rect x="14" y="9" width="1" height="1" fill="#40d8c8"/><rect x="15" y="9" width="1" height="1" fill="#000"/><rect x="2" y="10" width="1" height="1" fill="#000"/><rect x="3" y="10" width="2" height="1" fill="#ff0000"/><rect x="5" y="10" width="4" height="1" fill="#48c8a8"/><rect x="9" y="10" width="1" height="1" fill="#000"/><rect x="10" y="10" width="1" height="1" fill="#48c8a8"/><rect x="11" y="10" width="1" height="1" fill="#000"/><rect x="12" y="10" width="1" height="1" fill="#88b8b8"/><rect x="13" y="10" width="2" height="1" fill="#000"/><rect x="2" y="11" width="12" height="1" fill="#000"/></g></symbol><symbol id="ic_doc" viewBox="0 0 17 17" overflow="visible"><g shape-rendering="crispEdges"><rect x="2" y="1" width="10" height="1" fill="#808080"/><rect x="2" y="2" width="1" height="1" fill="#808080"/><rect x="3" y="2" width="9" height="1" fill="#ffffff"/><rect x="12" y="2" width="1" height="1" fill="#b0b0b0"/><rect x="13" y="2" width="1" height="1" fill="#ffffff"/><rect x="2" y="3" width="1" height="1" fill="#808080"/><rect x="3" y="3" width="9" height="1" fill="#fbfbfb"/><rect x="12" y="3" width="1" height="1" fill="#ffffff"/><rect x="13" y="3" width="1" height="1" fill="#b0b0b0"/><rect x="2" y="4" width="1" height="1" fill="#808080"/><rect x="3" y="4" width="1" height="1" fill="#f8f8f8"/><rect x="4" y="4" width="5" height="1" fill="#505050"/><rect x="9" y="4" width="2" height="1" fill="#f8f8f8"/><rect x="11" y="4" width="4" height="1" fill="#000000"/><rect x="2" y="5" width="1" height="1" fill="#808080"/><rect x="3" y="5" width="11" height="1" fill="#f5f5f5"/><rect x="14" y="5" width="1" height="1" fill="#000000"/><rect x="2" y="6" width="1" height="1" fill="#808080"/><rect x="3" y="6" width="1" height="1" fill="#f1f1f1"/><rect x="4" y="6" width="8" height="1" fill="#505050"/><rect x="12" y="6" width="2" height="1" fill="#f1f1f1"/><rect x="14" y="6" width="1" height="1" fill="#000000"/><rect x="2" y="7" width="1" height="1" fill="#808080"/><rect x="3" y="7" width="11" height="1" fill="#eeeeee"/><rect x="14" y="7" width="1" height="1" fill="#000000"/><rect x="2" y="8" width="1" height="1" fill="#808080"/><rect x="3" y="8" width="1" height="1" fill="#ebebeb"/><rect x="4" y="8" width="8" height="1" fill="#505050"/><rect x="12" y="8" width="2" height="1" fill="#ebebeb"/><rect x="14" y="8" width="1" height="1" fill="#000000"/><rect x="2" y="9" width="1" height="1" fill="#808080"/><rect x="3" y="9" width="11" height="1" fill="#e7e7e7"/><rect x="14" y="9" width="1" height="1" fill="#000000"/><rect x="2" y="10" width="1" height="1" fill="#808080"/><rect x="3" y="10" width="1" height="1" fill="#e4e4e4"/><rect x="4" y="10" width="8" height="1" fill="#505050"/><rect x="12" y="10" width="2" height="1" fill="#e4e4e4"/><rect x="14" y="10" width="1" height="1" fill="#000000"/><rect x="2" y="11" width="1" height="1" fill="#808080"/><rect x="3" y="11" width="11" height="1" fill="#e1e1e1"/><rect x="14" y="11" width="1" height="1" fill="#000000"/><rect x="2" y="12" width="1" height="1" fill="#808080"/><rect x="3" y="12" width="1" height="1" fill="#dddddd"/><rect x="4" y="12" width="8" height="1" fill="#505050"/><rect x="12" y="12" width="2" height="1" fill="#dddddd"/><rect x="14" y="12" width="1" height="1" fill="#000000"/><rect x="2" y="13" width="1" height="1" fill="#808080"/><rect x="3" y="13" width="11" height="1" fill="#dadada"/><rect x="14" y="13" width="1" height="1" fill="#000000"/><rect x="2" y="14" width="1" height="1" fill="#808080"/><rect x="3" y="14" width="11" height="1" fill="#d7d7d7"/><rect x="14" y="14" width="1" height="1" fill="#000000"/><rect x="2" y="15" width="13" height="1" fill="#000000"/></g></symbol><symbol id="ic_fcc" viewBox="0 0 17 17" overflow="visible"><g shape-rendering="crispEdges"><rect x="0" y="0" width="13" height="1" fill="#808080"/><rect x="0" y="1" width="1" height="1" fill="#808080"/><rect x="1" y="1" width="12" height="1" fill="#fff"/><rect x="13" y="1" width="1" height="1" fill="#b8b8b8"/><rect x="0" y="2" width="1" height="1" fill="#808080"/><rect x="1" y="2" width="13" height="1" fill="#fff"/><rect x="14" y="2" width="1" height="1" fill="#b8b8b8"/><rect x="0" y="3" width="1" height="1" fill="#808080"/><rect x="1" y="3" width="12" height="1" fill="#fff"/><rect x="13" y="3" width="3" height="1" fill="#000"/><rect x="0" y="4" width="1" height="1" fill="#808080"/><rect x="1" y="4" width="1" height="1" fill="#fff"/><rect x="2" y="4" width="3" height="1" fill="#484848"/><rect x="5" y="4" width="2" height="1" fill="#fff"/><rect x="7" y="4" width="2" height="1" fill="#484848"/><rect x="9" y="4" width="2" height="1" fill="#fff"/><rect x="11" y="4" width="2" height="1" fill="#484848"/><rect x="13" y="4" width="1" height="1" fill="#fff"/><rect x="14" y="4" width="1" height="1" fill="#ececec"/><rect x="15" y="4" width="1" height="1" fill="#000"/><rect x="0" y="5" width="1" height="1" fill="#808080"/><rect x="1" y="5" width="1" height="1" fill="#fff"/><rect x="2" y="5" width="1" height="1" fill="#484848"/><rect x="3" y="5" width="3" height="1" fill="#fff"/><rect x="6" y="5" width="1" height="1" fill="#484848"/><rect x="7" y="5" width="3" height="1" fill="#fff"/><rect x="10" y="5" width="1" height="1" fill="#484848"/><rect x="11" y="5" width="3" height="1" fill="#fff"/><rect x="14" y="5" width="1" height="1" fill="#ececec"/><rect x="15" y="5" width="1" height="1" fill="#000"/><rect x="0" y="6" width="1" height="1" fill="#808080"/><rect x="1" y="6" width="1" height="1" fill="#fff"/><rect x="2" y="6" width="1" height="1" fill="#484848"/><rect x="3" y="6" width="3" height="1" fill="#fff"/><rect x="6" y="6" width="1" height="1" fill="#484848"/><rect x="7" y="6" width="3" height="1" fill="#fff"/><rect x="10" y="6" width="1" height="1" fill="#484848"/><rect x="11" y="6" width="2" height="1" fill="#fff"/><rect x="13" y="6" width="2" height="1" fill="#ececec"/><rect x="15" y="6" width="1" height="1" fill="#000"/><rect x="0" y="7" width="1" height="1" fill="#808080"/><rect x="1" y="7" width="1" height="1" fill="#ececec"/><rect x="2" y="7" width="2" height="1" fill="#484848"/><rect x="4" y="7" width="2" height="1" fill="#ececec"/><rect x="6" y="7" width="1" height="1" fill="#484848"/><rect x="7" y="7" width="3" height="1" fill="#ececec"/><rect x="10" y="7" width="1" height="1" fill="#484848"/><rect x="11" y="7" width="4" height="1" fill="#ececec"/><rect x="15" y="7" width="1" height="1" fill="#000"/><rect x="0" y="8" width="1" height="1" fill="#808080"/><rect x="1" y="8" width="1" height="1" fill="#ececec"/><rect x="2" y="8" width="1" height="1" fill="#484848"/><rect x="3" y="8" width="3" height="1" fill="#ececec"/><rect x="6" y="8" width="1" height="1" fill="#484848"/><rect x="7" y="8" width="3" height="1" fill="#ececec"/><rect x="10" y="8" width="1" height="1" fill="#484848"/><rect x="11" y="8" width="3" height="1" fill="#ececec"/><rect x="14" y="8" width="1" height="1" fill="#d8d8d8"/><rect x="15" y="8" width="1" height="1" fill="#000"/><rect x="0" y="9" width="1" height="1" fill="#808080"/><rect x="1" y="9" width="1" height="1" fill="#ececec"/><rect x="2" y="9" width="1" height="1" fill="#484848"/><rect x="3" y="9" width="4" height="1" fill="#ececec"/><rect x="7" y="9" width="2" height="1" fill="#484848"/><rect x="9" y="9" width="2" height="1" fill="#ececec"/><rect x="11" y="9" width="2" height="1" fill="#484848"/><rect x="13" y="9" width="1" height="1" fill="#ececec"/><rect x="14" y="9" width="1" height="1" fill="#d8d8d8"/><rect x="15" y="9" width="1" height="1" fill="#000"/><rect x="0" y="10" width="1" height="1" fill="#808080"/><rect x="1" y="10" width="14" height="1" fill="#d8d8d8"/><rect x="15" y="10" width="1" height="1" fill="#000"/><rect x="0" y="11" width="1" height="1" fill="#808080"/><rect x="1" y="11" width="14" height="1" fill="#d8d8d8"/><rect x="15" y="11" width="1" height="1" fill="#000"/><rect x="0" y="12" width="1" height="1" fill="#808080"/><rect x="1" y="12" width="14" height="1" fill="#d8d8d8"/><rect x="15" y="12" width="1" height="1" fill="#000"/><rect x="0" y="13" width="3" height="1" fill="#000"/><rect x="3" y="13" width="5" height="1" fill="#d8d8d8"/><rect x="8" y="13" width="5" height="1" fill="#000"/><rect x="13" y="13" width="2" height="1" fill="#d8d8d8"/><rect x="15" y="13" width="1" height="1" fill="#000"/><rect x="3" y="14" width="5" height="1" fill="#000"/><rect x="13" y="14" width="1" height="1" fill="#000"/><rect x="14" y="14" width="1" height="1" fill="#d8d8d8"/><rect x="15" y="14" width="1" height="1" fill="#000"/><rect x="14" y="15" width="2" height="1" fill="#000"/></g></symbol><symbol id="ic_film" viewBox="0 0 17 17" overflow="visible"><g shape-rendering="crispEdges"><rect x="4" y="0" width="9" height="1" fill="#808080"/><rect x="4" y="1" width="1" height="1" fill="#808080"/><rect x="5" y="1" width="8" height="1" fill="#ffffff"/><rect x="13" y="1" width="1" height="1" fill="#b0b0b0"/><rect x="14" y="1" width="1" height="1" fill="#ffffff"/><rect x="4" y="2" width="1" height="1" fill="#808080"/><rect x="5" y="2" width="9" height="1" fill="#fbfbfb"/><rect x="14" y="2" width="1" height="1" fill="#b0b0b0"/><rect x="4" y="3" width="1" height="1" fill="#808080"/><rect x="5" y="3" width="7" height="1" fill="#f8f8f8"/><rect x="12" y="3" width="4" height="1" fill="#000000"/><rect x="4" y="4" width="1" height="1" fill="#808080"/><rect x="5" y="4" width="10" height="1" fill="#f5f5f5"/><rect x="15" y="4" width="1" height="1" fill="#000000"/><rect x="0" y="5" width="1" height="1" fill="#000000"/><rect x="4" y="5" width="1" height="1" fill="#808080"/><rect x="5" y="5" width="10" height="1" fill="#f2f2f2"/><rect x="15" y="5" width="1" height="1" fill="#000000"/><rect x="1" y="6" width="13" height="1" fill="#000000"/><rect x="14" y="6" width="1" height="1" fill="#efefef"/><rect x="15" y="6" width="1" height="1" fill="#000000"/><rect x="1" y="7" width="1" height="1" fill="#404040"/><rect x="2" y="7" width="1" height="1" fill="#000000"/><rect x="3" y="7" width="4" height="1" fill="#ffffff"/><rect x="7" y="7" width="1" height="1" fill="#a3a3a3"/><rect x="8" y="7" width="1" height="1" fill="#9c9c9c"/><rect x="9" y="7" width="1" height="1" fill="#959595"/><rect x="10" y="7" width="1" height="1" fill="#8d8d8d"/><rect x="11" y="7" width="1" height="1" fill="#868686"/><rect x="12" y="7" width="2" height="1" fill="#000000"/><rect x="14" y="7" width="1" height="1" fill="#ececec"/><rect x="15" y="7" width="1" height="1" fill="#000000"/><rect x="0" y="8" width="1" height="1" fill="#000000"/><rect x="2" y="8" width="1" height="1" fill="#000000"/><rect x="3" y="8" width="1" height="1" fill="#c0c0c0"/><rect x="4" y="8" width="1" height="1" fill="#b9b9b9"/><rect x="5" y="8" width="1" height="1" fill="#b2b2b2"/><rect x="6" y="8" width="1" height="1" fill="#aaaaaa"/><rect x="7" y="8" width="1" height="1" fill="#a3a3a3"/><rect x="8" y="8" width="1" height="1" fill="#9c9c9c"/><rect x="9" y="8" width="1" height="1" fill="#959595"/><rect x="10" y="8" width="1" height="1" fill="#8d8d8d"/><rect x="11" y="8" width="1" height="1" fill="#ffffff"/><rect x="12" y="8" width="2" height="1" fill="#000000"/><rect x="14" y="8" width="1" height="1" fill="#e9e9e9"/><rect x="15" y="8" width="1" height="1" fill="#000000"/><rect x="2" y="9" width="1" height="1" fill="#000000"/><rect x="3" y="9" width="1" height="1" fill="#c0c0c0"/><rect x="4" y="9" width="1" height="1" fill="#b9b9b9"/><rect x="5" y="9" width="1" height="1" fill="#b2b2b2"/><rect x="6" y="9" width="1" height="1" fill="#aaaaaa"/><rect x="7" y="9" width="1" height="1" fill="#a3a3a3"/><rect x="8" y="9" width="1" height="1" fill="#9c9c9c"/><rect x="9" y="9" width="1" height="1" fill="#959595"/><rect x="10" y="9" width="1" height="1" fill="#8d8d8d"/><rect x="11" y="9" width="1" height="1" fill="#868686"/><rect x="12" y="9" width="2" height="1" fill="#000000"/><rect x="14" y="9" width="1" height="1" fill="#e6e6e6"/><rect x="15" y="9" width="1" height="1" fill="#000000"/><rect x="2" y="10" width="1" height="1" fill="#000000"/><rect x="3" y="10" width="1" height="1" fill="#c0c0c0"/><rect x="4" y="10" width="1" height="1" fill="#b9b9b9"/><rect x="5" y="10" width="1" height="1" fill="#b2b2b2"/><rect x="6" y="10" width="1" height="1" fill="#aaaaaa"/><rect x="7" y="10" width="1" height="1" fill="#a3a3a3"/><rect x="8" y="10" width="1" height="1" fill="#000000"/><rect x="9" y="10" width="1" height="1" fill="#959595"/><rect x="10" y="10" width="1" height="1" fill="#000000"/><rect x="11" y="10" width="1" height="1" fill="#868686"/><rect x="12" y="10" width="2" height="1" fill="#000000"/><rect x="14" y="10" width="1" height="1" fill="#e3e3e3"/><rect x="15" y="10" width="1" height="1" fill="#000000"/><rect x="2" y="11" width="12" height="1" fill="#000000"/><rect x="14" y="11" width="1" height="1" fill="#e0e0e0"/><rect x="15" y="11" width="1" height="1" fill="#000000"/><rect x="4" y="12" width="1" height="1" fill="#808080"/><rect x="5" y="12" width="10" height="1" fill="#dddddd"/><rect x="15" y="12" width="1" height="1" fill="#000000"/><rect x="4" y="13" width="1" height="1" fill="#808080"/><rect x="5" y="13" width="10" height="1" fill="#dadada"/><rect x="15" y="13" width="1" height="1" fill="#000000"/><rect x="4" y="14" width="1" height="1" fill="#808080"/><rect x="5" y="14" width="10" height="1" fill="#d7d7d7"/><rect x="15" y="14" width="1" height="1" fill="#000000"/><rect x="4" y="15" width="12" height="1" fill="#000000"/></g></symbol><symbol id="ic_folder" viewBox="0 0 17 17" overflow="visible"><g shape-rendering="crispEdges"><rect x="3" y="1" width="5" height="1" fill="#808080"/><rect x="2" y="2" width="1" height="1" fill="#808080"/><rect x="3" y="2" width="5" height="1" fill="#ffffff"/><rect x="8" y="2" width="1" height="1" fill="#000000"/><rect x="1" y="3" width="1" height="1" fill="#808080"/><rect x="2" y="3" width="1" height="1" fill="#e0e0e0"/><rect x="3" y="3" width="5" height="1" fill="#909090"/><rect x="8" y="3" width="1" height="1" fill="#f0f0f0"/><rect x="9" y="3" width="6" height="1" fill="#808080"/><rect x="1" y="4" width="1" height="1" fill="#808080"/><rect x="2" y="4" width="1" height="1" fill="#eeeeee"/><rect x="3" y="4" width="1" height="1" fill="#e7e7e7"/><rect x="4" y="4" width="1" height="1" fill="#e1e1e1"/><rect x="5" y="4" width="1" height="1" fill="#dadada"/><rect x="6" y="4" width="1" height="1" fill="#d4d4d4"/><rect x="7" y="4" width="1" height="1" fill="#cdcdcd"/><rect x="8" y="4" width="1" height="1" fill="#c7c7c7"/><rect x="9" y="4" width="1" height="1" fill="#c0c0c0"/><rect x="10" y="4" width="1" height="1" fill="#bababa"/><rect x="11" y="4" width="1" height="1" fill="#b3b3b3"/><rect x="12" y="4" width="1" height="1" fill="#adadad"/><rect x="13" y="4" width="1" height="1" fill="#a6a6a6"/><rect x="14" y="4" width="1" height="1" fill="#a0a0a0"/><rect x="15" y="4" width="1" height="1" fill="#000000"/><rect x="1" y="5" width="1" height="1" fill="#808080"/><rect x="2" y="5" width="1" height="1" fill="#eeeeee"/><rect x="3" y="5" width="1" height="1" fill="#e7e7e7"/><rect x="4" y="5" width="1" height="1" fill="#e1e1e1"/><rect x="5" y="5" width="1" height="1" fill="#dadada"/><rect x="6" y="5" width="1" height="1" fill="#d4d4d4"/><rect x="7" y="5" width="1" height="1" fill="#cdcdcd"/><rect x="8" y="5" width="1" height="1" fill="#c7c7c7"/><rect x="9" y="5" width="1" height="1" fill="#c0c0c0"/><rect x="10" y="5" width="1" height="1" fill="#bababa"/><rect x="11" y="5" width="1" height="1" fill="#b3b3b3"/><rect x="12" y="5" width="1" height="1" fill="#adadad"/><rect x="13" y="5" width="1" height="1" fill="#a6a6a6"/><rect x="14" y="5" width="1" height="1" fill="#a0a0a0"/><rect x="15" y="5" width="1" height="1" fill="#000000"/><rect x="1" y="6" width="1" height="1" fill="#808080"/><rect x="2" y="6" width="1" height="1" fill="#eeeeee"/><rect x="3" y="6" width="1" height="1" fill="#e7e7e7"/><rect x="4" y="6" width="1" height="1" fill="#e1e1e1"/><rect x="5" y="6" width="1" height="1" fill="#dadada"/><rect x="6" y="6" width="1" height="1" fill="#d4d4d4"/><rect x="7" y="6" width="1" height="1" fill="#cdcdcd"/><rect x="8" y="6" width="1" height="1" fill="#c7c7c7"/><rect x="9" y="6" width="1" height="1" fill="#c0c0c0"/><rect x="10" y="6" width="1" height="1" fill="#bababa"/><rect x="11" y="6" width="1" height="1" fill="#b3b3b3"/><rect x="12" y="6" width="1" height="1" fill="#adadad"/><rect x="13" y="6" width="1" height="1" fill="#a6a6a6"/><rect x="14" y="6" width="1" height="1" fill="#a0a0a0"/><rect x="15" y="6" width="1" height="1" fill="#000000"/><rect x="1" y="7" width="1" height="1" fill="#808080"/><rect x="2" y="7" width="1" height="1" fill="#eeeeee"/><rect x="3" y="7" width="1" height="1" fill="#e7e7e7"/><rect x="4" y="7" width="1" height="1" fill="#e1e1e1"/><rect x="5" y="7" width="1" height="1" fill="#dadada"/><rect x="6" y="7" width="1" height="1" fill="#d4d4d4"/><rect x="7" y="7" width="1" height="1" fill="#cdcdcd"/><rect x="8" y="7" width="1" height="1" fill="#c7c7c7"/><rect x="9" y="7" width="1" height="1" fill="#c0c0c0"/><rect x="10" y="7" width="1" height="1" fill="#bababa"/><rect x="11" y="7" width="1" height="1" fill="#b3b3b3"/><rect x="12" y="7" width="1" height="1" fill="#adadad"/><rect x="13" y="7" width="1" height="1" fill="#a6a6a6"/><rect x="14" y="7" width="1" height="1" fill="#a0a0a0"/><rect x="15" y="7" width="1" height="1" fill="#000000"/><rect x="1" y="8" width="1" height="1" fill="#808080"/><rect x="2" y="8" width="1" height="1" fill="#eeeeee"/><rect x="3" y="8" width="1" height="1" fill="#e7e7e7"/><rect x="4" y="8" width="1" height="1" fill="#e1e1e1"/><rect x="5" y="8" width="1" height="1" fill="#dadada"/><rect x="6" y="8" width="1" height="1" fill="#d4d4d4"/><rect x="7" y="8" width="1" height="1" fill="#cdcdcd"/><rect x="8" y="8" width="1" height="1" fill="#c7c7c7"/><rect x="9" y="8" width="1" height="1" fill="#c0c0c0"/><rect x="10" y="8" width="1" height="1" fill="#bababa"/><rect x="11" y="8" width="1" height="1" fill="#b3b3b3"/><rect x="12" y="8" width="1" height="1" fill="#adadad"/><rect x="13" y="8" width="1" height="1" fill="#a6a6a6"/><rect x="14" y="8" width="1" height="1" fill="#a0a0a0"/><rect x="15" y="8" width="1" height="1" fill="#000000"/><rect x="1" y="9" width="1" height="1" fill="#808080"/><rect x="2" y="9" width="1" height="1" fill="#eeeeee"/><rect x="3" y="9" width="1" height="1" fill="#e7e7e7"/><rect x="4" y="9" width="1" height="1" fill="#e1e1e1"/><rect x="5" y="9" width="1" height="1" fill="#dadada"/><rect x="6" y="9" width="1" height="1" fill="#d4d4d4"/><rect x="7" y="9" width="1" height="1" fill="#cdcdcd"/><rect x="8" y="9" width="1" height="1" fill="#c7c7c7"/><rect x="9" y="9" width="1" height="1" fill="#c0c0c0"/><rect x="10" y="9" width="1" height="1" fill="#bababa"/><rect x="11" y="9" width="1" height="1" fill="#b3b3b3"/><rect x="12" y="9" width="1" height="1" fill="#adadad"/><rect x="13" y="9" width="1" height="1" fill="#a6a6a6"/><rect x="14" y="9" width="1" height="1" fill="#a0a0a0"/><rect x="15" y="9" width="1" height="1" fill="#000000"/><rect x="1" y="10" width="1" height="1" fill="#808080"/><rect x="2" y="10" width="1" height="1" fill="#eeeeee"/><rect x="3" y="10" width="1" height="1" fill="#e7e7e7"/><rect x="4" y="10" width="1" height="1" fill="#e1e1e1"/><rect x="5" y="10" width="1" height="1" fill="#dadada"/><rect x="6" y="10" width="1" height="1" fill="#d4d4d4"/><rect x="7" y="10" width="1" height="1" fill="#cdcdcd"/><rect x="8" y="10" width="1" height="1" fill="#c7c7c7"/><rect x="9" y="10" width="1" height="1" fill="#c0c0c0"/><rect x="10" y="10" width="1" height="1" fill="#bababa"/><rect x="11" y="10" width="1" height="1" fill="#b3b3b3"/><rect x="12" y="10" width="1" height="1" fill="#adadad"/><rect x="13" y="10" width="1" height="1" fill="#a6a6a6"/><rect x="14" y="10" width="1" height="1" fill="#a0a0a0"/><rect x="15" y="10" width="1" height="1" fill="#000000"/><rect x="1" y="11" width="1" height="1" fill="#808080"/><rect x="2" y="11" width="1" height="1" fill="#eeeeee"/><rect x="3" y="11" width="1" height="1" fill="#e7e7e7"/><rect x="4" y="11" width="1" height="1" fill="#e1e1e1"/><rect x="5" y="11" width="1" height="1" fill="#dadada"/><rect x="6" y="11" width="1" height="1" fill="#d4d4d4"/><rect x="7" y="11" width="1" height="1" fill="#cdcdcd"/><rect x="8" y="11" width="1" height="1" fill="#c7c7c7"/><rect x="9" y="11" width="1" height="1" fill="#c0c0c0"/><rect x="10" y="11" width="1" height="1" fill="#bababa"/><rect x="11" y="11" width="1" height="1" fill="#b3b3b3"/><rect x="12" y="11" width="1" height="1" fill="#adadad"/><rect x="13" y="11" width="1" height="1" fill="#a6a6a6"/><rect x="14" y="11" width="1" height="1" fill="#a0a0a0"/><rect x="15" y="11" width="1" height="1" fill="#000000"/><rect x="1" y="12" width="1" height="1" fill="#808080"/><rect x="2" y="12" width="7" height="1" fill="#f8f8f8"/><rect x="9" y="12" width="1" height="1" fill="#c0c0c0"/><rect x="10" y="12" width="1" height="1" fill="#bababa"/><rect x="11" y="12" width="1" height="1" fill="#b3b3b3"/><rect x="12" y="12" width="1" height="1" fill="#adadad"/><rect x="13" y="12" width="1" height="1" fill="#a6a6a6"/><rect x="14" y="12" width="1" height="1" fill="#a0a0a0"/><rect x="15" y="12" width="1" height="1" fill="#000000"/><rect x="1" y="13" width="15" height="1" fill="#000000"/></g></symbol><symbol id="ic_info" viewBox="0 0 17 17" overflow="visible"><defs><radialGradient id="ig" cx="0.3" cy="0.3" r="0.8"><stop offset="0" stop-color="#ffffff"/><stop offset="1" stop-color="#c8c8c8"/></radialGradient></defs>
<path d="M8 1.5 C12.5 1.5 15.5 4 15.5 7.5 C15.5 10.5 13 12.8 10.5 13.2 L9 15.5 L7.5 13.3 C4 13 0.5 11 0.5 7.5 C0.5 4 3.5 1.5 8 1.5 Z" fill="url(#ig)" stroke="#000" stroke-width="1"/>
<g fill="#505050" shape-rendering="crispEdges"><rect x="7" y="3" width="2" height="2"/><rect x="7" y="6" width="2" height="4"/><rect x="6" y="6" width="1" height="1"/><rect x="6" y="10" width="4" height="1"/></g></symbol><symbol id="ic_n234" viewBox="0 0 17 17" overflow="visible"><g shape-rendering="crispEdges"><rect x="0" y="0" width="13" height="1" fill="#808080"/><rect x="0" y="1" width="1" height="1" fill="#808080"/><rect x="1" y="1" width="12" height="1" fill="#fff"/><rect x="13" y="1" width="1" height="1" fill="#b8b8b8"/><rect x="0" y="2" width="1" height="1" fill="#808080"/><rect x="1" y="2" width="13" height="1" fill="#fff"/><rect x="14" y="2" width="1" height="1" fill="#b8b8b8"/><rect x="0" y="3" width="1" height="1" fill="#808080"/><rect x="1" y="3" width="12" height="1" fill="#fff"/><rect x="13" y="3" width="3" height="1" fill="#000"/><rect x="0" y="4" width="1" height="1" fill="#808080"/><rect x="1" y="4" width="1" height="1" fill="#fff"/><rect x="2" y="4" width="3" height="1" fill="#484848"/><rect x="5" y="4" width="1" height="1" fill="#fff"/><rect x="6" y="4" width="3" height="1" fill="#484848"/><rect x="9" y="4" width="1" height="1" fill="#fff"/><rect x="10" y="4" width="1" height="1" fill="#484848"/><rect x="11" y="4" width="1" height="1" fill="#fff"/><rect x="12" y="4" width="1" height="1" fill="#484848"/><rect x="13" y="4" width="1" height="1" fill="#fff"/><rect x="14" y="4" width="1" height="1" fill="#ececec"/><rect x="15" y="4" width="1" height="1" fill="#000"/><rect x="0" y="5" width="1" height="1" fill="#808080"/><rect x="1" y="5" width="3" height="1" fill="#fff"/><rect x="4" y="5" width="1" height="1" fill="#484848"/><rect x="5" y="5" width="3" height="1" fill="#fff"/><rect x="8" y="5" width="1" height="1" fill="#484848"/><rect x="9" y="5" width="1" height="1" fill="#fff"/><rect x="10" y="5" width="1" height="1" fill="#484848"/><rect x="11" y="5" width="1" height="1" fill="#fff"/><rect x="12" y="5" width="1" height="1" fill="#484848"/><rect x="13" y="5" width="1" height="1" fill="#fff"/><rect x="14" y="5" width="1" height="1" fill="#ececec"/><rect x="15" y="5" width="1" height="1" fill="#000"/><rect x="0" y="6" width="1" height="1" fill="#808080"/><rect x="1" y="6" width="1" height="1" fill="#fff"/><rect x="2" y="6" width="3" height="1" fill="#484848"/><rect x="5" y="6" width="1" height="1" fill="#fff"/><rect x="6" y="6" width="3" height="1" fill="#484848"/><rect x="9" y="6" width="1" height="1" fill="#fff"/><rect x="10" y="6" width="1" height="1" fill="#484848"/><rect x="11" y="6" width="1" height="1" fill="#fff"/><rect x="12" y="6" width="1" height="1" fill="#484848"/><rect x="13" y="6" width="2" height="1" fill="#ececec"/><rect x="15" y="6" width="1" height="1" fill="#000"/><rect x="0" y="7" width="1" height="1" fill="#808080"/><rect x="1" y="7" width="1" height="1" fill="#ececec"/><rect x="2" y="7" width="1" height="1" fill="#484848"/><rect x="3" y="7" width="5" height="1" fill="#ececec"/><rect x="8" y="7" width="1" height="1" fill="#484848"/><rect x="9" y="7" width="1" height="1" fill="#ececec"/><rect x="10" y="7" width="3" height="1" fill="#484848"/><rect x="13" y="7" width="2" height="1" fill="#ececec"/><rect x="15" y="7" width="1" height="1" fill="#000"/><rect x="0" y="8" width="1" height="1" fill="#808080"/><rect x="1" y="8" width="1" height="1" fill="#ececec"/><rect x="2" y="8" width="1" height="1" fill="#484848"/><rect x="3" y="8" width="5" height="1" fill="#ececec"/><rect x="8" y="8" width="1" height="1" fill="#484848"/><rect x="9" y="8" width="3" height="1" fill="#ececec"/><rect x="12" y="8" width="1" height="1" fill="#484848"/><rect x="13" y="8" width="1" height="1" fill="#ececec"/><rect x="14" y="8" width="1" height="1" fill="#d8d8d8"/><rect x="15" y="8" width="1" height="1" fill="#000"/><rect x="0" y="9" width="1" height="1" fill="#808080"/><rect x="1" y="9" width="1" height="1" fill="#ececec"/><rect x="2" y="9" width="3" height="1" fill="#484848"/><rect x="5" y="9" width="1" height="1" fill="#ececec"/><rect x="6" y="9" width="3" height="1" fill="#484848"/><rect x="9" y="9" width="3" height="1" fill="#ececec"/><rect x="12" y="9" width="1" height="1" fill="#484848"/><rect x="13" y="9" width="1" height="1" fill="#ececec"/><rect x="14" y="9" width="1" height="1" fill="#d8d8d8"/><rect x="15" y="9" width="1" height="1" fill="#000"/><rect x="0" y="10" width="1" height="1" fill="#808080"/><rect x="1" y="10" width="14" height="1" fill="#d8d8d8"/><rect x="15" y="10" width="1" height="1" fill="#000"/><rect x="0" y="11" width="1" height="1" fill="#808080"/><rect x="1" y="11" width="14" height="1" fill="#d8d8d8"/><rect x="15" y="11" width="1" height="1" fill="#000"/><rect x="0" y="12" width="1" height="1" fill="#808080"/><rect x="1" y="12" width="14" height="1" fill="#d8d8d8"/><rect x="15" y="12" width="1" height="1" fill="#000"/><rect x="0" y="13" width="3" height="1" fill="#000"/><rect x="3" y="13" width="5" height="1" fill="#d8d8d8"/><rect x="8" y="13" width="5" height="1" fill="#000"/><rect x="13" y="13" width="2" height="1" fill="#d8d8d8"/><rect x="15" y="13" width="1" height="1" fill="#000"/><rect x="3" y="14" width="5" height="1" fill="#000"/><rect x="13" y="14" width="1" height="1" fill="#000"/><rect x="14" y="14" width="1" height="1" fill="#d8d8d8"/><rect x="15" y="14" width="1" height="1" fill="#000"/><rect x="14" y="15" width="2" height="1" fill="#000"/></g></symbol></defs></svg>
<div style="position:absolute;left:33px;top:196px;width:669px;height:474px;overflow:hidden">
<svg style="position:absolute;left:-33px;top:-196px" width="725" height="696" shape-rendering="crispEdges"><g fill="#a0a0a0"><rect x="62" y="212" width="1" height="1"/><rect x="62" y="214" width="1" height="1"/><rect x="62" y="216" width="1" height="1"/><rect x="62" y="218" width="1" height="1"/><rect x="62" y="220" width="1" height="1"/><rect x="62" y="222" width="1" height="1"/><rect x="62" y="224" width="1" height="1"/><rect x="62" y="226" width="1" height="1"/><rect x="62" y="228" width="1" height="1"/><rect x="62" y="230" width="1" height="1"/><rect x="62" y="232" width="1" height="1"/><rect x="62" y="234" width="1" height="1"/><rect x="62" y="236" width="1" height="1"/><rect x="62" y="238" width="1" height="1"/><rect x="62" y="240" width="1" height="1"/><rect x="62" y="242" width="1" height="1"/><rect x="62" y="244" width="1" height="1"/><rect x="62" y="246" width="1" height="1"/><rect x="62" y="248" width="1" height="1"/><rect x="62" y="250" width="1" height="1"/><rect x="62" y="252" width="1" height="1"/><rect x="62" y="254" width="1" height="1"/><rect x="62" y="256" width="1" height="1"/><rect x="62" y="258" width="1" height="1"/><rect x="62" y="260" width="1" height="1"/><rect x="62" y="262" width="1" height="1"/><rect x="62" y="264" width="1" height="1"/><rect x="62" y="266" width="1" height="1"/><rect x="62" y="268" width="1" height="1"/><rect x="62" y="270" width="1" height="1"/><rect x="62" y="272" width="1" height="1"/><rect x="62" y="274" width="1" height="1"/><rect x="62" y="276" width="1" height="1"/><rect x="62" y="278" width="1" height="1"/><rect x="62" y="280" width="1" height="1"/><rect x="62" y="282" width="1" height="1"/><rect x="62" y="284" width="1" height="1"/><rect x="62" y="286" width="1" height="1"/><rect x="62" y="288" width="1" height="1"/><rect x="62" y="290" width="1" height="1"/><rect x="62" y="292" width="1" height="1"/><rect x="62" y="294" width="1" height="1"/><rect x="62" y="296" width="1" height="1"/><rect x="62" y="298" width="1" height="1"/><rect x="62" y="300" width="1" height="1"/><rect x="62" y="302" width="1" height="1"/><rect x="62" y="304" width="1" height="1"/><rect x="62" y="306" width="1" height="1"/><rect x="62" y="308" width="1" height="1"/><rect x="62" y="310" width="1" height="1"/><rect x="62" y="312" width="1" height="1"/><rect x="62" y="314" width="1" height="1"/><rect x="62" y="316" width="1" height="1"/><rect x="62" y="318" width="1" height="1"/><rect x="62" y="320" width="1" height="1"/><rect x="62" y="322" width="1" height="1"/><rect x="62" y="324" width="1" height="1"/><rect x="62" y="326" width="1" height="1"/><rect x="62" y="328" width="1" height="1"/><rect x="62" y="330" width="1" height="1"/><rect x="62" y="332" width="1" height="1"/><rect x="62" y="334" width="1" height="1"/><rect x="62" y="336" width="1" height="1"/><rect x="62" y="338" width="1" height="1"/><rect x="62" y="340" width="1" height="1"/><rect x="62" y="342" width="1" height="1"/><rect x="62" y="344" width="1" height="1"/><rect x="62" y="346" width="1" height="1"/><rect x="62" y="348" width="1" height="1"/><rect x="62" y="350" width="1" height="1"/><rect x="62" y="352" width="1" height="1"/><rect x="62" y="354" width="1" height="1"/><rect x="62" y="356" width="1" height="1"/><rect x="62" y="358" width="1" height="1"/><rect x="62" y="360" width="1" height="1"/><rect x="62" y="362" width="1" height="1"/><rect x="62" y="364" width="1" height="1"/><rect x="62" y="366" width="1" height="1"/><rect x="62" y="368" width="1" height="1"/><rect x="62" y="370" width="1" height="1"/><rect x="62" y="372" width="1" height="1"/><rect x="62" y="374" width="1" height="1"/><rect x="62" y="376" width="1" height="1"/><rect x="62" y="378" width="1" height="1"/><rect x="62" y="380" width="1" height="1"/><rect x="62" y="382" width="1" height="1"/><rect x="62" y="384" width="1" height="1"/><rect x="62" y="386" width="1" height="1"/><rect x="62" y="388" width="1" height="1"/><rect x="62" y="390" width="1" height="1"/><rect x="62" y="392" width="1" height="1"/><rect x="62" y="394" width="1" height="1"/><rect x="62" y="396" width="1" height="1"/><rect x="62" y="398" width="1" height="1"/><rect x="62" y="400" width="1" height="1"/><rect x="62" y="402" width="1" height="1"/><rect x="62" y="404" width="1" height="1"/><rect x="62" y="406" width="1" height="1"/><rect x="62" y="408" width="1" height="1"/><rect x="62" y="410" width="1" height="1"/><rect x="62" y="412" width="1" height="1"/><rect x="62" y="414" width="1" height="1"/><rect x="62" y="416" width="1" height="1"/><rect x="62" y="418" width="1" height="1"/><rect x="62" y="420" width="1" height="1"/><rect x="62" y="422" width="1" height="1"/><rect x="62" y="424" width="1" height="1"/><rect x="62" y="426" width="1" height="1"/><rect x="62" y="428" width="1" height="1"/><rect x="62" y="430" width="1" height="1"/><rect x="62" y="432" width="1" height="1"/><rect x="62" y="434" width="1" height="1"/><rect x="62" y="436" width="1" height="1"/><rect x="62" y="438" width="1" height="1"/><rect x="62" y="440" width="1" height="1"/><rect x="62" y="442" width="1" height="1"/><rect x="62" y="444" width="1" height="1"/><rect x="62" y="446" width="1" height="1"/><rect x="62" y="448" width="1" height="1"/><rect x="62" y="450" width="1" height="1"/><rect x="62" y="452" width="1" height="1"/><rect x="62" y="454" width="1" height="1"/><rect x="62" y="456" width="1" height="1"/><rect x="62" y="458" width="1" height="1"/><rect x="62" y="460" width="1" height="1"/><rect x="62" y="462" width="1" height="1"/><rect x="62" y="464" width="1" height="1"/><rect x="62" y="466" width="1" height="1"/><rect x="62" y="468" width="1" height="1"/><rect x="62" y="470" width="1" height="1"/><rect x="62" y="472" width="1" height="1"/><rect x="62" y="474" width="1" height="1"/><rect x="62" y="476" width="1" height="1"/><rect x="62" y="478" width="1" height="1"/><rect x="62" y="480" width="1" height="1"/><rect x="62" y="482" width="1" height="1"/><rect x="62" y="484" width="1" height="1"/><rect x="62" y="486" width="1" height="1"/><rect x="62" y="488" width="1" height="1"/><rect x="62" y="490" width="1" height="1"/><rect x="62" y="492" width="1" height="1"/><rect x="62" y="494" width="1" height="1"/><rect x="62" y="496" width="1" height="1"/><rect x="62" y="498" width="1" height="1"/><rect x="62" y="500" width="1" height="1"/><rect x="62" y="502" width="1" height="1"/><rect x="62" y="504" width="1" height="1"/><rect x="62" y="506" width="1" height="1"/><rect x="62" y="508" width="1" height="1"/><rect x="62" y="510" width="1" height="1"/><rect x="62" y="512" width="1" height="1"/><rect x="62" y="514" width="1" height="1"/><rect x="62" y="516" width="1" height="1"/><rect x="62" y="518" width="1" height="1"/><rect x="62" y="520" width="1" height="1"/><rect x="62" y="522" width="1" height="1"/><rect x="62" y="524" width="1" height="1"/><rect x="62" y="526" width="1" height="1"/><rect x="62" y="528" width="1" height="1"/><rect x="62" y="530" width="1" height="1"/><rect x="62" y="532" width="1" height="1"/><rect x="62" y="534" width="1" height="1"/><rect x="62" y="536" width="1" height="1"/><rect x="62" y="538" width="1" height="1"/><rect x="62" y="540" width="1" height="1"/><rect x="62" y="542" width="1" height="1"/><rect x="62" y="544" width="1" height="1"/><rect x="62" y="546" width="1" height="1"/><rect x="62" y="548" width="1" height="1"/><rect x="62" y="550" width="1" height="1"/><rect x="62" y="552" width="1" height="1"/><rect x="62" y="554" width="1" height="1"/><rect x="62" y="556" width="1" height="1"/><rect x="62" y="558" width="1" height="1"/><rect x="62" y="560" width="1" height="1"/><rect x="62" y="562" width="1" height="1"/><rect x="62" y="564" width="1" height="1"/><rect x="62" y="566" width="1" height="1"/><rect x="62" y="568" width="1" height="1"/><rect x="62" y="570" width="1" height="1"/><rect x="62" y="572" width="1" height="1"/><rect x="62" y="574" width="1" height="1"/><rect x="62" y="576" width="1" height="1"/><rect x="62" y="578" width="1" height="1"/><rect x="62" y="580" width="1" height="1"/><rect x="62" y="582" width="1" height="1"/><rect x="62" y="584" width="1" height="1"/><rect x="62" y="586" width="1" height="1"/><rect x="62" y="588" width="1" height="1"/><rect x="62" y="590" width="1" height="1"/><rect x="62" y="592" width="1" height="1"/><rect x="62" y="594" width="1" height="1"/><rect x="62" y="596" width="1" height="1"/><rect x="62" y="598" width="1" height="1"/><rect x="62" y="600" width="1" height="1"/><rect x="62" y="602" width="1" height="1"/><rect x="62" y="604" width="1" height="1"/><rect x="62" y="606" width="1" height="1"/><rect x="62" y="608" width="1" height="1"/><rect x="62" y="610" width="1" height="1"/><rect x="62" y="612" width="1" height="1"/><rect x="62" y="614" width="1" height="1"/><rect x="62" y="616" width="1" height="1"/><rect x="62" y="618" width="1" height="1"/><rect x="62" y="620" width="1" height="1"/><rect x="62" y="622" width="1" height="1"/><rect x="62" y="624" width="1" height="1"/><rect x="62" y="626" width="1" height="1"/><rect x="62" y="628" width="1" height="1"/><rect x="62" y="630" width="1" height="1"/><rect x="62" y="632" width="1" height="1"/><rect x="62" y="634" width="1" height="1"/><rect x="62" y="636" width="1" height="1"/><rect x="62" y="638" width="1" height="1"/><rect x="62" y="640" width="1" height="1"/><rect x="62" y="642" width="1" height="1"/><rect x="62" y="644" width="1" height="1"/><rect x="62" y="646" width="1" height="1"/><rect x="62" y="648" width="1" height="1"/><rect x="62" y="650" width="1" height="1"/><rect x="62" y="652" width="1" height="1"/><rect x="62" y="654" width="1" height="1"/><rect x="62" y="656" width="1" height="1"/><rect x="62" y="658" width="1" height="1"/><rect x="62" y="660" width="1" height="1"/><rect x="62" y="662" width="1" height="1"/><rect x="62" y="664" width="1" height="1"/><rect x="62" y="666" width="1" height="1"/><rect x="62" y="668" width="1" height="1"/><rect x="62" y="670" width="1" height="1"/><rect x="81" y="228" width="1" height="1"/><rect x="81" y="230" width="1" height="1"/><rect x="81" y="232" width="1" height="1"/><rect x="81" y="234" width="1" height="1"/><rect x="81" y="236" width="1" height="1"/><rect x="81" y="238" width="1" height="1"/><rect x="81" y="240" width="1" height="1"/><rect x="81" y="242" width="1" height="1"/><rect x="81" y="244" width="1" height="1"/><rect x="81" y="246" width="1" height="1"/><rect x="81" y="248" width="1" height="1"/><rect x="81" y="250" width="1" height="1"/><rect x="81" y="252" width="1" height="1"/><rect x="81" y="254" width="1" height="1"/><rect x="81" y="256" width="1" height="1"/><rect x="81" y="258" width="1" height="1"/><rect x="81" y="260" width="1" height="1"/><rect x="81" y="262" width="1" height="1"/><rect x="81" y="264" width="1" height="1"/><rect x="81" y="266" width="1" height="1"/><rect x="81" y="268" width="1" height="1"/><rect x="81" y="270" width="1" height="1"/><rect x="81" y="272" width="1" height="1"/><rect x="81" y="274" width="1" height="1"/><rect x="81" y="276" width="1" height="1"/><rect x="81" y="278" width="1" height="1"/><rect x="81" y="280" width="1" height="1"/><rect x="81" y="282" width="1" height="1"/><rect x="81" y="284" width="1" height="1"/><rect x="81" y="286" width="1" height="1"/><rect x="81" y="288" width="1" height="1"/><rect x="81" y="290" width="1" height="1"/><rect x="81" y="292" width="1" height="1"/><rect x="81" y="294" width="1" height="1"/><rect x="81" y="296" width="1" height="1"/><rect x="81" y="298" width="1" height="1"/><rect x="81" y="300" width="1" height="1"/><rect x="81" y="302" width="1" height="1"/><rect x="81" y="304" width="1" height="1"/><rect x="81" y="306" width="1" height="1"/><rect x="81" y="308" width="1" height="1"/><rect x="81" y="310" width="1" height="1"/><rect x="81" y="312" width="1" height="1"/><rect x="81" y="314" width="1" height="1"/><rect x="81" y="316" width="1" height="1"/><rect x="81" y="318" width="1" height="1"/><rect x="81" y="320" width="1" height="1"/><rect x="81" y="322" width="1" height="1"/><rect x="81" y="324" width="1" height="1"/><rect x="81" y="326" width="1" height="1"/><rect x="81" y="328" width="1" height="1"/><rect x="81" y="330" width="1" height="1"/><rect x="81" y="332" width="1" height="1"/><rect x="81" y="334" width="1" height="1"/><rect x="81" y="336" width="1" height="1"/><rect x="81" y="338" width="1" height="1"/><rect x="81" y="340" width="1" height="1"/><rect x="81" y="342" width="1" height="1"/><rect x="81" y="344" width="1" height="1"/><rect x="81" y="346" width="1" height="1"/><rect x="81" y="348" width="1" height="1"/><rect x="81" y="350" width="1" height="1"/><rect x="81" y="352" width="1" height="1"/><rect x="81" y="354" width="1" height="1"/><rect x="81" y="356" width="1" height="1"/><rect x="81" y="358" width="1" height="1"/><rect x="81" y="360" width="1" height="1"/><rect x="81" y="362" width="1" height="1"/><rect x="81" y="364" width="1" height="1"/><rect x="81" y="366" width="1" height="1"/><rect x="81" y="368" width="1" height="1"/><rect x="81" y="370" width="1" height="1"/><rect x="81" y="372" width="1" height="1"/><rect x="81" y="374" width="1" height="1"/><rect x="81" y="376" width="1" height="1"/><rect x="81" y="378" width="1" height="1"/><rect x="81" y="380" width="1" height="1"/><rect x="81" y="382" width="1" height="1"/><rect x="81" y="384" width="1" height="1"/><rect x="81" y="386" width="1" height="1"/><rect x="81" y="388" width="1" height="1"/><rect x="81" y="390" width="1" height="1"/><rect x="81" y="392" width="1" height="1"/><rect x="81" y="394" width="1" height="1"/><rect x="81" y="396" width="1" height="1"/><rect x="81" y="398" width="1" height="1"/><rect x="81" y="400" width="1" height="1"/><rect x="81" y="402" width="1" height="1"/><rect x="81" y="404" width="1" height="1"/><rect x="81" y="406" width="1" height="1"/><rect x="81" y="408" width="1" height="1"/><rect x="81" y="410" width="1" height="1"/><rect x="81" y="412" width="1" height="1"/><rect x="81" y="414" width="1" height="1"/><rect x="81" y="416" width="1" height="1"/><rect x="81" y="418" width="1" height="1"/><rect x="81" y="420" width="1" height="1"/><rect x="81" y="422" width="1" height="1"/><rect x="81" y="424" width="1" height="1"/><rect x="81" y="426" width="1" height="1"/><rect x="81" y="428" width="1" height="1"/><rect x="81" y="430" width="1" height="1"/><rect x="81" y="432" width="1" height="1"/><rect x="81" y="434" width="1" height="1"/><rect x="81" y="436" width="1" height="1"/><rect x="81" y="438" width="1" height="1"/><rect x="81" y="440" width="1" height="1"/><rect x="81" y="442" width="1" height="1"/><rect x="81" y="444" width="1" height="1"/><rect x="81" y="446" width="1" height="1"/><rect x="81" y="448" width="1" height="1"/><rect x="81" y="450" width="1" height="1"/><rect x="81" y="452" width="1" height="1"/><rect x="81" y="454" width="1" height="1"/><rect x="81" y="456" width="1" height="1"/><rect x="81" y="458" width="1" height="1"/><rect x="81" y="460" width="1" height="1"/><rect x="81" y="462" width="1" height="1"/><rect x="81" y="464" width="1" height="1"/><rect x="81" y="466" width="1" height="1"/><rect x="81" y="468" width="1" height="1"/><rect x="81" y="470" width="1" height="1"/><rect x="81" y="472" width="1" height="1"/><rect x="81" y="474" width="1" height="1"/><rect x="81" y="476" width="1" height="1"/><rect x="81" y="478" width="1" height="1"/><rect x="81" y="480" width="1" height="1"/><rect x="81" y="482" width="1" height="1"/><rect x="81" y="484" width="1" height="1"/><rect x="81" y="486" width="1" height="1"/><rect x="81" y="488" width="1" height="1"/><rect x="81" y="490" width="1" height="1"/><rect x="81" y="492" width="1" height="1"/><rect x="81" y="494" width="1" height="1"/><rect x="81" y="496" width="1" height="1"/><rect x="81" y="498" width="1" height="1"/><rect x="81" y="500" width="1" height="1"/><rect x="81" y="502" width="1" height="1"/><rect x="81" y="504" width="1" height="1"/><rect x="81" y="506" width="1" height="1"/><rect x="81" y="508" width="1" height="1"/><rect x="81" y="510" width="1" height="1"/><rect x="81" y="512" width="1" height="1"/><rect x="81" y="514" width="1" height="1"/><rect x="81" y="516" width="1" height="1"/><rect x="81" y="518" width="1" height="1"/><rect x="81" y="520" width="1" height="1"/><rect x="81" y="522" width="1" height="1"/><rect x="81" y="524" width="1" height="1"/><rect x="81" y="526" width="1" height="1"/><rect x="81" y="528" width="1" height="1"/><rect x="81" y="530" width="1" height="1"/><rect x="81" y="532" width="1" height="1"/><rect x="81" y="534" width="1" height="1"/><rect x="81" y="536" width="1" height="1"/><rect x="81" y="538" width="1" height="1"/><rect x="81" y="540" width="1" height="1"/><rect x="81" y="542" width="1" height="1"/><rect x="81" y="544" width="1" height="1"/><rect x="81" y="546" width="1" height="1"/><rect x="81" y="548" width="1" height="1"/><rect x="81" y="550" width="1" height="1"/><rect x="81" y="552" width="1" height="1"/><rect x="81" y="554" width="1" height="1"/><rect x="81" y="556" width="1" height="1"/><rect x="81" y="558" width="1" height="1"/><rect x="81" y="560" width="1" height="1"/><rect x="81" y="562" width="1" height="1"/><rect x="81" y="564" width="1" height="1"/><rect x="81" y="566" width="1" height="1"/><rect x="81" y="568" width="1" height="1"/><rect x="81" y="570" width="1" height="1"/><rect x="81" y="572" width="1" height="1"/><rect x="81" y="574" width="1" height="1"/><rect x="81" y="576" width="1" height="1"/><rect x="81" y="578" width="1" height="1"/><rect x="81" y="580" width="1" height="1"/><rect x="81" y="582" width="1" height="1"/><rect x="81" y="584" width="1" height="1"/><rect x="81" y="586" width="1" height="1"/><rect x="81" y="588" width="1" height="1"/><rect x="81" y="590" width="1" height="1"/><rect x="81" y="592" width="1" height="1"/><rect x="81" y="594" width="1" height="1"/><rect x="81" y="596" width="1" height="1"/><rect x="81" y="598" width="1" height="1"/><rect x="81" y="600" width="1" height="1"/><rect x="81" y="602" width="1" height="1"/><rect x="81" y="604" width="1" height="1"/><rect x="81" y="606" width="1" height="1"/><rect x="81" y="608" width="1" height="1"/><rect x="81" y="610" width="1" height="1"/><rect x="81" y="612" width="1" height="1"/><rect x="81" y="614" width="1" height="1"/><rect x="81" y="616" width="1" height="1"/><rect x="81" y="618" width="1" height="1"/><rect x="81" y="620" width="1" height="1"/><rect x="81" y="622" width="1" height="1"/><rect x="81" y="624" width="1" height="1"/><rect x="81" y="626" width="1" height="1"/><rect x="81" y="628" width="1" height="1"/><rect x="81" y="630" width="1" height="1"/><rect x="81" y="632" width="1" height="1"/><rect x="81" y="634" width="1" height="1"/><rect x="81" y="636" width="1" height="1"/><rect x="81" y="638" width="1" height="1"/><rect x="81" y="640" width="1" height="1"/><rect x="81" y="642" width="1" height="1"/><rect x="81" y="644" width="1" height="1"/><rect x="81" y="646" width="1" height="1"/><rect x="81" y="648" width="1" height="1"/><rect x="81" y="650" width="1" height="1"/><rect x="81" y="652" width="1" height="1"/><rect x="81" y="654" width="1" height="1"/><rect x="81" y="656" width="1" height="1"/><rect x="81" y="658" width="1" height="1"/><rect x="81" y="660" width="1" height="1"/><rect x="81" y="662" width="1" height="1"/><rect x="81" y="664" width="1" height="1"/><rect x="81" y="666" width="1" height="1"/><rect x="81" y="668" width="1" height="1"/><rect x="81" y="670" width="1" height="1"/><rect x="100" y="244" width="1" height="1"/><rect x="100" y="246" width="1" height="1"/><rect x="100" y="248" width="1" height="1"/><rect x="100" y="250" width="1" height="1"/><rect x="100" y="252" width="1" height="1"/><rect x="100" y="254" width="1" height="1"/><rect x="100" y="256" width="1" height="1"/><rect x="100" y="258" width="1" height="1"/><rect x="100" y="260" width="1" height="1"/><rect x="100" y="262" width="1" height="1"/><rect x="100" y="264" width="1" height="1"/><rect x="100" y="266" width="1" height="1"/><rect x="100" y="268" width="1" height="1"/><rect x="100" y="270" width="1" height="1"/><rect x="100" y="272" width="1" height="1"/><rect x="100" y="274" width="1" height="1"/><rect x="100" y="276" width="1" height="1"/><rect x="100" y="278" width="1" height="1"/><rect x="100" y="280" width="1" height="1"/><rect x="100" y="282" width="1" height="1"/><rect x="100" y="284" width="1" height="1"/><rect x="100" y="286" width="1" height="1"/><rect x="100" y="288" width="1" height="1"/><rect x="100" y="290" width="1" height="1"/><rect x="100" y="292" width="1" height="1"/><rect x="100" y="294" width="1" height="1"/><rect x="100" y="296" width="1" height="1"/><rect x="100" y="298" width="1" height="1"/><rect x="100" y="300" width="1" height="1"/><rect x="100" y="302" width="1" height="1"/><rect x="100" y="304" width="1" height="1"/><rect x="100" y="306" width="1" height="1"/><rect x="100" y="308" width="1" height="1"/><rect x="100" y="310" width="1" height="1"/><rect x="100" y="312" width="1" height="1"/><rect x="100" y="314" width="1" height="1"/><rect x="100" y="316" width="1" height="1"/><rect x="100" y="318" width="1" height="1"/><rect x="100" y="320" width="1" height="1"/><rect x="100" y="322" width="1" height="1"/><rect x="100" y="324" width="1" height="1"/><rect x="100" y="326" width="1" height="1"/><rect x="100" y="328" width="1" height="1"/><rect x="100" y="330" width="1" height="1"/><rect x="100" y="332" width="1" height="1"/><rect x="100" y="334" width="1" height="1"/><rect x="100" y="336" width="1" height="1"/><rect x="100" y="338" width="1" height="1"/><rect x="100" y="340" width="1" height="1"/><rect x="100" y="342" width="1" height="1"/><rect x="100" y="344" width="1" height="1"/><rect x="100" y="346" width="1" height="1"/><rect x="100" y="348" width="1" height="1"/><rect x="100" y="350" width="1" height="1"/><rect x="100" y="352" width="1" height="1"/><rect x="100" y="354" width="1" height="1"/><rect x="100" y="356" width="1" height="1"/><rect x="100" y="358" width="1" height="1"/><rect x="100" y="360" width="1" height="1"/><rect x="100" y="362" width="1" height="1"/><rect x="100" y="364" width="1" height="1"/><rect x="100" y="366" width="1" height="1"/><rect x="100" y="368" width="1" height="1"/><rect x="100" y="370" width="1" height="1"/><rect x="100" y="372" width="1" height="1"/><rect x="100" y="374" width="1" height="1"/><rect x="100" y="376" width="1" height="1"/><rect x="100" y="378" width="1" height="1"/><rect x="100" y="380" width="1" height="1"/><rect x="100" y="382" width="1" height="1"/><rect x="100" y="384" width="1" height="1"/><rect x="100" y="386" width="1" height="1"/><rect x="100" y="388" width="1" height="1"/><rect x="100" y="390" width="1" height="1"/><rect x="100" y="392" width="1" height="1"/><rect x="100" y="394" width="1" height="1"/><rect x="100" y="396" width="1" height="1"/><rect x="100" y="398" width="1" height="1"/><rect x="100" y="400" width="1" height="1"/><rect x="100" y="402" width="1" height="1"/><rect x="100" y="404" width="1" height="1"/><rect x="100" y="406" width="1" height="1"/><rect x="100" y="408" width="1" height="1"/><rect x="100" y="410" width="1" height="1"/><rect x="100" y="412" width="1" height="1"/><rect x="100" y="436" width="1" height="1"/><rect x="100" y="438" width="1" height="1"/><rect x="100" y="440" width="1" height="1"/><rect x="100" y="442" width="1" height="1"/><rect x="100" y="444" width="1" height="1"/><rect x="100" y="446" width="1" height="1"/><rect x="100" y="448" width="1" height="1"/><rect x="100" y="450" width="1" height="1"/><rect x="100" y="452" width="1" height="1"/><rect x="100" y="454" width="1" height="1"/><rect x="100" y="456" width="1" height="1"/><rect x="100" y="458" width="1" height="1"/><rect x="100" y="460" width="1" height="1"/><rect x="100" y="462" width="1" height="1"/><rect x="100" y="464" width="1" height="1"/><rect x="100" y="466" width="1" height="1"/><rect x="100" y="468" width="1" height="1"/><rect x="100" y="470" width="1" height="1"/><rect x="100" y="472" width="1" height="1"/><rect x="100" y="474" width="1" height="1"/><rect x="100" y="476" width="1" height="1"/><rect x="100" y="478" width="1" height="1"/><rect x="100" y="480" width="1" height="1"/><rect x="100" y="482" width="1" height="1"/><rect x="100" y="484" width="1" height="1"/><rect x="100" y="486" width="1" height="1"/><rect x="100" y="488" width="1" height="1"/><rect x="100" y="490" width="1" height="1"/><rect x="100" y="492" width="1" height="1"/><rect x="100" y="494" width="1" height="1"/><rect x="100" y="496" width="1" height="1"/><rect x="100" y="498" width="1" height="1"/><rect x="100" y="500" width="1" height="1"/><rect x="100" y="502" width="1" height="1"/><rect x="100" y="504" width="1" height="1"/><rect x="100" y="506" width="1" height="1"/><rect x="100" y="508" width="1" height="1"/><rect x="100" y="510" width="1" height="1"/><rect x="100" y="512" width="1" height="1"/><rect x="100" y="514" width="1" height="1"/><rect x="100" y="516" width="1" height="1"/><rect x="100" y="518" width="1" height="1"/><rect x="100" y="520" width="1" height="1"/><rect x="100" y="522" width="1" height="1"/><rect x="100" y="524" width="1" height="1"/><rect x="100" y="526" width="1" height="1"/><rect x="100" y="528" width="1" height="1"/><rect x="100" y="530" width="1" height="1"/><rect x="100" y="532" width="1" height="1"/><rect x="100" y="534" width="1" height="1"/><rect x="100" y="536" width="1" height="1"/><rect x="100" y="538" width="1" height="1"/><rect x="100" y="540" width="1" height="1"/><rect x="100" y="542" width="1" height="1"/><rect x="100" y="544" width="1" height="1"/><rect x="100" y="546" width="1" height="1"/><rect x="100" y="548" width="1" height="1"/><rect x="100" y="550" width="1" height="1"/><rect x="100" y="552" width="1" height="1"/><rect x="100" y="554" width="1" height="1"/><rect x="100" y="556" width="1" height="1"/><rect x="100" y="558" width="1" height="1"/><rect x="100" y="560" width="1" height="1"/><rect x="100" y="562" width="1" height="1"/><rect x="100" y="564" width="1" height="1"/><rect x="100" y="566" width="1" height="1"/><rect x="100" y="568" width="1" height="1"/><rect x="100" y="570" width="1" height="1"/><rect x="100" y="572" width="1" height="1"/><rect x="100" y="574" width="1" height="1"/><rect x="100" y="576" width="1" height="1"/><rect x="100" y="578" width="1" height="1"/><rect x="100" y="580" width="1" height="1"/><rect x="100" y="582" width="1" height="1"/><rect x="100" y="584" width="1" height="1"/><rect x="100" y="586" width="1" height="1"/><rect x="100" y="588" width="1" height="1"/><rect x="100" y="590" width="1" height="1"/><rect x="100" y="592" width="1" height="1"/><rect x="100" y="594" width="1" height="1"/><rect x="100" y="596" width="1" height="1"/><rect x="100" y="598" width="1" height="1"/><rect x="100" y="600" width="1" height="1"/><rect x="100" y="602" width="1" height="1"/><rect x="100" y="604" width="1" height="1"/><rect x="100" y="606" width="1" height="1"/><rect x="100" y="608" width="1" height="1"/><rect x="100" y="610" width="1" height="1"/><rect x="100" y="612" width="1" height="1"/><rect x="100" y="614" width="1" height="1"/><rect x="100" y="616" width="1" height="1"/><rect x="100" y="618" width="1" height="1"/><rect x="100" y="620" width="1" height="1"/><rect x="100" y="622" width="1" height="1"/><rect x="100" y="624" width="1" height="1"/><rect x="100" y="626" width="1" height="1"/><rect x="100" y="628" width="1" height="1"/><rect x="100" y="630" width="1" height="1"/><rect x="100" y="632" width="1" height="1"/><rect x="100" y="634" width="1" height="1"/><rect x="100" y="636" width="1" height="1"/><rect x="100" y="638" width="1" height="1"/><rect x="100" y="640" width="1" height="1"/><rect x="100" y="642" width="1" height="1"/><rect x="100" y="644" width="1" height="1"/><rect x="100" y="646" width="1" height="1"/><rect x="100" y="648" width="1" height="1"/><rect x="100" y="650" width="1" height="1"/><rect x="100" y="652" width="1" height="1"/><rect x="100" y="654" width="1" height="1"/><rect x="100" y="656" width="1" height="1"/><rect x="100" y="658" width="1" height="1"/><rect x="100" y="660" width="1" height="1"/><rect x="100" y="662" width="1" height="1"/><rect x="100" y="664" width="1" height="1"/><rect x="100" y="666" width="1" height="1"/><rect x="100" y="668" width="1" height="1"/><rect x="100" y="670" width="1" height="1"/><rect x="119" y="308" width="1" height="1"/><rect x="119" y="310" width="1" height="1"/><rect x="119" y="312" width="1" height="1"/><rect x="119" y="314" width="1" height="1"/><rect x="119" y="316" width="1" height="1"/><rect x="119" y="452" width="1" height="1"/><rect x="119" y="454" width="1" height="1"/><rect x="119" y="456" width="1" height="1"/><rect x="119" y="458" width="1" height="1"/><rect x="119" y="460" width="1" height="1"/><rect x="119" y="462" width="1" height="1"/><rect x="119" y="464" width="1" height="1"/><rect x="119" y="466" width="1" height="1"/><rect x="119" y="468" width="1" height="1"/><rect x="119" y="470" width="1" height="1"/><rect x="119" y="472" width="1" height="1"/><rect x="119" y="474" width="1" height="1"/><rect x="119" y="476" width="1" height="1"/><rect x="119" y="478" width="1" height="1"/><rect x="119" y="480" width="1" height="1"/><rect x="119" y="482" width="1" height="1"/><rect x="119" y="484" width="1" height="1"/><rect x="119" y="486" width="1" height="1"/><rect x="119" y="488" width="1" height="1"/><rect x="119" y="490" width="1" height="1"/><rect x="119" y="492" width="1" height="1"/><rect x="119" y="494" width="1" height="1"/><rect x="119" y="496" width="1" height="1"/><rect x="119" y="498" width="1" height="1"/><rect x="119" y="500" width="1" height="1"/><rect x="119" y="502" width="1" height="1"/><rect x="119" y="504" width="1" height="1"/><rect x="119" y="506" width="1" height="1"/><rect x="119" y="508" width="1" height="1"/><rect x="119" y="510" width="1" height="1"/><rect x="119" y="512" width="1" height="1"/><rect x="119" y="514" width="1" height="1"/><rect x="119" y="516" width="1" height="1"/><rect x="119" y="518" width="1" height="1"/><rect x="119" y="520" width="1" height="1"/><rect x="119" y="522" width="1" height="1"/><rect x="119" y="524" width="1" height="1"/><rect x="119" y="526" width="1" height="1"/><rect x="119" y="528" width="1" height="1"/><rect x="119" y="530" width="1" height="1"/><rect x="119" y="532" width="1" height="1"/><rect x="119" y="534" width="1" height="1"/><rect x="119" y="536" width="1" height="1"/><rect x="119" y="538" width="1" height="1"/><rect x="119" y="540" width="1" height="1"/><rect x="119" y="542" width="1" height="1"/><rect x="119" y="544" width="1" height="1"/><rect x="119" y="546" width="1" height="1"/><rect x="119" y="548" width="1" height="1"/><rect x="119" y="550" width="1" height="1"/><rect x="119" y="552" width="1" height="1"/><rect x="119" y="554" width="1" height="1"/><rect x="119" y="556" width="1" height="1"/><rect x="119" y="558" width="1" height="1"/><rect x="119" y="560" width="1" height="1"/><rect x="119" y="562" width="1" height="1"/><rect x="119" y="564" width="1" height="1"/><rect x="119" y="566" width="1" height="1"/><rect x="119" y="568" width="1" height="1"/><rect x="119" y="570" width="1" height="1"/><rect x="119" y="572" width="1" height="1"/><rect x="119" y="574" width="1" height="1"/><rect x="119" y="576" width="1" height="1"/><rect x="119" y="578" width="1" height="1"/><rect x="119" y="580" width="1" height="1"/><rect x="119" y="582" width="1" height="1"/><rect x="119" y="584" width="1" height="1"/><rect x="119" y="586" width="1" height="1"/><rect x="119" y="588" width="1" height="1"/><rect x="119" y="590" width="1" height="1"/><rect x="119" y="592" width="1" height="1"/><rect x="119" y="594" width="1" height="1"/><rect x="119" y="596" width="1" height="1"/><rect x="119" y="598" width="1" height="1"/><rect x="119" y="600" width="1" height="1"/><rect x="119" y="602" width="1" height="1"/><rect x="119" y="604" width="1" height="1"/><rect x="119" y="606" width="1" height="1"/><rect x="119" y="608" width="1" height="1"/><rect x="119" y="610" width="1" height="1"/><rect x="119" y="612" width="1" height="1"/><rect x="119" y="614" width="1" height="1"/><rect x="119" y="616" width="1" height="1"/><rect x="119" y="618" width="1" height="1"/><rect x="119" y="620" width="1" height="1"/><rect x="119" y="622" width="1" height="1"/><rect x="119" y="624" width="1" height="1"/><rect x="119" y="626" width="1" height="1"/><rect x="119" y="628" width="1" height="1"/><rect x="119" y="630" width="1" height="1"/><rect x="119" y="632" width="1" height="1"/><rect x="119" y="634" width="1" height="1"/><rect x="119" y="636" width="1" height="1"/><rect x="119" y="638" width="1" height="1"/><rect x="119" y="640" width="1" height="1"/><rect x="119" y="642" width="1" height="1"/><rect x="119" y="644" width="1" height="1"/><rect x="119" y="646" width="1" height="1"/><rect x="119" y="648" width="1" height="1"/><rect x="119" y="650" width="1" height="1"/><rect x="119" y="652" width="1" height="1"/><rect x="119" y="654" width="1" height="1"/><rect x="119" y="656" width="1" height="1"/><rect x="119" y="658" width="1" height="1"/><rect x="119" y="660" width="1" height="1"/><rect x="119" y="662" width="1" height="1"/><rect x="119" y="664" width="1" height="1"/><rect x="119" y="666" width="1" height="1"/><rect x="119" y="668" width="1" height="1"/><rect x="119" y="670" width="1" height="1"/><rect x="49" y="204" width="1" height="1"/><rect x="51" y="204" width="1" height="1"/><rect x="68" y="220" width="1" height="1"/><rect x="70" y="220" width="1" height="1"/><rect x="87" y="236" width="1" height="1"/><rect x="89" y="236" width="1" height="1"/><rect x="102" y="252" width="1" height="1"/><rect x="104" y="252" width="1" height="1"/><rect x="106" y="252" width="1" height="1"/><rect x="108" y="252" width="1" height="1"/><rect x="102" y="268" width="1" height="1"/><rect x="104" y="268" width="1" height="1"/><rect x="106" y="268" width="1" height="1"/><rect x="108" y="268" width="1" height="1"/><rect x="102" y="284" width="1" height="1"/><rect x="104" y="284" width="1" height="1"/><rect x="106" y="284" width="1" height="1"/><rect x="108" y="284" width="1" height="1"/><rect x="106" y="300" width="1" height="1"/><rect x="108" y="300" width="1" height="1"/><rect x="121" y="316" width="1" height="1"/><rect x="123" y="316" width="1" height="1"/><rect x="125" y="316" width="1" height="1"/><rect x="127" y="316" width="1" height="1"/><rect x="102" y="332" width="1" height="1"/><rect x="104" y="332" width="1" height="1"/><rect x="106" y="332" width="1" height="1"/><rect x="108" y="332" width="1" height="1"/><rect x="102" y="348" width="1" height="1"/><rect x="104" y="348" width="1" height="1"/><rect x="106" y="348" width="1" height="1"/><rect x="108" y="348" width="1" height="1"/><rect x="102" y="364" width="1" height="1"/><rect x="104" y="364" width="1" height="1"/><rect x="106" y="364" width="1" height="1"/><rect x="108" y="364" width="1" height="1"/><rect x="102" y="380" width="1" height="1"/><rect x="104" y="380" width="1" height="1"/><rect x="106" y="380" width="1" height="1"/><rect x="108" y="380" width="1" height="1"/><rect x="102" y="396" width="1" height="1"/><rect x="104" y="396" width="1" height="1"/><rect x="106" y="396" width="1" height="1"/><rect x="108" y="396" width="1" height="1"/><rect x="102" y="412" width="1" height="1"/><rect x="104" y="412" width="1" height="1"/><rect x="106" y="412" width="1" height="1"/><rect x="108" y="412" width="1" height="1"/><rect x="87" y="428" width="1" height="1"/><rect x="89" y="428" width="1" height="1"/><rect x="106" y="444" width="1" height="1"/><rect x="108" y="444" width="1" height="1"/><rect x="121" y="460" width="1" height="1"/><rect x="123" y="460" width="1" height="1"/><rect x="125" y="460" width="1" height="1"/><rect x="127" y="460" width="1" height="1"/><rect x="121" y="476" width="1" height="1"/><rect x="123" y="476" width="1" height="1"/><rect x="125" y="476" width="1" height="1"/><rect x="127" y="476" width="1" height="1"/><rect x="121" y="492" width="1" height="1"/><rect x="123" y="492" width="1" height="1"/><rect x="125" y="492" width="1" height="1"/><rect x="127" y="492" width="1" height="1"/><rect x="121" y="508" width="1" height="1"/><rect x="123" y="508" width="1" height="1"/><rect x="125" y="508" width="1" height="1"/><rect x="127" y="508" width="1" height="1"/><rect x="121" y="524" width="1" height="1"/><rect x="123" y="524" width="1" height="1"/><rect x="125" y="524" width="1" height="1"/><rect x="127" y="524" width="1" height="1"/><rect x="121" y="540" width="1" height="1"/><rect x="123" y="540" width="1" height="1"/><rect x="125" y="540" width="1" height="1"/><rect x="127" y="540" width="1" height="1"/><rect x="121" y="556" width="1" height="1"/><rect x="123" y="556" width="1" height="1"/><rect x="125" y="556" width="1" height="1"/><rect x="127" y="556" width="1" height="1"/><rect x="121" y="572" width="1" height="1"/><rect x="123" y="572" width="1" height="1"/><rect x="125" y="572" width="1" height="1"/><rect x="127" y="572" width="1" height="1"/><rect x="121" y="588" width="1" height="1"/><rect x="123" y="588" width="1" height="1"/><rect x="125" y="588" width="1" height="1"/><rect x="127" y="588" width="1" height="1"/><rect x="121" y="604" width="1" height="1"/><rect x="123" y="604" width="1" height="1"/><rect x="125" y="604" width="1" height="1"/><rect x="127" y="604" width="1" height="1"/><rect x="121" y="620" width="1" height="1"/><rect x="123" y="620" width="1" height="1"/><rect x="125" y="620" width="1" height="1"/><rect x="127" y="620" width="1" height="1"/><rect x="121" y="636" width="1" height="1"/><rect x="123" y="636" width="1" height="1"/><rect x="125" y="636" width="1" height="1"/><rect x="127" y="636" width="1" height="1"/><rect x="121" y="652" width="1" height="1"/><rect x="123" y="652" width="1" height="1"/><rect x="125" y="652" width="1" height="1"/><rect x="127" y="652" width="1" height="1"/><rect x="125" y="668" width="1" height="1"/><rect x="127" y="668" width="1" height="1"/></g></svg>
<svg style="position:absolute;left:6px;top:4px" width="9" height="9" shape-rendering="crispEdges"><rect x="0.5" y="0.5" width="8" height="8" fill="#fff" stroke="#a0a0a0"/><rect x="2" y="4" width="5" height="1" fill="#000"/></svg>
<svg style="position:absolute;left:20px;top:0px" width="17" height="17" viewBox="0 0 17 17"><use href="#ic_cam"/></svg>
<svg style="position:absolute;left:25px;top:20px" width="9" height="9" shape-rendering="crispEdges"><rect x="0.5" y="0.5" width="8" height="8" fill="#fff" stroke="#a0a0a0"/><rect x="2" y="4" width="5" height="1" fill="#000"/></svg>
<svg style="position:absolute;left:39px;top:16px" width="17" height="17" viewBox="0 0 17 17"><use href="#ic_folder"/></svg>
<svg style="position:absolute;left:44px;top:36px" width="9" height="9" shape-rendering="crispEdges"><rect x="0.5" y="0.5" width="8" height="8" fill="#fff" stroke="#a0a0a0"/><rect x="2" y="4" width="5" height="1" fill="#000"/></svg>
<svg style="position:absolute;left:58px;top:32px" width="17" height="17" viewBox="0 0 17 17"><use href="#ic_doc"/></svg>
<svg style="position:absolute;left:77px;top:48px" width="17" height="17" viewBox="0 0 17 17"><use href="#ic_n234"/></svg>
<svg style="position:absolute;left:77px;top:64px" width="17" height="17" viewBox="0 0 17 17"><use href="#ic_n234"/></svg>
<svg style="position:absolute;left:77px;top:80px" width="17" height="17" viewBox="0 0 17 17"><use href="#ic_n234"/></svg>
<svg style="position:absolute;left:63px;top:100px" width="9" height="9" shape-rendering="crispEdges"><rect x="0.5" y="0.5" width="8" height="8" fill="#fff" stroke="#a0a0a0"/><rect x="2" y="4" width="5" height="1" fill="#000"/></svg>
<svg style="position:absolute;left:77px;top:96px" width="17" height="17" viewBox="0 0 17 17"><use href="#ic_bin"/></svg>
<svg style="position:absolute;left:96px;top:112px" width="17" height="17" viewBox="0 0 17 17"><use href="#ic_info"/></svg>
<svg style="position:absolute;left:77px;top:128px" width="17" height="17" viewBox="0 0 17 17"><use href="#ic_n234"/></svg>
<svg style="position:absolute;left:77px;top:144px" width="17" height="17" viewBox="0 0 17 17"><use href="#ic_n234"/></svg>
<svg style="position:absolute;left:77px;top:160px" width="17" height="17" viewBox="0 0 17 17"><use href="#ic_n234"/></svg>
<svg style="position:absolute;left:77px;top:176px" width="17" height="17" viewBox="0 0 17 17"><use href="#ic_n234"/></svg>
<svg style="position:absolute;left:77px;top:192px" width="17" height="17" viewBox="0 0 17 17"><use href="#ic_n234"/></svg>
<svg style="position:absolute;left:77px;top:208px" width="17" height="17" viewBox="0 0 17 17"><use href="#ic_n234"/></svg>
<svg style="position:absolute;left:44px;top:228px" width="9" height="9" shape-rendering="crispEdges"><rect x="0.5" y="0.5" width="8" height="8" fill="#fff" stroke="#a0a0a0"/><rect x="2" y="4" width="5" height="1" fill="#000"/></svg>
<svg style="position:absolute;left:58px;top:224px" width="17" height="17" viewBox="0 0 17 17"><use href="#ic_folder"/></svg>
<svg style="position:absolute;left:63px;top:244px" width="9" height="9" shape-rendering="crispEdges"><rect x="0.5" y="0.5" width="8" height="8" fill="#fff" stroke="#a0a0a0"/><rect x="2" y="4" width="5" height="1" fill="#000"/></svg>
<svg style="position:absolute;left:77px;top:240px" width="17" height="17" viewBox="0 0 17 17"><use href="#ic_film"/></svg>
<svg style="position:absolute;left:96px;top:256px" width="17" height="17" viewBox="0 0 17 17"><use href="#ic_fcc"/></svg>
<svg style="position:absolute;left:96px;top:272px" width="17" height="17" viewBox="0 0 17 17"><use href="#ic_fcc"/></svg>
<svg style="position:absolute;left:96px;top:288px" width="17" height="17" viewBox="0 0 17 17"><use href="#ic_bin"/></svg>
<svg style="position:absolute;left:96px;top:304px" width="17" height="17" viewBox="0 0 17 17"><use href="#ic_n234"/></svg>
<svg style="position:absolute;left:96px;top:320px" width="17" height="17" viewBox="0 0 17 17"><use href="#ic_n234"/></svg>
<svg style="position:absolute;left:96px;top:336px" width="17" height="17" viewBox="0 0 17 17"><use href="#ic_n234"/></svg>
<svg style="position:absolute;left:96px;top:352px" width="17" height="17" viewBox="0 0 17 17"><use href="#ic_n234"/></svg>
<svg style="position:absolute;left:96px;top:368px" width="17" height="17" viewBox="0 0 17 17"><use href="#ic_n234"/></svg>
<svg style="position:absolute;left:96px;top:384px" width="17" height="17" viewBox="0 0 17 17"><use href="#ic_n234"/></svg>
<svg style="position:absolute;left:96px;top:400px" width="17" height="17" viewBox="0 0 17 17"><use href="#ic_n234"/></svg>
<svg style="position:absolute;left:96px;top:416px" width="17" height="17" viewBox="0 0 17 17"><use href="#ic_n234"/></svg>
<svg style="position:absolute;left:96px;top:432px" width="17" height="17" viewBox="0 0 17 17"><use href="#ic_n234"/></svg>
<svg style="position:absolute;left:96px;top:448px" width="17" height="17" viewBox="0 0 17 17"><use href="#ic_n234"/></svg>
<svg style="position:absolute;left:82px;top:468px" width="9" height="9" shape-rendering="crispEdges"><rect x="0.5" y="0.5" width="8" height="8" fill="#fff" stroke="#a0a0a0"/><rect x="2" y="4" width="5" height="1" fill="#000"/></svg>
<svg style="position:absolute;left:96px;top:464px" width="17" height="17" viewBox="0 0 17 17"><use href="#ic_folder"/></svg>
</div>
<div style="position:absolute;left:74.10px;top:194px;font:12px/20px 'Liberation Sans';white-space:pre;will-change:transform;transform:scaleX(0.9019);transform-origin:0 0;color:#000;">[RIFF AVI 25709108]: Audio/Video Interleaved File</div>
<div style="position:absolute;left:93.11px;top:210px;font:12px/20px 'Liberation Sans';white-space:pre;will-change:transform;transform:scaleX(0.8858);transform-origin:0 0;color:#000;">[LIST hdrl 4588]: Format Definition Chunk</div>
<div style="position:absolute;left:112.09px;top:226px;font:12px/20px 'Liberation Sans';white-space:pre;will-change:transform;transform:scaleX(0.9071);transform-origin:0 0;color:#000;">[avih 56]: Main AVI Header</div>
<div style="position:absolute;left:131.12px;top:242px;font:12px/20px 'Liberation Sans';white-space:pre;will-change:transform;transform:scaleX(0.8816);transform-origin:0 0;color:#000;">[dwMicroSecPerFrame]: Microseconds Per Frame: 33366</div>
<div style="position:absolute;left:131.12px;top:258px;font:12px/20px 'Liberation Sans';white-space:pre;will-change:transform;transform:scaleX(0.8833);transform-origin:0 0;color:#000;">[dwMaxBytesPerSec]: Maximum Bytes Per Second: 770503</div>
<div style="position:absolute;left:131.13px;top:274px;font:12px/20px 'Liberation Sans';white-space:pre;will-change:transform;transform:scaleX(0.8720);transform-origin:0 0;color:#000;">[dwPaddingGranularity]: Padding Granularity (bytes): 0</div>
<div style="position:absolute;left:131.11px;top:290px;font:12px/20px 'Liberation Sans';white-space:pre;will-change:transform;transform:scaleX(0.8896);transform-origin:0 0;color:#000;">[dwFlags]: Flags 0x00000010</div>
<div style="position:absolute;left:150.10px;top:306px;font:12px/20px 'Liberation Sans';white-space:pre;will-change:transform;transform:scaleX(0.9039);transform-origin:0 0;color:#000;">[AVIF_HASINDEX]: AVI file has 'idx1' chunk</div>
<div style="position:absolute;left:131.12px;top:322px;font:12px/20px 'Liberation Sans';white-space:pre;will-change:transform;transform:scaleX(0.8816);transform-origin:0 0;color:#000;">[dwTotalFrames]: Number Of Frames: 1000</div>
<div style="position:absolute;left:131.14px;top:338px;font:12px/20px 'Liberation Sans';white-space:pre;will-change:transform;transform:scaleX(0.8644);transform-origin:0 0;color:#000;">[dwInitialFrames]: Numer Of Initial Frames: 0</div>
<div style="position:absolute;left:131.13px;top:354px;font:12px/20px 'Liberation Sans';white-space:pre;will-change:transform;transform:scaleX(0.8691);transform-origin:0 0;color:#000;">[dwStreams]: Number Of Streams: 1</div>
<div style="position:absolute;left:131.12px;top:370px;font:12px/20px 'Liberation Sans';white-space:pre;will-change:transform;transform:scaleX(0.8842);transform-origin:0 0;color:#000;">[dwSuggestedBufferSize]: Suggested Buffer Size (bytes): 0</div>
<div style="position:absolute;left:131.11px;top:386px;font:12px/20px 'Liberation Sans';white-space:pre;will-change:transform;transform:scaleX(0.8912);transform-origin:0 0;color:#000;">[dwWidth]: Image Width (pixels): 640</div>
<div style="position:absolute;left:131.11px;top:402px;font:12px/20px 'Liberation Sans';white-space:pre;will-change:transform;transform:scaleX(0.8856);transform-origin:0 0;color:#000;">[dwHeight]: Image Height (pixels): 480</div>
<div style="position:absolute;left:112.12px;top:418px;font:12px/20px 'Liberation Sans';white-space:pre;will-change:transform;transform:scaleX(0.8794);transform-origin:0 0;color:#000;">[LIST strl 4244]: Stream Format Definition Chunk</div>
<div style="position:absolute;left:131.12px;top:434px;font:12px/20px 'Liberation Sans';white-space:pre;will-change:transform;transform:scaleX(0.8769);transform-origin:0 0;color:#000;">[strh 56]: Stream Header</div>
<div style="position:absolute;left:150.09px;top:450px;font:12px/20px 'Liberation Sans';white-space:pre;will-change:transform;transform:scaleX(0.9148);transform-origin:0 0;color:#000;">[fccType]: Type: vids (Video Data)</div>
<div style="position:absolute;left:150.11px;top:466px;font:12px/20px 'Liberation Sans';white-space:pre;will-change:transform;transform:scaleX(0.8886);transform-origin:0 0;color:#000;">[fccHandler]: Handler: ffds (FFDShow supported 'ffds' &lt;0x73646666&gt;)</div>
<div style="position:absolute;left:150.11px;top:482px;font:12px/20px 'Liberation Sans';white-space:pre;will-change:transform;transform:scaleX(0.8896);transform-origin:0 0;color:#000;">[dwFlags]: Flags 0x00000000</div>
<div style="position:absolute;left:150.14px;top:498px;font:12px/20px 'Liberation Sans';white-space:pre;will-change:transform;transform:scaleX(0.8600);transform-origin:0 0;color:#000;">[wPriority]: Stream Priority: 0</div>
<div style="position:absolute;left:150.10px;top:514px;font:12px/20px 'Liberation Sans';white-space:pre;will-change:transform;transform:scaleX(0.8981);transform-origin:0 0;color:#000;">[wLanguage]: Language: 0 (Undefined)</div>
<div style="position:absolute;left:150.14px;top:530px;font:12px/20px 'Liberation Sans';white-space:pre;will-change:transform;transform:scaleX(0.8644);transform-origin:0 0;color:#000;">[dwInitialFrames]: Numer Of Initial Frames: 0</div>
<div style="position:absolute;left:150.11px;top:546px;font:12px/20px 'Liberation Sans';white-space:pre;will-change:transform;transform:scaleX(0.8889);transform-origin:0 0;color:#000;">[dwScale]: Stream Scale: 1001</div>
<div style="position:absolute;left:150.09px;top:562px;font:12px/20px 'Liberation Sans';white-space:pre;will-change:transform;transform:scaleX(0.9057);transform-origin:0 0;color:#000;">[dwRate]: Stream Rate: 30000</div>
<div style="position:absolute;left:150.11px;top:578px;font:12px/20px 'Liberation Sans';white-space:pre;will-change:transform;transform:scaleX(0.8864);transform-origin:0 0;color:#000;">[dwStart]: Stream Start: 0</div>
<div style="position:absolute;left:150.11px;top:594px;font:12px/20px 'Liberation Sans';white-space:pre;will-change:transform;transform:scaleX(0.8913);transform-origin:0 0;color:#000;">[dwLength]: Stream Duration: 1000</div>
<div style="position:absolute;left:150.12px;top:610px;font:12px/20px 'Liberation Sans';white-space:pre;will-change:transform;transform:scaleX(0.8846);transform-origin:0 0;color:#000;">[dwSuggestedBufferSize]: Suggested Buffer Size (bytes): 28033</div>
<div style="position:absolute;left:150.12px;top:626px;font:12px/20px 'Liberation Sans';white-space:pre;will-change:transform;transform:scaleX(0.8782);transform-origin:0 0;color:#000;">[dwQuality]: Stream Quality (1-10000): 10000</div>
<div style="position:absolute;left:150.12px;top:642px;font:12px/20px 'Liberation Sans';white-space:pre;will-change:transform;transform:scaleX(0.8772);transform-origin:0 0;color:#000;">[dwSampleSize]: Sample Size: 0</div>
<div style="position:absolute;left:150.14px;top:658px;font:12px/20px 'Liberation Sans';white-space:pre;will-change:transform;transform:scaleX(0.8629);transform-origin:0 0;color:#000;">[rcFrame]: Frame Size Of Stream</div>
<div style="position:absolute;left:1px;top:670px;width:723px;height:25px;background:#f0f0f0;"></div>
<div style="position:absolute;left:33px;top:670px;width:687px;height:1px;background:#fafafa;"></div>
<div style="position:absolute;left:33px;top:671px;width:687px;height:1px;background:#e3e3e3;"></div>
<div style="position:absolute;left:1px;top:672px;width:723px;height:1px;background:#a0a0a0;"></div>
<div style="position:absolute;left:1px;top:673px;width:723px;height:1px;background:#696969;"></div>
<div style="position:absolute;left:723px;top:660px;width:1px;height:14px;background:#696969;"></div>
<div style="position:absolute;left:722px;top:660px;width:1px;height:13px;background:#a0a0a0;"></div>
<div style="position:absolute;left:1px;top:674px;width:723px;height:1px;background:#ffffff;"></div>
<div style="position:absolute;left:1px;top:676px;width:723px;height:1px;background:#a0a0a0;"></div>
<div style="position:absolute;left:1px;top:676px;width:97px;height:1px;background:#a0a0a0;"></div>
<div style="position:absolute;left:1px;top:676px;width:1px;height:18px;background:#a0a0a0;"></div>
<div style="position:absolute;left:1px;top:694px;width:97px;height:1px;background:#ffffff;"></div>
<div style="position:absolute;left:97px;top:676px;width:1px;height:19px;background:#ffffff;"></div>
<div style="position:absolute;left:100px;top:676px;width:120px;height:1px;background:#a0a0a0;"></div>
<div style="position:absolute;left:100px;top:676px;width:1px;height:18px;background:#a0a0a0;"></div>
<div style="position:absolute;left:100px;top:694px;width:120px;height:1px;background:#ffffff;"></div>
<div style="position:absolute;left:219px;top:676px;width:1px;height:19px;background:#ffffff;"></div>
<div style="position:absolute;left:222px;top:676px;width:120px;height:1px;background:#a0a0a0;"></div>
<div style="position:absolute;left:222px;top:676px;width:1px;height:18px;background:#a0a0a0;"></div>
<div style="position:absolute;left:222px;top:694px;width:120px;height:1px;background:#ffffff;"></div>
<div style="position:absolute;left:341px;top:676px;width:1px;height:19px;background:#ffffff;"></div>
<div style="position:absolute;left:344px;top:676px;width:380px;height:1px;background:#a0a0a0;"></div>
<div style="position:absolute;left:344px;top:676px;width:1px;height:18px;background:#a0a0a0;"></div>
<div style="position:absolute;left:344px;top:694px;width:380px;height:1px;background:#ffffff;"></div>
<div style="position:absolute;left:723px;top:676px;width:1px;height:19px;background:#ffffff;"></div>
<div style="position:absolute;left:3.13px;top:676px;font:12px/20px 'Liberation Sans';white-space:pre;will-change:transform;transform:scaleX(0.8696);transform-origin:0 0;color:#000;">Statistics</div>
<div style="position:absolute;left:103.00px;top:676px;font:12px/20px 'Liberation Sans';white-space:pre;will-change:transform;transform:scaleX(0.8485);transform-origin:0 0;color:#000;">files: 1</div>
<div style="position:absolute;left:224.10px;top:676px;font:12px/20px 'Liberation Sans';white-space:pre;will-change:transform;transform:scaleX(0.8980);transform-origin:0 0;color:#000;">24.52 MB</div>
<div style="position:absolute;left:347.00px;top:676px;font:12px/20px 'Liberation Sans';white-space:pre;will-change:transform;transform:scaleX(0.8791);transform-origin:0 0;color:#000;">0 h 0 min 33.37 s</div>
<svg style="position:absolute;left:705px;top:677px;" width="19" height="18" viewBox="0 0 19 18"><g stroke="#a0a0a0" stroke-width="1.5"><path d="M18 6 L7 17 M18 10 L11 17 M18 14 L15 17"/></g></svg>
<div style="position:absolute;left:31.00px;top:172px;font:12px/20px 'Liberation Sans';white-space:pre;will-change:transform;transform:scaleX(0.9565);transform-origin:0 0;color:#000;">AVI <u>T</u>ags</div>
<div style="position:absolute;left:109.00px;top:172px;font:12px/20px 'Liberation Sans';white-space:pre;will-change:transform;transform:scaleX(0.8788);transform-origin:0 0;color:#000;"><u>I</u>mport</div>
<div style="position:absolute;left:172.00px;top:172px;font:12px/20px 'Liberation Sans';white-space:pre;will-change:transform;transform:scaleX(0.8824);transform-origin:0 0;color:#000;"><u>E</u>xport</div>
<div style="position:absolute;left:236.00px;top:172px;font:12px/20px 'Liberation Sans';white-space:pre;will-change:transform;transform:scaleX(0.9425);transform-origin:0 0;color:#000;"><u>H</u>acks &amp; Tweaks</div>
<div style="position:absolute;left:352.00px;top:170px;font:12px/20px 'Liberation Sans';white-space:pre;will-change:transform;transform:scaleX(0.9175);transform-origin:0 0;color:#000;">Total AVI <u>S</u>tructure</div>
<div style="position:absolute;left:476.00px;top:172px;font:12px/20px 'Liberation Sans';white-space:pre;will-change:transform;transform:scaleX(0.8750);transform-origin:0 0;color:#000;"><u>O</u>ptions</div>
<svg style="position:absolute;left:323px;top:171px;" width="124" height="19" viewBox="0 0 124 19"><rect x="1.5" y="1.5" width="121" height="16" fill="none" stroke="#000" stroke-dasharray="1 1" shape-rendering="crispEdges"/></svg>
<svg style="position:absolute;left:6px;top:172px;" width="20" height="18" viewBox="0 0 20 18"><defs><linearGradient id="tg" x1="0" y1="0" x2="1" y2="1"><stop offset="0" stop-color="#f0f0f0"/><stop offset="1" stop-color="#b0b0b0"/></linearGradient></defs>
<path d="M10 2.5 L16 2.5 L17.5 4 L17.5 9.5 L10.5 16.5 L8 16.5 L3.5 12 L3.5 9 Z" fill="url(#tg)"/>
<path d="M3.5 12 L3.5 9 L10 2.5 L16 2.5 L17.5 4" fill="none" stroke="#808080" stroke-width="1"/>
<path d="M17.5 4 L17.5 9.5 L10.5 16.5 L8 16.5 L3.5 12" fill="none" stroke="#000" stroke-width="1.2"/>
<path d="M7.5 9.5 L11.5 5.5 M9.5 11.5 L13.5 7.5" stroke="#404040" stroke-width="1" stroke-dasharray="1 0.6"/>
<path d="M13 4.5 L18.5 4.5" stroke="#303030" stroke-width="1.6"/></svg>
<svg style="position:absolute;left:86px;top:172px;" width="18" height="18" viewBox="0 0 18 18"><circle cx="9" cy="8.5" r="6" fill="#d8d8d8" stroke="#b8b8b8" stroke-width="1.6"/>
<path d="M9 2.5 A6 6 0 0 1 15 8.5" fill="none" stroke="#000" stroke-width="1.4"/>
<circle cx="9" cy="8.8" r="4" fill="#c8c8c8" stroke="#000" stroke-width="1.5"/>
<path d="M12.3 12.3 L15.6 15.6" stroke="#000" stroke-width="3" stroke-linecap="round"/><path d="M12.6 12.6 L15 15" stroke="#808080" stroke-width="1"/></svg>
<svg style="position:absolute;left:330px;top:172px;" width="17" height="17" viewBox="0 0 17 17"><defs><radialGradient id="mg" cx="0.4" cy="0.4" r="0.6"><stop offset="0" stop-color="#e8e8e8"/><stop offset="1" stop-color="#b0b0b0"/></radialGradient></defs>
<circle cx="5.2" cy="5.2" r="4.3" fill="url(#mg)" stroke="#000" stroke-width="1.3"/>
<path d="M8.5 8.5 L13.5 13.5" stroke="#000" stroke-width="3" stroke-linecap="round"/><path d="M9 9 L13 13" stroke="#909090" stroke-width="1"/></svg>
<svg style="position:absolute;left:151px;top:175px;" width="15" height="13" viewBox="0 0 15 13"><g shape-rendering="crispEdges"><rect x="0" y="0" width="15" height="13" fill="#000"/><rect x="1" y="1" width="13" height="2" fill="#505050"/>
<rect x="1" y="4" width="13" height="8" fill="#fff"/>
<g fill="#000"><rect x="2" y="5" width="3" height="1"/><rect x="6" y="5" width="3" height="1"/><rect x="10" y="5" width="3" height="1"/>
<rect x="2" y="7" width="3" height="1"/><rect x="6" y="7" width="3" height="1"/><rect x="10" y="7" width="3" height="1"/>
<rect x="2" y="9" width="3" height="1"/><rect x="6" y="9" width="3" height="1"/><rect x="10" y="9" width="3" height="1"/>
<rect x="2" y="11" width="3" height="0.6"/><rect x="6" y="11" width="3" height="0.6"/><rect x="10" y="11" width="3" height="0.6"/></g></g></svg>
<svg style="position:absolute;left:212px;top:172px;" width="20" height="18" viewBox="0 0 20 18"><g shape-rendering="crispEdges"><rect x="9" y="2" width="6" height="1" fill="#909090"/><rect x="16" y="2" width="2" height="1" fill="#606060"/><rect x="8" y="3" width="1" height="1" fill="#fff"/><rect x="9" y="3" width="1" height="1" fill="#000"/><rect x="15" y="3" width="1" height="1" fill="#606060"/><rect x="7" y="4" width="1" height="1" fill="#fff"/><rect x="8" y="4" width="1" height="1" fill="#000"/><rect x="9" y="4" width="1" height="1" fill="#fff"/><rect x="10" y="4" width="1" height="1" fill="#000"/><rect x="12" y="4" width="6" height="1" fill="#a8a8a8"/><rect x="2" y="5" width="4" height="1" fill="#909090"/><rect x="6" y="5" width="1" height="1" fill="#fff"/><rect x="7" y="5" width="1" height="1" fill="#000"/><rect x="8" y="5" width="1" height="1" fill="#fff"/><rect x="9" y="5" width="1" height="1" fill="#000"/><rect x="10" y="5" width="1" height="1" fill="#fff"/><rect x="11" y="5" width="1" height="1" fill="#000"/><rect x="12" y="5" width="1" height="1" fill="#909090"/><rect x="13" y="5" width="5" height="1" fill="#a8a8a8"/><rect x="2" y="6" width="1" height="1" fill="#909090"/><rect x="3" y="6" width="3" height="1" fill="#fff"/><rect x="6" y="6" width="1" height="1" fill="#000"/><rect x="7" y="6" width="1" height="1" fill="#fff"/><rect x="8" y="6" width="1" height="1" fill="#000"/><rect x="9" y="6" width="1" height="1" fill="#fff"/><rect x="10" y="6" width="1" height="1" fill="#000"/><rect x="11" y="6" width="1" height="1" fill="#fff"/><rect x="12" y="6" width="1" height="1" fill="#000"/><rect x="13" y="6" width="5" height="1" fill="#a8a8a8"/><rect x="2" y="7" width="1" height="1" fill="#909090"/><rect x="3" y="7" width="4" height="1" fill="#fff"/><rect x="7" y="7" width="1" height="1" fill="#000"/><rect x="8" y="7" width="1" height="1" fill="#fff"/><rect x="9" y="7" width="1" height="1" fill="#000"/><rect x="10" y="7" width="1" height="1" fill="#fff"/><rect x="11" y="7" width="7" height="1" fill="#000"/><rect x="2" y="8" width="1" height="1" fill="#909090"/><rect x="3" y="8" width="5" height="1" fill="#fff"/><rect x="8" y="8" width="1" height="1" fill="#000"/><rect x="9" y="8" width="1" height="1" fill="#fff"/><rect x="10" y="8" width="1" height="1" fill="#000"/><rect x="11" y="8" width="2" height="1" fill="#fff"/><rect x="13" y="8" width="1" height="1" fill="#000"/><rect x="2" y="9" width="1" height="1" fill="#909090"/><rect x="3" y="9" width="6" height="1" fill="#fff"/><rect x="9" y="9" width="1" height="1" fill="#000"/><rect x="10" y="9" width="3" height="1" fill="#fff"/><rect x="13" y="9" width="1" height="1" fill="#000"/><rect x="2" y="10" width="1" height="1" fill="#909090"/><rect x="3" y="10" width="10" height="1" fill="#fff"/><rect x="13" y="10" width="1" height="1" fill="#000"/><rect x="2" y="11" width="1" height="1" fill="#909090"/><rect x="3" y="11" width="1" height="1" fill="#fff"/><rect x="4" y="11" width="2" height="1" fill="#606060"/><rect x="6" y="11" width="1" height="1" fill="#fff"/><rect x="7" y="11" width="5" height="1" fill="#606060"/><rect x="12" y="11" width="1" height="1" fill="#fff"/><rect x="13" y="11" width="1" height="1" fill="#000"/><rect x="2" y="12" width="1" height="1" fill="#909090"/><rect x="3" y="12" width="10" height="1" fill="#fff"/><rect x="13" y="12" width="1" height="1" fill="#000"/><rect x="2" y="13" width="1" height="1" fill="#909090"/><rect x="3" y="13" width="1" height="1" fill="#fff"/><rect x="4" y="13" width="2" height="1" fill="#606060"/><rect x="6" y="13" width="1" height="1" fill="#fff"/><rect x="7" y="13" width="5" height="1" fill="#606060"/><rect x="12" y="13" width="1" height="1" fill="#fff"/><rect x="13" y="13" width="1" height="1" fill="#000"/><rect x="2" y="14" width="1" height="1" fill="#909090"/><rect x="3" y="14" width="10" height="1" fill="#fff"/><rect x="13" y="14" width="1" height="1" fill="#000"/><rect x="2" y="15" width="12" height="1" fill="#000"/></g></svg>
<svg style="position:absolute;left:450px;top:170px;" width="20" height="20" viewBox="0 0 20 20"><g shape-rendering="crispEdges"><rect x="13" y="3" width="2" height="1" fill="#000"/><rect x="13" y="4" width="2" height="1" fill="#000"/><rect x="5" y="5" width="3" height="1" fill="#000"/><rect x="13" y="5" width="2" height="1" fill="#000"/><rect x="5" y="6" width="1" height="1" fill="#000"/><rect x="9" y="6" width="3" height="1" fill="#a0a0a0"/><rect x="13" y="6" width="2" height="1" fill="#000"/><rect x="5" y="7" width="1" height="1" fill="#000"/><rect x="13" y="7" width="2" height="1" fill="#000"/><rect x="9" y="8" width="3" height="1" fill="#a0a0a0"/><rect x="13" y="8" width="2" height="1" fill="#000"/><rect x="5" y="9" width="3" height="1" fill="#000"/><rect x="13" y="9" width="2" height="1" fill="#000"/><rect x="5" y="10" width="1" height="1" fill="#000"/><rect x="10" y="10" width="1" height="1" fill="#a0a0a0"/><rect x="13" y="10" width="1" height="1" fill="#000"/><rect x="5" y="11" width="1" height="1" fill="#000"/><rect x="10" y="11" width="1" height="1" fill="#a0a0a0"/><rect x="13" y="11" width="1" height="1" fill="#000"/><rect x="16" y="11" width="1" height="1" fill="#000"/><rect x="10" y="12" width="1" height="1" fill="#a0a0a0"/><rect x="13" y="12" width="1" height="1" fill="#000"/><rect x="15" y="12" width="1" height="1" fill="#000"/><rect x="10" y="13" width="1" height="1" fill="#a0a0a0"/><rect x="13" y="13" width="1" height="1" fill="#000"/><rect x="11" y="14" width="2" height="1" fill="#000"/><rect x="15" y="14" width="3" height="1" fill="#000"/><rect x="4" y="16" width="3" height="1" fill="#000"/><rect x="9" y="16" width="2" height="1" fill="#a0a0a0"/><rect x="15" y="16" width="2" height="1" fill="#000"/><rect x="7" y="17" width="2" height="1" fill="#000"/><rect x="11" y="17" width="2" height="1" fill="#000"/><rect x="15" y="17" width="1" height="1" fill="#000"/><rect x="11" y="18" width="2" height="1" fill="#000"/></g></svg>
<svg style="position:absolute;left:541px;top:122px;" width="9" height="18" viewBox="0 0 9 18"><g shape-rendering="crispEdges" fill="#000020"><rect x="1" y="1" width="3" height="1"/><rect x="5" y="1" width="3" height="1"/>
<rect x="4" y="2" width="1" height="14"/><rect x="1" y="16" width="3" height="1"/><rect x="5" y="16" width="3" height="1"/></g></svg></body></html>
